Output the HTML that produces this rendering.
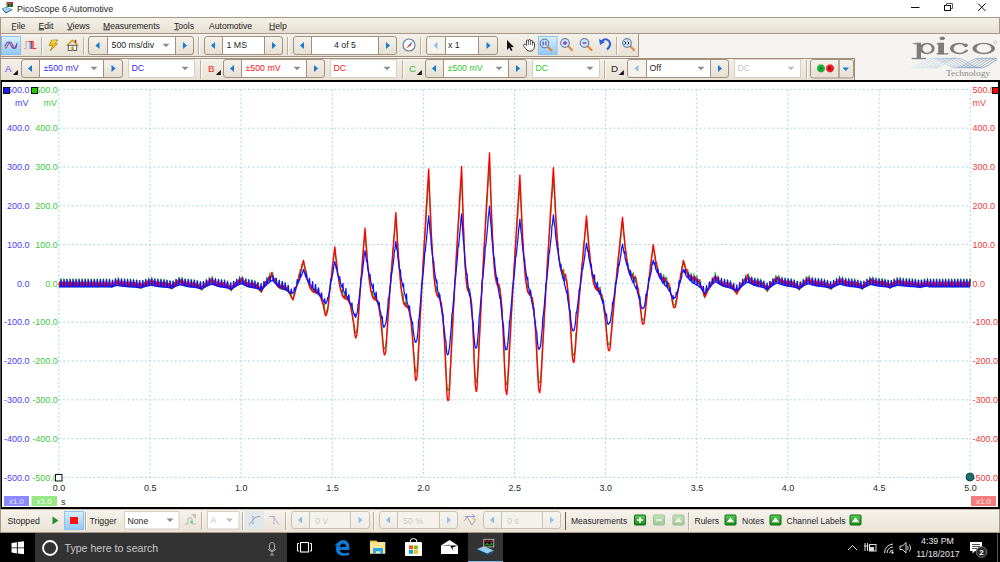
<!DOCTYPE html><html><head><meta charset="utf-8"><style>html,body{margin:0;padding:0;width:1000px;height:562px;overflow:hidden;background:#fff}svg{display:block}</style></head><body>
<svg width="1000" height="562" viewBox="0 0 1000 562" font-family='"Liberation Sans", sans-serif'>
<defs>
<linearGradient id="gmenu" x1="0" y1="0" x2="0" y2="1"><stop offset="0" stop-color="#f6f3ed"/><stop offset="1" stop-color="#e5ddcf"/></linearGradient>
<linearGradient id="gpanel" x1="0" y1="0" x2="0" y2="1"><stop offset="0" stop-color="#f4f1ea"/><stop offset="1" stop-color="#e7e1d5"/></linearGradient>
<linearGradient id="gbtn" x1="0" y1="0" x2="0" y2="1"><stop offset="0" stop-color="#f5f2ec"/><stop offset="1" stop-color="#e6dfd2"/></linearGradient>
<linearGradient id="gbtnd" x1="0" y1="0" x2="0" y2="1"><stop offset="0" stop-color="#f7f5f1"/><stop offset="1" stop-color="#efebe4"/></linearGradient>
<linearGradient id="gsel" x1="0" y1="0" x2="0" y2="1"><stop offset="0" stop-color="#d8f0fd"/><stop offset="1" stop-color="#8fc9f7"/></linearGradient>
<linearGradient id="gstatus" x1="0" y1="0" x2="0" y2="1"><stop offset="0" stop-color="#f6f3ed"/><stop offset="1" stop-color="#e9e3d6"/></linearGradient>
<linearGradient id="ggreen" x1="0" y1="0" x2="0" y2="1"><stop offset="0" stop-color="#5fcf5f"/><stop offset="1" stop-color="#168a16"/></linearGradient>
</defs>
<rect x="0" y="0" width="1000" height="17" fill="#ffffff" />
<polygon points="1.8,8.4 6.5,7 12.8,9.8 5.6,13.6" fill="#24466e"/>
<polygon points="2.6,8.5 6.5,7.3 11.6,9.6 5.6,12.4" fill="#9fd3f3"/>
<rect x="6.6" y="2.2" width="6.4" height="4.6" fill="#1a2a1a" />
<rect x="7" y="2.6" width="5.6" height="1.8" fill="#d83a3a" />
<rect x="7" y="4.4" width="5.6" height="2.2" fill="#20b030" />
<rect x="8.2" y="4.2" width="0.9" height="2.4" fill="#111" />
<rect x="10.8" y="4.2" width="0.9" height="2.4" fill="#111" />
<text x="17" y="12" font-size="8.9" fill="#1a1a1a" text-anchor="start" >PicoScope 6 Automotive</text>
<line x1="911" y1="7.5" x2="919.5" y2="7.5" stroke="#111111" stroke-width="1" />
<rect x="944.5" y="5.5" width="6" height="5" fill="none" stroke="#111" stroke-width="1"/>
<path d="M946.5,5.5 V3.5 H952.5 V8.5 H950.5" fill="none" stroke="#555" stroke-width="1"/>
<line x1="978" y1="3.5" x2="985.5" y2="11" stroke="#111111" stroke-width="1" />
<line x1="985.5" y1="3.5" x2="978" y2="11" stroke="#111111" stroke-width="1" />
<rect x="0" y="17" width="1000" height="17" fill="url(#gmenu)" />
<line x1="0" y1="17.5" x2="1000" y2="17.5" stroke="#a8978a" stroke-width="1" />
<line x1="0" y1="33.5" x2="1000" y2="33.5" stroke="#a8978a" stroke-width="1" />
<line x1="0.5" y1="17" x2="0.5" y2="80" stroke="#a8978a" stroke-width="1" />
<line x1="999.5" y1="17" x2="999.5" y2="34" stroke="#a8978a" stroke-width="1" />
<text x="11.5" y="28.6" font-size="8.6" fill="#1a1a1a" text-anchor="start" >File</text>
<line x1="11.8" y1="29.8" x2="16.0" y2="29.8" stroke="#1a1a1a" stroke-width="0.9" />
<text x="38.5" y="28.6" font-size="8.6" fill="#1a1a1a" text-anchor="start" >Edit</text>
<line x1="38.8" y1="29.8" x2="44.0" y2="29.8" stroke="#1a1a1a" stroke-width="0.9" />
<text x="67" y="28.6" font-size="8.6" fill="#1a1a1a" text-anchor="start" >Views</text>
<line x1="67.3" y1="29.8" x2="72.5" y2="29.8" stroke="#1a1a1a" stroke-width="0.9" />
<text x="103" y="28.6" font-size="8.6" fill="#1a1a1a" text-anchor="start" >Measurements</text>
<line x1="103.3" y1="29.8" x2="110" y2="29.8" stroke="#1a1a1a" stroke-width="0.9" />
<text x="174" y="28.6" font-size="8.6" fill="#1a1a1a" text-anchor="start" >Tools</text>
<line x1="174.3" y1="29.8" x2="179" y2="29.8" stroke="#1a1a1a" stroke-width="0.9" />
<text x="209" y="28.6" font-size="8.6" fill="#1a1a1a" text-anchor="start" >Automotive</text>
<text x="269" y="28.6" font-size="8.6" fill="#1a1a1a" text-anchor="start" >Help</text>
<line x1="269.3" y1="29.8" x2="275" y2="29.8" stroke="#1a1a1a" stroke-width="0.9" />
<rect x="0" y="34" width="1000" height="46" fill="#f4f3ef" />
<rect x="1" y="34" width="638" height="23" fill="url(#gpanel)" />
<line x1="638.5" y1="34" x2="638.5" y2="57" stroke="#a3917f" stroke-width="1" />
<line x1="1" y1="56.5" x2="639" y2="56.5" stroke="#a3917f" stroke-width="1" />
<rect x="1" y="57" width="1000" height="1" fill="#f4f3ef" />
<rect x="1" y="58" width="854" height="22" fill="url(#gpanel)" />
<line x1="1" y1="58.5" x2="855" y2="58.5" stroke="#a3917f" stroke-width="1" />
<line x1="854.5" y1="58" x2="854.5" y2="80" stroke="#a3917f" stroke-width="1" />
<line x1="0.5" y1="17" x2="0.5" y2="80" stroke="#a8978a" stroke-width="1" />
<rect x="1.5" y="36.5" width="19" height="18" fill="url(#gsel)" stroke="#8ec2ee" stroke-width="1"/>
<path d="M5,48.5 C7,48.5 8.5,42 10.5,42 C12.5,42 13,48.5 15,48.5 C16,48.5 16.5,46.5 17,45.5" fill="none" stroke="#e83a3a" stroke-width="1.1"/>
<path d="M5,46.5 C6,44 7,42 8.5,42 C10.5,42 11.5,48.5 13.5,48.5 C15.5,48.5 16.5,44.5 17,43" fill="none" stroke="#3a4ae8" stroke-width="1.1"/>
<path d="M24,48.5 H26 V41.5 H29" fill="none" stroke="#f39a9a" stroke-width="1.2"/>
<path d="M29,41.5 H33 V48.5 H36" fill="none" stroke="#ff1a1a" stroke-width="1.2"/>
<rect x="29.2" y="42" width="1.8" height="7" fill="#55c0ee" />
<rect x="31" y="42" width="1.2" height="7" fill="#c03080" />
<line x1="41.5" y1="37" x2="41.5" y2="55" stroke="#bcae9f" stroke-width="1" />
<line x1="42.5" y1="37" x2="42.5" y2="55" stroke="#ffffff" stroke-width="1" opacity="0.8"/>
<path d="M51.5,40.2 L58,40 L54.8,43.8 L57.6,43.8 L50.2,50.8 L52.6,45.6 L49,45.6 Z" fill="#f2c21a" stroke="#a87c0a" stroke-width="0.7" stroke-linejoin="round"/>
<path d="M52.5,41 L55.5,41 L53.5,43.5" fill="none" stroke="#fff6c0" stroke-width="0.8"/>
<rect x="68.3" y="45.3" width="8.4" height="5.2" fill="#f4fbff" stroke="#3c4a66" stroke-width="0.9"/>
<path d="M66.8,45.8 L72.5,40.2 L78.2,45.8" fill="none" stroke="#c89410" stroke-width="1.4" stroke-linejoin="round"/>
<rect x="71.3" y="46.5" width="2.6" height="4" fill="#d49c12" />
<rect x="75" y="39.8" width="1.2" height="2.8" fill="#a01414" />
<line x1="83.5" y1="37" x2="83.5" y2="55" stroke="#bcae9f" stroke-width="1" />
<line x1="84.5" y1="37" x2="84.5" y2="55" stroke="#ffffff" stroke-width="1" opacity="0.8"/>
<rect x="88.5" y="36.5" width="105" height="18" rx="2.5" fill="url(#gbtn)" stroke="#a3917f" stroke-width="1"/>
<rect x="107" y="37" width="69" height="17" fill="#ffffff" />
<line x1="107.5" y1="37" x2="107.5" y2="54" stroke="#a3917f" stroke-width="1" />
<line x1="175.5" y1="37" x2="175.5" y2="54" stroke="#a3917f" stroke-width="1" />
<path d="M99.5,42.0 L95.5,45.5 L99.5,49.0 Z" fill="#1778d2"/>
<path d="M183.0,42.0 L187.0,45.5 L183.0,49.0 Z" fill="#1778d2"/>
<text x="111.5" y="48.2" font-size="8.8" fill="#1e1e1e" text-anchor="start" >500 ms/div</text>
<path d="M162.5,43.7 L169.5,43.7 L166,47.3 Z" fill="#8c8c8c"/>
<line x1="198.5" y1="37" x2="198.5" y2="55" stroke="#bcae9f" stroke-width="1" />
<line x1="199.5" y1="37" x2="199.5" y2="55" stroke="#ffffff" stroke-width="1" opacity="0.8"/>
<rect x="204.5" y="36.5" width="78" height="18" rx="2.5" fill="url(#gbtn)" stroke="#a3917f" stroke-width="1"/>
<rect x="222" y="37" width="43" height="17" fill="#ffffff" />
<line x1="222.5" y1="37" x2="222.5" y2="54" stroke="#a3917f" stroke-width="1" />
<line x1="264.5" y1="37" x2="264.5" y2="54" stroke="#a3917f" stroke-width="1" />
<path d="M215.0,42.0 L211.0,45.5 L215.0,49.0 Z" fill="#1778d2"/>
<path d="M272.0,42.0 L276.0,45.5 L272.0,49.0 Z" fill="#1778d2"/>
<text x="226.5" y="48.2" font-size="8.8" fill="#1e1e1e" text-anchor="start" >1 MS</text>
<line x1="287.5" y1="37" x2="287.5" y2="55" stroke="#bcae9f" stroke-width="1" />
<line x1="288.5" y1="37" x2="288.5" y2="55" stroke="#ffffff" stroke-width="1" opacity="0.8"/>
<rect x="293.5" y="36.5" width="103" height="18" rx="2.5" fill="url(#gbtn)" stroke="#a3917f" stroke-width="1"/>
<rect x="311" y="37" width="68" height="17" fill="#ffffff" />
<line x1="311.5" y1="37" x2="311.5" y2="54" stroke="#a3917f" stroke-width="1" />
<line x1="378.5" y1="37" x2="378.5" y2="54" stroke="#a3917f" stroke-width="1" />
<path d="M304.0,42.0 L300.0,45.5 L304.0,49.0 Z" fill="#1778d2"/>
<path d="M386.0,42.0 L390.0,45.5 L386.0,49.0 Z" fill="#1778d2"/>
<text x="345" y="48.2" font-size="8.8" fill="#1e1e1e" text-anchor="middle" >4 of 5</text>
<circle cx="409" cy="45" r="6" fill="#ffffff" stroke="#6a7f9a" stroke-width="1.2"/>
<path d="M406,48.5 L409.5,44.2 L410.8,45.5 Z" fill="#e02020"/><path d="M412.5,41.5 L409.5,44.2 L410.8,45.5 Z" fill="#3050d0"/>
<line x1="420.5" y1="37" x2="420.5" y2="55" stroke="#bcae9f" stroke-width="1" />
<line x1="421.5" y1="37" x2="421.5" y2="55" stroke="#ffffff" stroke-width="1" opacity="0.8"/>
<rect x="426.5" y="36.5" width="71" height="18" rx="2.5" fill="url(#gbtn)" stroke="#a3917f" stroke-width="1"/>
<rect x="427.5" y="37.5" width="17" height="16" fill="#f5f3ee" />
<rect x="445" y="37" width="34" height="17" fill="#ffffff" />
<line x1="445.5" y1="37" x2="445.5" y2="54" stroke="#a3917f" stroke-width="1" />
<line x1="478.5" y1="37" x2="478.5" y2="54" stroke="#a3917f" stroke-width="1" />
<path d="M437.5,42.0 L433.5,45.5 L437.5,49.0 Z" fill="#8fc0e8"/>
<path d="M486.5,42.0 L490.5,45.5 L486.5,49.0 Z" fill="#1778d2"/>
<text x="448" y="48.2" font-size="8.8" fill="#1e1e1e" text-anchor="start" >x 1</text>
<path d="M507,40 L507,50 L509.3,47.8 L511,51 L512.5,50.3 L510.8,47.2 L514,47 Z" fill="#111"/>
<path d="M524,46.5 L526,48.8 Q527,51 529,51 L532,51 Q534.5,49 534.5,46 L534.5,43.2 Q534.5,42.2 533.5,42.2 Q532.5,42.2 532.5,43.2 L532.5,41.5 Q532.5,40.5 531.5,40.5 Q530.5,40.5 530.5,41.5 L530.5,40.5 Q530.5,39.5 529.5,39.5 Q528.5,39.5 528.5,40.5 L528.5,41 Q528.5,40 527.5,40 Q526.5,40 526.5,41 L526.5,45.5 L525.5,44.5 Q524.5,43.8 523.8,44.6 Q523.3,45.3 524,46.5 Z" fill="#ffffff" stroke="#151515" stroke-width="0.8"/>
<path d="M528.5,41 V45 M530.5,41.5 V45 M532.5,43 V45.5" fill="none" stroke="#151515" stroke-width="0.6"/>
<rect x="538.5" y="36.5" width="18.5" height="18" fill="url(#gsel)" stroke="#8ec2ee" stroke-width="1"/>
<line x1="547.5" y1="46.5" x2="551.5" y2="50.5" stroke="#e88a3a" stroke-width="2.4" stroke-linecap="round"/>
<circle cx="544.5" cy="43.5" r="4.3" fill="#c9e4f6" stroke="#6d86a8" stroke-width="1.2"/>
<rect x="542.5" y="41.5" width="1.2" height="4" fill="#6040c0"/><rect x="545.3" y="41.5" width="1.2" height="4" fill="#6040c0"/>
<line x1="568" y1="46" x2="572" y2="50" stroke="#e88a3a" stroke-width="2.4" stroke-linecap="round"/>
<circle cx="565" cy="43" r="4.3" fill="#c9e4f6" stroke="#6d86a8" stroke-width="1.2"/>
<path d="M563,43 H567 M565,41 V45" stroke="#8040c0" stroke-width="1.4"/>
<line x1="587.5" y1="46" x2="591.5" y2="50" stroke="#e88a3a" stroke-width="2.4" stroke-linecap="round"/>
<circle cx="584.5" cy="43" r="4.3" fill="#c9e4f6" stroke="#6d86a8" stroke-width="1.2"/>
<path d="M582.5,43 H586.5" stroke="#8040c0" stroke-width="1.4"/>
<path d="M601,42 Q605,37 609,41 Q612,45 607,49.5" fill="none" stroke="#2a5fd8" stroke-width="2"/><path d="M599,39 L600,45 L605,42 Z" fill="#2a5fd8"/>
<line x1="616.5" y1="37" x2="616.5" y2="55" stroke="#bcae9f" stroke-width="1" />
<line x1="617.5" y1="37" x2="617.5" y2="55" stroke="#ffffff" stroke-width="1" opacity="0.8"/>
<line x1="630" y1="46" x2="634" y2="50" stroke="#e88a3a" stroke-width="2.4" stroke-linecap="round"/>
<circle cx="627" cy="43" r="4.3" fill="#c9e4f6" stroke="#6d86a8" stroke-width="1.2"/>
<path d="M624.5,41.5 L626,43 L624.5,44.5 M627.5,41.5 L629,43 L627.5,44.5" stroke="#111" stroke-width="1" fill="none"/>
<text x="5" y="71.9" font-size="9.8" fill="#5a4df5" text-anchor="start" >A</text>
<path d="M17.8,75 L12.8,75 L17.8,70 Z" fill="#111"/>
<rect x="21.5" y="59.5" width="101" height="18" rx="2.5" fill="url(#gbtn)" stroke="#a3917f" stroke-width="1"/>
<rect x="39" y="60" width="65" height="17" fill="#ffffff" />
<line x1="39.5" y1="60" x2="39.5" y2="77" stroke="#a3917f" stroke-width="1" />
<line x1="103.5" y1="60" x2="103.5" y2="77" stroke="#a3917f" stroke-width="1" />
<path d="M32.0,65.0 L28.0,68.5 L32.0,72.0 Z" fill="#1778d2"/>
<path d="M111.5,65.0 L115.5,68.5 L111.5,72.0 Z" fill="#1778d2"/>
<text x="43.5" y="71.2" font-size="8.8" fill="#3a2cf5" text-anchor="start" >±500 mV</text>
<path d="M90.5,66.7 L97.5,66.7 L94,70.3 Z" fill="#8c8c8c"/>
<rect x="128.5" y="59.5" width="66" height="18" fill="#ffffff" stroke="#d8cfc4" stroke-width="1"/>
<text x="131.5" y="71.4" font-size="8.8" fill="#3a2cf5" text-anchor="start" >DC</text>
<path d="M181.5,66.7 L188.5,66.7 L185,70.3 Z" fill="#8c8c8c"/>
<line x1="200.5" y1="60" x2="200.5" y2="79" stroke="#bcae9f" stroke-width="1" />
<line x1="201.5" y1="60" x2="201.5" y2="79" stroke="#ffffff" stroke-width="1" opacity="0.8"/>
<text x="208" y="71.9" font-size="9.8" fill="#f02020" text-anchor="start" >B</text>
<path d="M220.8,75 L215.8,75 L220.8,70 Z" fill="#111"/>
<rect x="223.5" y="59.5" width="101" height="18" rx="2.5" fill="url(#gbtn)" stroke="#a3917f" stroke-width="1"/>
<rect x="241" y="60" width="66" height="17" fill="#ffffff" />
<line x1="241.5" y1="60" x2="241.5" y2="77" stroke="#a3917f" stroke-width="1" />
<line x1="306.5" y1="60" x2="306.5" y2="77" stroke="#a3917f" stroke-width="1" />
<path d="M234.0,65.0 L230.0,68.5 L234.0,72.0 Z" fill="#1778d2"/>
<path d="M314.0,65.0 L318.0,68.5 L314.0,72.0 Z" fill="#1778d2"/>
<text x="245.5" y="71.2" font-size="8.8" fill="#f02020" text-anchor="start" >±500 mV</text>
<path d="M293.5,66.7 L300.5,66.7 L297,70.3 Z" fill="#8c8c8c"/>
<rect x="330.5" y="59.5" width="66" height="18" fill="#ffffff" stroke="#d8cfc4" stroke-width="1"/>
<text x="333.5" y="71.4" font-size="8.8" fill="#f02020" text-anchor="start" >DC</text>
<path d="M383.5,66.7 L390.5,66.7 L387,70.3 Z" fill="#8c8c8c"/>
<line x1="402.5" y1="60" x2="402.5" y2="79" stroke="#bcae9f" stroke-width="1" />
<line x1="403.5" y1="60" x2="403.5" y2="79" stroke="#ffffff" stroke-width="1" opacity="0.8"/>
<text x="409" y="71.9" font-size="9.8" fill="#30c830" text-anchor="start" >C</text>
<path d="M421.8,75 L416.8,75 L421.8,70 Z" fill="#111"/>
<rect x="425.5" y="59.5" width="101" height="18" rx="2.5" fill="url(#gbtn)" stroke="#a3917f" stroke-width="1"/>
<rect x="443" y="60" width="66" height="17" fill="#ffffff" />
<line x1="443.5" y1="60" x2="443.5" y2="77" stroke="#a3917f" stroke-width="1" />
<line x1="508.5" y1="60" x2="508.5" y2="77" stroke="#a3917f" stroke-width="1" />
<path d="M436.0,65.0 L432.0,68.5 L436.0,72.0 Z" fill="#1778d2"/>
<path d="M516.0,65.0 L520.0,68.5 L516.0,72.0 Z" fill="#1778d2"/>
<text x="447.5" y="71.2" font-size="8.8" fill="#30c830" text-anchor="start" >±500 mV</text>
<path d="M495.5,66.7 L502.5,66.7 L499,70.3 Z" fill="#8c8c8c"/>
<rect x="532.5" y="59.5" width="67" height="18" fill="#ffffff" stroke="#d8cfc4" stroke-width="1"/>
<text x="535.5" y="71.4" font-size="8.8" fill="#30c830" text-anchor="start" >DC</text>
<path d="M586.5,66.7 L593.5,66.7 L590,70.3 Z" fill="#8c8c8c"/>
<line x1="604.5" y1="60" x2="604.5" y2="79" stroke="#bcae9f" stroke-width="1" />
<line x1="605.5" y1="60" x2="605.5" y2="79" stroke="#ffffff" stroke-width="1" opacity="0.8"/>
<text x="611" y="71.9" font-size="9.8" fill="#1e1e1e" text-anchor="start" >D</text>
<path d="M623.8,75 L618.8,75 L623.8,70 Z" fill="#111"/>
<rect x="627.5" y="59.5" width="101" height="18" rx="2.5" fill="url(#gbtn)" stroke="#a3917f" stroke-width="1"/>
<rect x="628.5" y="60.5" width="17" height="16" fill="#f5f3ee" />
<rect x="646" y="60" width="65" height="17" fill="#ffffff" />
<line x1="646.5" y1="60" x2="646.5" y2="77" stroke="#a3917f" stroke-width="1" />
<line x1="710.5" y1="60" x2="710.5" y2="77" stroke="#a3917f" stroke-width="1" />
<path d="M638.5,65.0 L634.5,68.5 L638.5,72.0 Z" fill="#8fc0e8"/>
<path d="M718.0,65.0 L722.0,68.5 L718.0,72.0 Z" fill="#1778d2"/>
<text x="649.5" y="71.2" font-size="8.8" fill="#1e1e1e" text-anchor="start" >Off</text>
<path d="M697.5,66.7 L704.5,66.7 L701,70.3 Z" fill="#8c8c8c"/>
<rect x="734.5" y="59.5" width="66" height="18" fill="#ffffff" stroke="#d8cfc4" stroke-width="1"/>
<text x="737.5" y="71.4" font-size="8.8" fill="#c4c4c4" text-anchor="start" >DC</text>
<path d="M787.5,66.7 L794.5,66.7 L791,70.3 Z" fill="#bdbdbd"/>
<line x1="806.5" y1="60" x2="806.5" y2="79" stroke="#bcae9f" stroke-width="1" />
<line x1="807.5" y1="60" x2="807.5" y2="79" stroke="#ffffff" stroke-width="1" opacity="0.8"/>
<rect x="810.5" y="59.5" width="43" height="18.5" rx="2.5" fill="url(#gbtn)" stroke="#a3917f"/>
<line x1="839" y1="60" x2="839" y2="78" stroke="#a3917f" stroke-width="1.4" />
<polygon points="824.88,70.01 822.61,72.28 819.39,72.28 817.12,70.01 817.12,66.79 819.39,64.52 822.61,64.52 824.88,66.79" fill="#1fb33a"/>
<polygon points="833.88,70.01 831.61,72.28 828.39,72.28 826.12,70.01 826.12,66.79 828.39,64.52 831.61,64.52 833.88,66.79" fill="#f01c28"/>
<path d="M819.8,70 L821,67 L822.2,70" fill="none" stroke="#063" stroke-width="0.7"/><path d="M829.3,67 V70 M829.3,68.5 L831,67 M829.3,68.5 L831,70" fill="none" stroke="#300" stroke-width="0.7"/>
<path d="M842.5,67.5 H849 L845.75,71 Z" fill="#1a78d0"/>
<g fill="#7c7c7c">
<path fill-rule="evenodd" d="M919.3,48.45 a7.7,5.75 0 1 0 15.4,0 a7.7,5.75 0 1 0 -15.4,0 Z M922.6,48.45 a4.6,4.3 0 1 0 9.2,0 a4.6,4.3 0 1 0 -9.2,0 Z" />
<rect x="916.7" y="42.7" width="4.3" height="16.2"/><rect x="911.7" y="57.9" width="14.5" height="1.3"/><path d="M911.7,43.8 L916.7,42.7 L916.7,44.6 Z"/>
<rect x="938.2" y="42.7" width="5.8" height="11.6"/><rect x="936.5" y="53.2" width="12" height="1.2"/><path d="M936.3,43.9 L938.2,42.7 L938.2,44.8 Z"/><ellipse cx="942.3" cy="38.3" rx="2.6" ry="1.9"/>
</g>
<defs><clipPath id="cclip"><path d="M940,34 H975 V43.8 L959,48.6 L975,51.2 V62 H940 Z"/></clipPath></defs>
<path fill="#7c7c7c" fill-rule="evenodd" clip-path="url(#cclip)" d="M950,48.45 a9.3,5.75 0 1 0 18.6,0 a9.3,5.75 0 1 0 -18.6,0 Z M953.6,48.45 a6.1,4.3 0 1 0 12.2,0 a6.1,4.3 0 1 0 -12.2,0 Z"/>
<ellipse cx="965.6" cy="45.2" rx="2.2" ry="1.8" fill="#7c7c7c"/>
<path fill="#7c7c7c" fill-rule="evenodd" d="M972.4,48.45 a11.3,5.75 0 1 0 22.6,0 a11.3,5.75 0 1 0 -22.6,0 Z M976.4,48.45 a7.5,4.35 0 1 0 15,0 a7.5,4.35 0 1 0 -15,0 Z"/>
<circle cx="995.3" cy="42.3" r="1.3" fill="none" stroke="#a0a0a0" stroke-width="0.5"/>
<text x="946" y="75.6" font-size="9.2" fill="#8a8a8a" font-family="'Liberation Serif', serif" textLength="44" lengthAdjust="spacingAndGlyphs">Technology</text>
<defs><linearGradient id="gwave" gradientUnits="userSpaceOnUse" x1="908" y1="0" x2="997" y2="0"><stop offset="0" stop-color="#dfe9f3"/><stop offset="0.45" stop-color="#a9c1da"/><stop offset="1" stop-color="#5f7ca4"/></linearGradient><clipPath id="wclip"><rect x="908" y="50" width="90" height="25"/></clipPath></defs>
<g clip-path="url(#wclip)" fill="none" stroke="url(#gwave)" stroke-width="0.65">
<path d="M910.0,67.90 L911.0,67.85 L912.0,67.72 L913.0,67.49 L914.0,67.19 L915.0,66.80 L916.0,66.34 L917.0,65.83 L918.0,65.25 L919.0,64.64 L920.0,64.00 L921.0,63.33 L922.0,62.67 L923.0,62.00 L924.0,61.36 L925.0,60.75 L926.0,60.17 L927.0,59.66 L928.0,59.20 L929.0,58.81 L930.0,58.51 L931.0,58.28 L932.0,58.15 L933.0,58.10 L934.0,58.15 L935.0,58.28 L936.0,58.51 L937.0,58.81 L938.0,59.20 L939.0,59.66 L940.0,60.17 L941.0,60.75 L942.0,61.36 L943.0,62.00 L944.0,62.67 L945.0,63.33 L946.0,64.00 L947.0,64.64 L948.0,65.25 L949.0,65.83 L950.0,66.34 L951.0,66.80 L952.0,67.19 L953.0,67.49 L954.0,67.72 L955.0,67.85 L956.0,67.90 L957.0,67.85 L958.0,67.72 L959.0,67.49 L960.0,67.19 L961.0,66.80 L962.0,66.34 L963.0,65.83 L964.0,65.25 L965.0,64.64 L966.0,64.00 L967.0,63.33 L968.0,62.67 L969.0,62.00 L970.0,61.36 L971.0,60.75 L972.0,60.17 L973.0,59.66 L974.0,59.20 L975.0,58.81 L976.0,58.51 L977.0,58.28 L978.0,58.15 L979.0,58.10"/>
<path d="M914.0,67.90 L915.0,67.85 L916.0,67.72 L917.0,67.49 L918.0,67.19 L919.0,66.80 L920.0,66.34 L921.0,65.83 L922.0,65.25 L923.0,64.64 L924.0,64.00 L925.0,63.33 L926.0,62.67 L927.0,62.00 L928.0,61.36 L929.0,60.75 L930.0,60.17 L931.0,59.66 L932.0,59.20 L933.0,58.81 L934.0,58.51 L935.0,58.28 L936.0,58.15 L937.0,58.10 L938.0,58.15 L939.0,58.28 L940.0,58.51 L941.0,58.81 L942.0,59.20 L943.0,59.66 L944.0,60.17 L945.0,60.75 L946.0,61.36 L947.0,62.00 L948.0,62.67 L949.0,63.33 L950.0,64.00 L951.0,64.64 L952.0,65.25 L953.0,65.83 L954.0,66.34 L955.0,66.80 L956.0,67.19 L957.0,67.49 L958.0,67.72 L959.0,67.85 L960.0,67.90 L961.0,67.85 L962.0,67.72 L963.0,67.49 L964.0,67.19 L965.0,66.80 L966.0,66.34 L967.0,65.83 L968.0,65.25 L969.0,64.64 L970.0,64.00 L971.0,63.33 L972.0,62.67 L973.0,62.00 L974.0,61.36 L975.0,60.75 L976.0,60.17 L977.0,59.66 L978.0,59.20 L979.0,58.81 L980.0,58.51 L981.0,58.28 L982.0,58.15 L983.0,58.10"/>
<path d="M918.0,67.90 L919.0,67.85 L920.0,67.72 L921.0,67.49 L922.0,67.19 L923.0,66.80 L924.0,66.34 L925.0,65.83 L926.0,65.25 L927.0,64.64 L928.0,64.00 L929.0,63.33 L930.0,62.67 L931.0,62.00 L932.0,61.36 L933.0,60.75 L934.0,60.17 L935.0,59.66 L936.0,59.20 L937.0,58.81 L938.0,58.51 L939.0,58.28 L940.0,58.15 L941.0,58.10 L942.0,58.15 L943.0,58.28 L944.0,58.51 L945.0,58.81 L946.0,59.20 L947.0,59.66 L948.0,60.17 L949.0,60.75 L950.0,61.36 L951.0,62.00 L952.0,62.67 L953.0,63.33 L954.0,64.00 L955.0,64.64 L956.0,65.25 L957.0,65.83 L958.0,66.34 L959.0,66.80 L960.0,67.19 L961.0,67.49 L962.0,67.72 L963.0,67.85 L964.0,67.90 L965.0,67.85 L966.0,67.72 L967.0,67.49 L968.0,67.19 L969.0,66.80 L970.0,66.34 L971.0,65.83 L972.0,65.25 L973.0,64.64 L974.0,64.00 L975.0,63.33 L976.0,62.67 L977.0,62.00 L978.0,61.36 L979.0,60.75 L980.0,60.17 L981.0,59.66 L982.0,59.20 L983.0,58.81 L984.0,58.51 L985.0,58.28 L986.0,58.15 L987.0,58.10"/>
<path d="M922.0,67.90 L923.0,67.85 L924.0,67.72 L925.0,67.49 L926.0,67.19 L927.0,66.80 L928.0,66.34 L929.0,65.83 L930.0,65.25 L931.0,64.64 L932.0,64.00 L933.0,63.33 L934.0,62.67 L935.0,62.00 L936.0,61.36 L937.0,60.75 L938.0,60.17 L939.0,59.66 L940.0,59.20 L941.0,58.81 L942.0,58.51 L943.0,58.28 L944.0,58.15 L945.0,58.10 L946.0,58.15 L947.0,58.28 L948.0,58.51 L949.0,58.81 L950.0,59.20 L951.0,59.66 L952.0,60.17 L953.0,60.75 L954.0,61.36 L955.0,62.00 L956.0,62.67 L957.0,63.33 L958.0,64.00 L959.0,64.64 L960.0,65.25 L961.0,65.83 L962.0,66.34 L963.0,66.80 L964.0,67.19 L965.0,67.49 L966.0,67.72 L967.0,67.85 L968.0,67.90 L969.0,67.85 L970.0,67.72 L971.0,67.49 L972.0,67.19 L973.0,66.80 L974.0,66.34 L975.0,65.83 L976.0,65.25 L977.0,64.64 L978.0,64.00 L979.0,63.33 L980.0,62.67 L981.0,62.00 L982.0,61.36 L983.0,60.75 L984.0,60.17 L985.0,59.66 L986.0,59.20 L987.0,58.81 L988.0,58.51 L989.0,58.28 L990.0,58.15 L991.0,58.10"/>
<path d="M926.0,67.90 L927.0,67.85 L928.0,67.72 L929.0,67.49 L930.0,67.19 L931.0,66.80 L932.0,66.34 L933.0,65.83 L934.0,65.25 L935.0,64.64 L936.0,64.00 L937.0,63.33 L938.0,62.67 L939.0,62.00 L940.0,61.36 L941.0,60.75 L942.0,60.17 L943.0,59.66 L944.0,59.20 L945.0,58.81 L946.0,58.51 L947.0,58.28 L948.0,58.15 L949.0,58.10 L950.0,58.15 L951.0,58.28 L952.0,58.51 L953.0,58.81 L954.0,59.20 L955.0,59.66 L956.0,60.17 L957.0,60.75 L958.0,61.36 L959.0,62.00 L960.0,62.67 L961.0,63.33 L962.0,64.00 L963.0,64.64 L964.0,65.25 L965.0,65.83 L966.0,66.34 L967.0,66.80 L968.0,67.19 L969.0,67.49 L970.0,67.72 L971.0,67.85 L972.0,67.90 L973.0,67.85 L974.0,67.72 L975.0,67.49 L976.0,67.19 L977.0,66.80 L978.0,66.34 L979.0,65.83 L980.0,65.25 L981.0,64.64 L982.0,64.00 L983.0,63.33 L984.0,62.67 L985.0,62.00 L986.0,61.36 L987.0,60.75 L988.0,60.17 L989.0,59.66 L990.0,59.20 L991.0,58.81 L992.0,58.51 L993.0,58.28 L994.0,58.15 L995.0,58.10"/>
<path d="M930.0,67.90 L931.0,67.85 L932.0,67.72 L933.0,67.49 L934.0,67.19 L935.0,66.80 L936.0,66.34 L937.0,65.83 L938.0,65.25 L939.0,64.64 L940.0,64.00 L941.0,63.33 L942.0,62.67 L943.0,62.00 L944.0,61.36 L945.0,60.75 L946.0,60.17 L947.0,59.66 L948.0,59.20 L949.0,58.81 L950.0,58.51 L951.0,58.28 L952.0,58.15 L953.0,58.10 L954.0,58.15 L955.0,58.28 L956.0,58.51 L957.0,58.81 L958.0,59.20 L959.0,59.66 L960.0,60.17 L961.0,60.75 L962.0,61.36 L963.0,62.00 L964.0,62.67 L965.0,63.33 L966.0,64.00 L967.0,64.64 L968.0,65.25 L969.0,65.83 L970.0,66.34 L971.0,66.80 L972.0,67.19 L973.0,67.49 L974.0,67.72 L975.0,67.85 L976.0,67.90 L977.0,67.85 L978.0,67.72 L979.0,67.49 L980.0,67.19 L981.0,66.80 L982.0,66.34 L983.0,65.83 L984.0,65.25 L985.0,64.64 L986.0,64.00 L987.0,63.33 L988.0,62.67 L989.0,62.00 L990.0,61.36 L991.0,60.75 L992.0,60.17 L993.0,59.66 L994.0,59.20 L995.0,58.81 L996.0,58.51 L997.0,58.28"/>
<path d="M934.0,67.90 L935.0,67.85 L936.0,67.72 L937.0,67.49 L938.0,67.19 L939.0,66.80 L940.0,66.34 L941.0,65.83 L942.0,65.25 L943.0,64.64 L944.0,64.00 L945.0,63.33 L946.0,62.67 L947.0,62.00 L948.0,61.36 L949.0,60.75 L950.0,60.17 L951.0,59.66 L952.0,59.20 L953.0,58.81 L954.0,58.51 L955.0,58.28 L956.0,58.15 L957.0,58.10 L958.0,58.15 L959.0,58.28 L960.0,58.51 L961.0,58.81 L962.0,59.20 L963.0,59.66 L964.0,60.17 L965.0,60.75 L966.0,61.36 L967.0,62.00 L968.0,62.67 L969.0,63.33 L970.0,64.00 L971.0,64.64 L972.0,65.25 L973.0,65.83 L974.0,66.34 L975.0,66.80 L976.0,67.19 L977.0,67.49 L978.0,67.72 L979.0,67.85 L980.0,67.90 L981.0,67.85 L982.0,67.72 L983.0,67.49 L984.0,67.19 L985.0,66.80 L986.0,66.34 L987.0,65.83 L988.0,65.25 L989.0,64.64 L990.0,64.00 L991.0,63.33 L992.0,62.67 L993.0,62.00 L994.0,61.36 L995.0,60.75 L996.0,60.17 L997.0,59.66"/>
</g>
<rect x="0" y="80" width="1000" height="429" fill="#000000" />
<rect x="2" y="82" width="996" height="425" fill="#ffffff" />
<line x1="0.5" y1="80" x2="0.5" y2="509" stroke="#555" stroke-width="1" />
<g stroke="#a9d6e6" stroke-width="1" stroke-dasharray="2 2.3">
<line x1="58.80" y1="89.4" x2="58.80" y2="477.4"/>
<line x1="149.94" y1="89.4" x2="149.94" y2="477.4"/>
<line x1="241.08" y1="89.4" x2="241.08" y2="477.4"/>
<line x1="332.22" y1="89.4" x2="332.22" y2="477.4"/>
<line x1="423.36" y1="89.4" x2="423.36" y2="477.4"/>
<line x1="514.50" y1="89.4" x2="514.50" y2="477.4"/>
<line x1="605.64" y1="89.4" x2="605.64" y2="477.4"/>
<line x1="696.78" y1="89.4" x2="696.78" y2="477.4"/>
<line x1="787.92" y1="89.4" x2="787.92" y2="477.4"/>
<line x1="879.06" y1="89.4" x2="879.06" y2="477.4"/>
<line x1="970.20" y1="89.4" x2="970.20" y2="477.4"/>
<line x1="58.8" y1="89.40" x2="970.2" y2="89.40"/>
<line x1="58.8" y1="128.20" x2="970.2" y2="128.20"/>
<line x1="58.8" y1="167.00" x2="970.2" y2="167.00"/>
<line x1="58.8" y1="205.80" x2="970.2" y2="205.80"/>
<line x1="58.8" y1="244.60" x2="970.2" y2="244.60"/>
<line x1="58.8" y1="283.40" x2="970.2" y2="283.40"/>
<line x1="58.8" y1="322.20" x2="970.2" y2="322.20"/>
<line x1="58.8" y1="361.00" x2="970.2" y2="361.00"/>
<line x1="58.8" y1="399.80" x2="970.2" y2="399.80"/>
<line x1="58.8" y1="438.60" x2="970.2" y2="438.60"/>
<line x1="58.8" y1="477.40" x2="970.2" y2="477.40"/>
</g>
<text x="29.5" y="92.5" font-size="9" fill="#4a3cf8" text-anchor="end" >500.0</text>
<text x="57.7" y="92.5" font-size="9" fill="#3ccc3c" text-anchor="end" >500.0</text>
<text x="972.5" y="92.5" font-size="9" fill="#f23a3a" text-anchor="start" >500.0</text>
<text x="29.5" y="131.29999999999998" font-size="9" fill="#4a3cf8" text-anchor="end" >400.0</text>
<text x="57.7" y="131.29999999999998" font-size="9" fill="#3ccc3c" text-anchor="end" >400.0</text>
<text x="972.5" y="131.29999999999998" font-size="9" fill="#f23a3a" text-anchor="start" >400.0</text>
<text x="29.5" y="170.1" font-size="9" fill="#4a3cf8" text-anchor="end" >300.0</text>
<text x="57.7" y="170.1" font-size="9" fill="#3ccc3c" text-anchor="end" >300.0</text>
<text x="972.5" y="170.1" font-size="9" fill="#f23a3a" text-anchor="start" >300.0</text>
<text x="29.5" y="208.9" font-size="9" fill="#4a3cf8" text-anchor="end" >200.0</text>
<text x="57.7" y="208.9" font-size="9" fill="#3ccc3c" text-anchor="end" >200.0</text>
<text x="972.5" y="208.9" font-size="9" fill="#f23a3a" text-anchor="start" >200.0</text>
<text x="29.5" y="247.7" font-size="9" fill="#4a3cf8" text-anchor="end" >100.0</text>
<text x="57.7" y="247.7" font-size="9" fill="#3ccc3c" text-anchor="end" >100.0</text>
<text x="972.5" y="247.7" font-size="9" fill="#f23a3a" text-anchor="start" >100.0</text>
<text x="29.5" y="286.5" font-size="9" fill="#4a3cf8" text-anchor="end" >0.0</text>
<text x="57.7" y="286.5" font-size="9" fill="#3ccc3c" text-anchor="end" >0.0</text>
<text x="972.5" y="286.5" font-size="9" fill="#f23a3a" text-anchor="start" >0.0</text>
<text x="29.5" y="325.30000000000007" font-size="9" fill="#4a3cf8" text-anchor="end" >-100.0</text>
<text x="57.7" y="325.30000000000007" font-size="9" fill="#3ccc3c" text-anchor="end" >-100.0</text>
<text x="972.5" y="325.30000000000007" font-size="9" fill="#f23a3a" text-anchor="start" >-100.0</text>
<text x="29.5" y="364.1" font-size="9" fill="#4a3cf8" text-anchor="end" >-200.0</text>
<text x="57.7" y="364.1" font-size="9" fill="#3ccc3c" text-anchor="end" >-200.0</text>
<text x="972.5" y="364.1" font-size="9" fill="#f23a3a" text-anchor="start" >-200.0</text>
<text x="29.5" y="402.9" font-size="9" fill="#4a3cf8" text-anchor="end" >-300.0</text>
<text x="57.7" y="402.9" font-size="9" fill="#3ccc3c" text-anchor="end" >-300.0</text>
<text x="972.5" y="402.9" font-size="9" fill="#f23a3a" text-anchor="start" >-300.0</text>
<text x="29.5" y="441.70000000000005" font-size="9" fill="#4a3cf8" text-anchor="end" >-400.0</text>
<text x="57.7" y="441.70000000000005" font-size="9" fill="#3ccc3c" text-anchor="end" >-400.0</text>
<text x="972.5" y="441.70000000000005" font-size="9" fill="#f23a3a" text-anchor="start" >-400.0</text>
<text x="29.5" y="480.5" font-size="9" fill="#4a3cf8" text-anchor="end" >-500.0</text>
<text x="57.7" y="480.5" font-size="9" fill="#3ccc3c" text-anchor="end" >-500.0</text>
<text x="972.5" y="480.5" font-size="9" fill="#f23a3a" text-anchor="start" >-500.0</text>
<text x="28.5" y="106" font-size="9" fill="#4a3cf8" text-anchor="end" >mV</text>
<text x="57" y="106" font-size="9" fill="#3ccc3c" text-anchor="end" >mV</text>
<text x="972.5" y="106" font-size="9" fill="#f23a3a" text-anchor="start" >mV</text>
<rect x="3.5" y="87.5" width="6" height="6" fill="#1a1aff" stroke="#111" stroke-width="1"/>
<rect x="31.5" y="87.5" width="6" height="6" fill="#22cc00" stroke="#111" stroke-width="1"/>
<rect x="992.5" y="87.5" width="6" height="6" fill="#ff0000" stroke="#111" stroke-width="1"/>
<text x="59.0" y="490.8" font-size="9" fill="#2a2a2a" text-anchor="middle" >0.0</text>
<text x="150.14" y="490.8" font-size="9" fill="#2a2a2a" text-anchor="middle" >0.5</text>
<text x="241.28000000000003" y="490.8" font-size="9" fill="#2a2a2a" text-anchor="middle" >1.0</text>
<text x="332.42" y="490.8" font-size="9" fill="#2a2a2a" text-anchor="middle" >1.5</text>
<text x="423.56000000000006" y="490.8" font-size="9" fill="#2a2a2a" text-anchor="middle" >2.0</text>
<text x="514.7" y="490.8" font-size="9" fill="#2a2a2a" text-anchor="middle" >2.5</text>
<text x="605.84" y="490.8" font-size="9" fill="#2a2a2a" text-anchor="middle" >3.0</text>
<text x="696.9800000000001" y="490.8" font-size="9" fill="#2a2a2a" text-anchor="middle" >3.5</text>
<text x="788.1200000000001" y="490.8" font-size="9" fill="#2a2a2a" text-anchor="middle" >4.0</text>
<text x="879.26" y="490.8" font-size="9" fill="#2a2a2a" text-anchor="middle" >4.5</text>
<text x="970.4" y="490.8" font-size="9" fill="#2a2a2a" text-anchor="middle" >5.0</text>
<text x="61" y="504.5" font-size="9" fill="#2a2a2a" text-anchor="start" >s</text>
<rect x="4" y="496" width="25" height="10" fill="#8c88ff" />
<text x="16.5" y="504" font-size="8" fill="#e6e6ff" text-anchor="middle" >x1.0</text>
<rect x="31.5" y="496" width="25.5" height="10" fill="#98e888" />
<text x="44.2" y="504" font-size="8" fill="#effff0" text-anchor="middle" >x1.0</text>
<rect x="971" y="496" width="25" height="10" fill="#f47c7c" />
<text x="983.5" y="504" font-size="8" fill="#ffe8e8" text-anchor="middle" >x1.0</text>
<g fill="none" stroke-linejoin="round"><path d="M58.8,285.4L59.1,285.4L59.6,282.0L59.8,283.5L60.1,285.4L60.8,285.4L61.1,285.4L61.8,285.4L62.1,285.4L62.6,282.0L62.8,283.3L63.1,285.4L63.8,285.4L64.1,285.4L64.8,285.4L65.2,285.4L65.6,282.0L65.8,283.1L66.1,285.4L66.8,285.4L67.2,285.4L67.8,285.4L68.2,285.4L68.7,282.0L68.8,282.9L69.2,285.4L69.8,285.4L70.2,285.4L70.8,285.4L71.2,285.4L71.7,282.0L71.8,282.7L72.2,285.4L72.8,285.4L73.2,285.4L73.8,285.4L74.2,285.4L74.7,282.0L74.8,282.5L75.2,285.4L75.8,285.4L76.2,285.4L76.8,285.4L77.3,285.4L77.8,282.0L77.8,282.2L78.2,285.4L78.8,285.4L79.3,285.4L79.8,285.4L80.3,285.4L80.8,282.0L80.8,282.0L81.3,285.4L81.8,285.4L82.3,285.4L82.8,285.4L83.3,285.4L83.8,282.2L83.8,282.0L84.3,285.4L84.8,285.4L85.3,285.4L85.8,285.4L86.4,285.4L86.8,282.4L86.8,282.0L87.3,285.4L87.8,285.4L88.4,285.4L88.8,285.4L89.4,285.4L89.8,282.6L89.9,282.0L90.4,285.4L90.8,285.4L91.4,285.4L91.8,285.4L92.4,285.4L92.8,282.8L92.9,282.0L93.4,285.4L93.8,285.4L94.4,285.4L94.8,285.4L95.5,285.4L95.8,283.0L95.9,282.0L96.4,285.4L96.8,285.4L97.5,285.4L97.8,285.4L98.5,285.4L98.8,283.2L99.0,282.0L99.5,285.4L99.8,285.4L100.5,285.4L100.8,285.4L101.5,285.4L101.8,283.4L102.0,282.0L102.5,285.4L102.8,285.4L103.5,285.4L103.8,285.4L104.5,285.4L104.8,283.6L105.0,282.0L105.5,285.4L105.8,285.4L106.5,285.4L106.8,285.4L107.6,285.4L107.8,283.9L108.1,282.0L108.5,285.4L108.8,285.4L109.6,285.4L109.8,285.4L110.6,285.1L110.8,284.0L111.0,282.8L111.1,283.8L111.6,286.4L111.8,286.3L112.6,285.8L112.8,285.6L113.6,285.1L113.8,284.0L114.1,281.8L114.6,284.6L114.8,284.5L115.6,284.0L115.8,283.9L116.7,283.5L116.8,282.6L117.0,281.2L117.2,280.1L117.6,283.6L117.8,283.6L118.7,283.9L118.8,283.9L119.7,284.2L119.8,283.6L120.2,281.1L120.7,284.5L120.8,284.5L121.7,284.7L121.8,284.7L122.7,284.9L122.8,284.5L123.2,281.7L123.7,285.1L123.8,285.1L124.7,285.2L124.8,285.2L125.8,285.3L125.8,285.0L126.2,282.0L126.7,285.3L126.8,285.4L127.8,285.4L127.8,285.4L128.8,285.4L128.8,285.3L129.3,282.0L129.8,285.4L129.8,285.4L130.8,285.4L130.8,285.4L131.8,285.5L131.8,285.5L132.3,282.1L132.8,285.5L132.8,285.5L133.8,285.6L133.8,285.6L134.8,285.7L134.8,285.7L135.3,282.5L135.8,285.7L135.8,285.9L136.8,286.1L136.8,286.1L137.8,286.3L137.9,286.3L138.4,283.2L138.8,286.3L138.8,286.6L139.8,286.9L139.9,286.9L140.8,287.3L140.9,287.3L141.0,286.7L141.4,283.9L141.8,286.3L141.9,286.8L142.8,286.4L142.9,286.3L143.8,285.9L143.9,285.8L144.4,282.5L144.8,284.7L144.9,285.4L145.8,285.0L145.9,285.0L146.8,284.6L147.0,284.5L147.4,281.2L147.8,283.3L147.9,284.1L148.8,283.8L149.0,283.7L149.8,283.4L150.0,283.4L150.5,280.0L150.8,281.9L151.0,283.1L151.0,283.1L151.8,283.3L152.0,283.4L152.8,283.8L153.0,283.9L153.5,280.9L153.8,282.9L154.0,284.3L154.8,284.6L155.0,284.7L155.8,284.9L156.1,285.0L156.5,281.8L156.8,283.6L157.0,285.2L157.8,285.3L158.1,285.4L158.8,285.5L159.1,285.5L159.6,282.2L159.8,283.7L160.1,285.6L160.8,285.6L161.1,285.6L161.8,285.6L162.1,285.6L162.6,282.3L162.8,283.6L163.1,285.6L163.8,285.6L164.1,285.7L164.8,285.7L165.2,285.8L165.6,282.5L165.8,283.7L166.1,285.9L166.8,286.0L167.2,286.1L167.8,286.3L168.2,286.4L168.7,283.4L168.8,284.3L169.2,286.8L169.8,287.0L170.2,287.2L170.8,287.4L171.2,287.6L171.7,284.7L171.8,285.4L172.0,286.8L172.2,287.9L172.8,287.3L173.2,286.9L173.8,286.5L174.2,286.1L174.7,282.7L174.8,283.1L175.2,285.4L175.8,284.9L176.2,284.6L176.8,284.2L177.3,283.9L177.8,280.5L177.8,280.8L178.2,283.3L178.8,282.9L179.3,282.6L179.8,282.4L180.0,282.3L180.3,282.4L180.8,279.6L180.8,279.6L181.3,282.9L181.8,283.3L182.3,283.5L182.8,283.8L183.3,284.1L183.8,281.3L183.8,281.2L184.3,284.6L184.8,284.8L185.3,285.0L185.8,285.1L186.4,285.3L186.8,282.4L186.8,282.1L187.3,285.5L187.8,285.6L188.4,285.6L188.8,285.7L189.4,285.7L189.8,282.9L189.9,282.4L190.4,285.8L190.8,285.8L191.4,285.8L191.8,285.8L192.4,285.8L192.8,283.2L192.9,282.5L193.4,285.9L193.8,285.9L194.4,286.0L194.8,286.0L195.4,286.2L195.8,283.9L195.9,283.1L196.4,286.4L196.8,286.5L197.4,286.8L197.8,286.9L198.5,287.2L198.8,285.3L199.0,284.4L199.4,287.7L199.8,287.9L200.5,288.3L200.8,288.5L201.5,289.0L201.8,287.3L202.0,285.8L202.5,288.5L202.8,288.2L203.5,287.6L203.8,287.3L204.5,286.7L204.8,284.8L205.0,283.3L205.5,285.9L205.8,285.6L206.5,285.0L206.8,284.8L207.6,284.2L207.8,282.6L208.1,280.9L208.5,283.5L208.8,283.3L209.6,282.8L209.8,282.6L210.6,282.0L210.8,280.6L211.1,278.7L211.6,281.5L211.6,281.5L211.8,281.6L212.6,282.2L212.8,282.3L213.6,283.0L213.8,282.1L214.1,280.3L214.6,283.7L214.8,283.9L215.6,284.4L215.8,284.5L216.7,284.9L216.8,284.0L217.1,281.9L217.6,285.3L217.8,285.3L218.7,285.5L218.8,285.6L219.7,285.7L219.8,284.9L220.2,282.4L220.7,285.8L220.8,285.8L221.7,285.8L221.8,285.8L222.7,285.8L222.8,285.3L223.2,282.5L223.7,285.9L223.8,285.9L224.7,286.1L224.8,286.1L225.8,286.3L225.8,286.0L226.2,283.3L226.7,286.7L226.8,286.8L227.8,287.3L227.8,287.3L228.8,287.9L228.8,287.8L229.3,285.3L229.8,288.7L229.8,288.7L230.8,289.5L230.8,289.6L231.2,290.0L231.8,289.2L231.8,289.2L232.3,285.8L232.8,288.1L232.8,288.1L233.8,287.1L233.8,287.1L234.8,286.1L234.8,286.0L235.3,282.6L235.8,285.0L235.8,285.1L236.8,284.2L236.8,284.1L237.8,283.3L237.9,283.2L238.3,279.8L238.8,282.1L238.8,282.4L239.8,281.6L239.9,281.5L240.8,280.8L240.9,280.8L241.0,280.0L241.4,278.0L241.8,280.9L241.9,281.4L242.8,282.4L242.9,282.5L243.8,283.4L243.9,283.5L244.4,280.9L244.8,283.6L244.9,284.3L245.8,284.9L245.9,285.0L246.8,285.5L247.0,285.6L247.4,282.6L247.8,285.0L247.9,285.9L248.8,286.1L249.0,286.2L249.8,286.3L250.0,286.3L250.5,283.0L250.8,285.2L251.0,286.4L251.8,286.4L252.0,286.4L252.8,286.4L253.0,286.5L253.5,283.2L253.8,285.3L254.0,286.6L254.8,286.8L255.0,286.9L255.8,287.2L256.1,287.3L256.5,284.4L256.8,286.3L257.0,287.8L257.8,288.4L258.1,288.6L258.8,289.2L259.1,289.5L259.6,287.0L259.8,288.7L260.1,290.4L260.8,291.2L261.1,291.7L261.3,291.9L261.8,290.8L262.1,290.2L262.6,286.7L262.8,287.5L263.1,288.5L263.8,287.3L264.1,286.8L264.8,285.6L265.1,285.1L265.6,281.6L265.8,282.3L266.1,283.5L266.8,282.4L267.1,281.9L267.8,280.9L268.2,280.4L268.6,276.9L268.8,277.5L269.1,279.0L269.8,278.0L270.2,277.5L270.8,276.7L271.2,276.1L271.7,272.5L271.8,273.0L272.0,274.1L272.2,275.5L272.8,276.8L273.2,277.8L273.8,279.2L274.2,280.2L274.7,278.6L274.8,279.2L275.2,282.2L275.8,283.3L276.2,284.1L276.8,285.0L277.3,285.6L277.7,283.3L277.8,283.7L278.2,286.7L278.8,287.2L279.3,287.6L279.8,287.9L280.3,288.1L280.8,285.0L280.8,285.1L281.3,288.3L281.8,288.4L282.3,288.5L282.8,288.5L283.3,288.5L283.8,285.3L284.3,288.7L284.8,288.8L285.3,289.0L285.8,289.2L286.4,289.5L286.8,287.1L286.8,287.0L287.3,290.4L287.8,290.9L288.4,291.7L288.8,292.3L289.4,293.3L289.8,291.8L289.9,291.6L290.4,295.2L290.8,296.1L291.4,297.2L291.8,297.9L292.4,298.9L292.8,299.4L292.9,299.6L293.0,300.0L293.4,298.6L293.8,297.1L294.4,294.8L294.8,293.4L295.4,290.9L295.8,287.7L295.9,286.6L296.4,287.0L296.8,285.4L297.4,282.9L297.8,281.5L298.5,279.0L298.8,276.1L298.9,274.9L299.4,275.4L299.8,274.1L300.5,271.8L300.8,270.6L301.5,268.3L301.8,265.8L302.0,264.6L302.5,264.4L302.8,263.1L303.5,260.4L303.8,262.1L304.5,266.2L304.8,266.9L305.0,267.2L305.5,271.5L305.8,272.9L306.5,276.1L306.8,277.3L307.6,280.3L307.8,280.0L308.0,279.7L308.5,283.7L308.8,284.5L309.6,286.6L309.8,287.2L310.6,288.9L310.8,288.1L311.1,286.9L311.6,290.4L311.8,290.7L312.6,291.4L312.8,291.6L313.6,292.0L313.8,290.9L314.1,289.0L314.6,292.3L314.8,292.4L315.6,292.5L315.8,292.5L316.6,292.7L316.8,291.8L317.1,289.8L317.6,293.1L317.8,293.3L318.6,294.0L318.8,294.2L319.7,295.5L319.8,295.0L320.2,293.8L320.6,297.5L320.8,297.8L321.7,300.3L321.8,300.7L322.7,303.8L322.8,303.7L323.2,303.4L323.7,307.8L323.8,308.3L324.7,312.4L324.8,312.8L325.7,315.7L325.8,315.6L326.2,314.9L326.7,314.0L326.7,313.9L326.8,313.8L327.7,310.0L327.8,309.6L328.8,301.1L328.8,300.7L329.2,294.3L329.7,291.6L329.8,291.0L330.8,281.9L330.8,281.6L331.8,272.7L332.3,266.5L332.8,264.4L332.8,264.1L333.8,255.4L334.8,246.8L334.8,247.1L335.3,251.2L335.8,256.4L336.8,265.5L336.8,265.8L337.8,273.4L337.9,273.9L338.3,275.2L338.8,280.3L338.8,280.6L339.8,286.2L339.9,286.6L340.8,290.8L340.9,291.2L341.4,290.5L341.8,293.9L341.9,294.4L342.8,296.5L342.9,296.6L343.8,297.8L343.9,297.9L344.4,295.2L344.8,297.9L344.9,298.6L345.8,298.8L345.9,298.9L346.8,299.2L346.9,299.2L347.4,296.6L347.8,299.1L347.9,300.0L348.8,301.3L348.9,301.6L349.8,303.8L350.0,304.3L350.5,303.8L350.8,306.8L350.9,308.1L351.8,312.5L352.0,313.5L352.8,318.8L353.0,320.2L353.5,321.7L353.8,325.4L354.0,327.6L354.8,334.1L355.0,335.6L355.8,338.0L356.0,337.7L356.4,336.1L356.5,335.7L356.8,334.9L357.0,334.0L357.8,326.2L358.0,322.9L358.8,311.7L359.1,307.6L359.6,298.5L359.8,295.9L360.0,293.4L360.8,282.7L361.1,279.0L361.8,269.2L362.1,265.3L362.6,257.1L362.8,255.2L363.1,252.9L363.8,243.4L364.1,239.6L364.8,230.8L365.0,228.2L365.1,230.1L365.6,236.2L365.8,239.0L366.1,243.7L366.8,253.2L367.1,257.4L367.8,265.3L368.2,269.2L368.6,272.1L368.8,274.2L369.1,278.7L369.8,284.1L370.2,286.6L370.8,290.4L371.2,292.4L371.7,292.0L371.8,293.1L372.2,296.0L372.8,297.6L373.2,298.2L373.8,299.0L374.2,299.3L374.7,296.4L374.8,297.1L375.2,299.8L375.8,300.1L376.2,300.3L376.8,301.0L377.2,301.7L377.7,300.4L377.8,301.0L378.2,304.5L378.8,306.9L379.2,309.3L379.8,312.8L380.3,316.3L380.8,318.3L380.8,318.8L381.2,325.1L381.8,330.9L382.3,336.4L382.8,342.7L383.3,348.6L383.8,352.0L383.8,352.1L384.3,355.0L384.8,354.3L385.3,353.8L385.8,350.7L386.3,344.4L386.8,335.8L386.8,335.4L387.3,329.9L387.8,322.4L388.3,314.2L388.8,307.4L389.4,299.1L389.8,291.1L389.9,290.2L390.3,285.3L390.8,278.9L391.4,271.1L391.8,265.4L392.4,257.5L392.8,250.6L392.9,249.2L393.4,245.0L393.8,239.6L394.4,231.9L394.8,226.7L395.4,218.7L395.8,213.9L395.9,212.7L395.9,212.9L396.4,221.7L396.8,228.9L397.4,239.9L397.8,246.1L398.5,256.5L398.8,260.1L398.9,261.5L399.4,270.2L399.8,274.8L400.5,282.3L400.8,285.7L401.5,291.7L401.8,292.6L402.0,293.0L402.5,298.1L402.8,299.8L403.5,302.5L403.8,303.4L404.5,305.0L404.8,303.8L405.0,302.8L405.5,306.2L405.8,306.4L406.5,306.8L406.8,306.9L407.6,307.5L407.8,306.5L408.0,305.6L408.5,309.3L408.8,310.1L409.6,313.1L409.8,314.4L410.6,319.4L410.8,320.1L411.1,321.2L411.6,327.8L411.8,330.4L412.6,339.5L412.8,342.4L413.6,353.8L413.8,355.9L414.1,359.2L414.6,368.9L414.8,372.1L415.6,380.1L415.8,380.5L416.3,379.5L416.6,379.4L416.8,378.6L417.1,375.6L417.6,370.0L417.8,366.7L418.6,350.2L418.8,347.0L419.7,329.5L419.8,326.3L420.1,317.9L420.6,310.3L420.8,307.2L421.7,290.6L421.8,288.2L422.7,271.5L422.8,269.2L423.2,260.8L423.7,254.0L423.8,251.7L424.7,236.1L424.8,234.4L425.7,218.6L425.8,217.2L426.2,208.6L426.7,202.6L426.8,200.9L427.7,185.4L427.8,184.2L428.7,169.2L428.8,170.8L428.8,171.8L429.2,182.7L429.7,195.7L429.8,197.5L430.8,220.8L430.8,221.7L431.8,242.8L431.8,242.9L432.3,249.8L432.8,260.2L432.8,260.8L433.8,274.7L433.8,274.8L434.8,284.9L434.8,285.0L435.3,286.4L435.8,291.3L435.8,291.3L436.8,294.9L436.8,295.0L437.8,296.6L437.9,296.7L438.3,294.1L438.8,297.3L438.8,297.5L439.8,298.7L439.9,298.8L440.8,301.7L440.9,302.1L441.4,302.5L441.8,307.5L441.9,308.1L442.8,317.3L442.9,318.2L443.8,330.9L443.9,332.6L444.4,338.9L444.8,348.4L444.9,350.3L445.8,369.9L445.9,372.4L446.8,391.4L446.9,393.6L447.4,398.5L447.8,400.4L447.9,400.5L448.0,400.5L448.8,400.0L448.9,398.9L449.8,385.0L450.0,381.6L450.4,369.5L450.8,363.7L450.9,361.4L451.8,343.8L452.0,340.3L452.8,323.7L453.0,319.7L453.5,308.3L453.8,303.4L454.0,300.8L454.8,285.1L455.0,281.3L455.8,266.5L456.0,262.4L456.5,251.7L456.8,247.7L457.0,245.0L457.8,231.1L458.0,227.1L458.8,214.0L459.1,209.6L459.5,199.5L459.8,196.3L460.0,193.2L460.8,180.1L461.1,175.7L461.6,166.5L461.8,173.4L462.1,183.2L462.6,198.2L462.8,206.0L463.1,214.8L463.8,236.3L464.1,243.8L464.8,259.7L465.1,265.8L465.6,271.4L465.8,274.9L466.1,279.6L466.8,285.9L467.1,287.8L467.8,290.4L468.1,291.1L468.6,289.0L468.8,290.1L469.1,292.3L469.8,293.4L470.1,294.5L470.8,297.9L471.2,301.1L471.7,304.3L471.8,306.7L472.1,313.7L472.8,326.1L473.2,334.7L473.8,350.7L474.2,362.1L474.7,373.5L474.8,376.2L475.2,384.2L475.8,388.9L475.9,389.2L476.2,391.4L476.8,390.4L477.2,385.0L477.7,374.3L477.8,372.9L478.2,365.8L478.8,353.3L479.2,344.0L479.8,332.3L480.3,322.6L480.8,310.8L480.8,309.9L481.2,302.9L481.8,291.8L482.3,282.6L482.8,272.3L483.3,262.8L483.8,251.8L483.8,251.5L484.3,244.8L484.8,235.1L485.3,226.1L485.8,217.2L486.3,207.9L486.8,197.8L486.8,197.6L487.3,191.2L487.8,182.5L488.3,173.2L488.8,165.1L489.4,155.4L489.5,152.9L489.8,162.0L489.8,163.1L490.3,178.5L490.8,192.5L491.4,208.4L491.8,220.0L492.4,234.1L492.8,241.2L492.9,242.3L493.4,253.6L493.8,260.7L494.4,268.6L494.8,273.0L495.4,278.0L495.8,278.6L495.9,278.6L496.4,282.8L496.8,283.9L497.4,285.0L497.8,285.4L498.4,286.0L498.8,284.5L498.9,284.1L499.4,287.9L499.8,289.4L500.4,293.2L500.8,296.1L501.5,303.5L501.8,306.5L502.0,308.2L502.4,318.6L502.8,325.4L503.5,340.5L503.8,348.3L504.5,366.8L504.8,373.3L505.0,377.3L505.5,387.3L505.8,390.5L506.2,392.0L506.5,394.0L506.8,394.4L507.5,388.3L507.8,383.2L508.0,378.3L508.5,370.8L508.8,365.1L509.5,350.9L509.8,345.9L510.6,331.4L510.8,326.1L511.1,320.4L511.5,313.5L511.8,308.7L512.6,294.9L512.8,290.8L513.6,276.9L513.8,272.6L514.1,266.7L514.6,260.4L514.8,256.6L515.6,243.4L515.8,240.1L516.6,226.8L516.8,223.4L517.1,217.2L517.6,211.5L517.8,208.4L518.6,195.2L518.8,192.5L519.7,178.9L519.8,176.6L519.9,175.1L520.1,180.6L520.6,192.5L520.8,196.6L521.7,216.3L521.8,219.4L522.7,237.7L522.8,239.3L523.2,244.5L523.7,254.9L523.8,257.1L524.7,269.6L524.8,271.0L525.7,280.5L525.8,280.8L526.2,282.2L526.7,287.4L526.8,288.0L527.7,291.8L527.8,292.0L528.8,293.9L528.8,293.7L529.2,291.5L529.7,294.8L529.8,294.9L530.8,295.7L530.8,295.8L531.8,297.8L531.8,297.8L532.3,297.4L532.8,302.1L532.8,302.4L533.8,309.9L533.8,310.1L534.8,321.4L534.8,321.5L535.3,326.3L535.8,336.2L535.8,336.5L536.8,355.1L536.8,355.3L537.8,375.8L537.8,376.5L538.3,383.9L538.8,390.2L538.8,390.3L539.4,391.6L539.8,392.7L539.8,392.6L540.8,384.2L540.9,383.0L541.4,372.5L541.8,365.6L541.8,365.0L542.8,346.6L542.9,345.3L543.8,327.7L543.9,325.9L544.4,315.0L544.8,309.1L544.9,308.1L545.8,291.4L545.9,289.6L546.8,273.9L546.9,271.7L547.4,261.5L547.8,256.5L547.9,255.3L548.8,240.4L548.9,238.3L549.8,224.4L550.0,221.8L550.4,212.2L550.8,208.1L550.9,206.6L551.8,192.9L552.0,190.4L552.8,177.1L553.0,174.1L553.4,167.7L553.5,169.1L553.8,175.9L554.0,179.4L554.8,196.6L555.0,200.4L555.8,215.7L556.0,219.5L556.5,225.5L556.8,231.4L557.0,235.1L557.8,246.0L558.0,248.6L558.8,256.7L559.0,258.9L559.5,260.5L559.8,263.4L560.0,265.7L560.8,269.3L561.0,270.2L561.8,272.1L562.1,272.5L562.6,270.2L562.8,271.8L563.0,273.6L563.8,274.0L564.1,274.2L564.8,275.0L565.1,275.5L565.6,274.3L565.8,276.0L566.1,278.5L566.8,282.1L567.1,284.1L567.8,289.7L568.1,293.0L568.6,296.2L568.8,299.1L569.1,304.3L569.8,314.4L570.1,319.8L570.8,331.1L571.2,337.9L571.6,344.9L571.8,348.0L572.1,354.1L572.8,360.1L573.2,360.9L573.2,360.9L573.8,362.6L574.2,361.2L574.7,355.5L574.8,354.3L575.2,351.0L575.8,342.6L576.2,337.2L576.8,329.3L577.2,323.7L577.7,315.5L577.8,314.7L578.2,311.3L578.8,303.7L579.2,298.4L579.8,291.4L580.3,285.9L580.7,278.2L580.8,277.7L581.2,274.5L581.8,267.9L582.3,262.7L582.8,256.6L583.3,251.2L583.8,243.9L583.8,243.7L584.3,240.7L584.8,234.7L585.3,229.2L585.8,223.6L586.3,217.8L586.5,215.8L586.8,219.4L587.3,226.1L587.8,232.7L588.3,239.2L588.8,244.9L589.4,251.0L589.8,253.8L589.8,254.0L590.3,260.8L590.8,265.2L591.4,269.7L591.8,273.1L592.4,276.9L592.8,277.4L592.9,277.5L593.4,282.0L593.8,283.9L594.4,285.9L594.8,287.0L595.4,288.3L595.8,286.7L595.9,286.2L596.4,289.6L596.8,290.0L597.4,290.3L597.8,290.5L598.4,290.7L598.8,288.6L598.9,287.9L599.4,291.3L599.8,291.7L600.4,292.7L600.8,293.4L601.5,295.3L601.8,294.9L602.0,294.8L602.4,299.2L602.8,301.1L603.5,305.1L603.8,307.4L604.5,312.9L604.8,314.2L605.0,315.0L605.5,321.8L605.8,325.2L606.5,332.8L606.8,336.2L607.5,344.3L607.8,346.1L608.0,347.4L608.5,350.5L608.8,350.6L609.0,350.4L609.5,350.6L609.8,349.7L610.6,343.8L610.8,340.3L611.0,336.4L611.5,332.6L611.8,329.4L612.6,320.5L612.8,317.8L613.6,308.7L613.8,305.4L614.1,301.2L614.6,297.8L614.8,295.2L615.6,286.6L615.8,284.3L616.6,275.7L616.8,273.0L617.1,268.6L617.6,265.7L617.8,263.6L618.6,255.4L618.8,253.6L619.6,245.3L619.8,243.3L620.1,238.7L620.6,236.0L620.8,234.2L621.6,225.8L621.8,224.3L622.5,217.4L622.7,219.4L622.8,220.7L623.2,224.3L623.6,230.5L623.8,232.2L624.7,241.6L624.8,242.7L625.7,251.1L625.8,251.5L626.2,253.1L626.7,258.9L626.8,259.7L627.7,265.5L627.8,266.0L628.7,270.4L628.8,270.3L629.2,269.7L629.7,273.5L629.8,273.8L630.7,275.6L630.8,275.7L631.8,276.7L631.8,276.5L632.2,273.8L632.7,277.1L632.8,277.1L633.8,277.5L633.8,277.5L634.8,278.3L635.3,276.3L635.8,280.0L635.8,280.1L636.8,283.2L637.8,287.8L637.8,288.0L638.3,288.7L638.8,294.2L639.8,302.2L639.8,302.5L640.8,311.6L640.9,312.2L641.3,315.1L641.8,320.6L641.8,320.9L642.8,324.2L642.9,324.1L643.0,324.1L643.8,323.8L643.9,323.5L644.4,319.2L644.8,316.8L644.9,316.5L645.8,307.6L645.9,306.7L646.8,298.2L646.9,297.1L647.4,290.7L647.8,288.8L647.9,288.4L648.8,280.5L648.9,279.5L649.8,272.2L650.0,271.0L650.4,265.0L650.8,263.6L650.9,263.2L651.8,256.0L652.0,254.8L652.8,247.8L653.0,246.3L653.2,244.5L653.5,246.0L653.8,248.4L654.0,249.6L654.8,255.2L655.0,256.4L655.8,261.2L656.0,262.3L656.5,262.6L656.8,265.5L657.0,267.1L657.8,270.6L658.0,271.4L658.8,274.1L659.0,274.8L659.5,273.6L659.8,275.6L660.0,277.2L660.8,278.6L661.0,278.9L661.8,279.7L662.1,279.9L662.5,277.0L662.8,278.7L663.0,280.4L663.8,280.6L664.1,280.6L664.8,280.8L665.1,280.9L665.6,278.0L665.8,279.5L666.1,281.3L666.8,282.0L667.1,282.4L667.8,283.5L668.1,284.2L668.6,282.9L668.8,284.4L669.1,286.8L669.8,289.2L670.1,290.5L670.8,293.4L671.2,295.1L671.6,295.4L671.8,297.0L672.1,300.3L672.8,303.9L673.2,305.6L673.8,307.6L674.2,307.7L674.5,307.4L674.7,307.3L674.8,307.3L675.2,307.3L675.8,305.1L676.2,303.0L676.8,299.3L677.2,296.6L677.7,291.4L677.8,291.2L678.2,290.5L678.8,286.8L679.2,284.3L679.8,280.9L680.2,278.4L680.7,273.5L680.8,273.4L681.2,273.0L681.8,269.7L682.2,267.1L682.8,263.9L683.3,261.1L683.4,260.4L683.8,261.4L683.8,261.5L684.2,263.7L684.8,265.8L685.3,267.5L685.8,269.2L686.3,270.6L686.8,269.4L686.8,269.4L687.3,273.1L687.8,274.3L688.3,275.3L688.8,276.2L689.3,277.1L689.8,274.9L689.8,274.8L690.3,278.3L690.8,278.7L691.3,279.1L691.8,279.4L692.4,279.6L692.8,276.8L692.9,276.5L693.3,279.9L693.8,279.9L694.4,280.0L694.8,280.0L695.4,280.1L695.8,277.5L695.9,277.0L696.4,280.4L696.8,280.6L697.4,280.9L697.8,281.2L698.4,281.9L698.8,280.2L698.9,279.7L699.4,283.2L699.8,283.9L700.4,285.2L700.8,286.0L701.5,287.6L701.8,286.7L701.9,286.4L702.4,290.2L702.8,291.3L703.5,293.3L703.8,294.4L704.5,296.8L704.7,296.3L704.8,295.4L705.0,294.1L705.5,295.8L705.8,295.1L706.5,293.7L706.8,293.0L707.5,291.5L707.8,289.4L708.0,287.9L708.5,289.6L708.8,289.0L709.5,287.6L709.8,287.0L710.5,285.6L710.8,283.8L711.0,282.1L711.5,283.9L711.8,283.4L712.5,282.1L712.8,281.6L713.6,280.3L713.8,278.7L714.1,276.8L714.5,278.7L714.8,278.3L715.4,277.6L715.6,277.8L715.8,278.0L716.6,279.1L716.8,278.3L717.1,277.0L717.6,280.5L717.8,280.8L718.6,281.8L718.8,282.1L719.6,283.0L719.8,282.2L720.1,280.5L720.6,283.9L720.8,284.0L721.6,284.6L721.8,284.7L722.7,285.2L722.8,284.3L723.1,282.1L723.6,285.5L723.8,285.5L724.7,285.7L724.8,285.7L725.7,285.8L725.8,285.1L726.2,282.4L726.7,285.8L726.8,285.8L727.7,285.9L727.8,285.9L728.7,286.0L728.8,285.6L729.2,283.0L729.7,286.3L729.8,286.4L730.7,286.8L730.8,286.9L731.8,287.5L731.8,287.3L732.2,285.0L732.7,288.4L732.8,288.5L733.8,289.6L733.8,289.6L734.8,290.9L734.8,290.8L735.3,288.8L735.8,292.2L735.8,292.3L736.7,293.9L736.8,293.7L736.8,293.7L737.8,291.8L737.8,291.7L738.3,288.2L738.8,290.1L738.8,290.1L739.8,288.5L739.8,288.5L740.8,286.9L740.9,286.9L741.3,283.4L741.8,285.3L741.8,285.4L742.8,283.9L742.9,283.9L743.8,282.5L743.9,282.4L744.4,279.0L744.8,280.9L744.9,281.1L745.8,279.8L745.9,279.7L746.8,278.5L746.9,278.4L747.4,274.7L747.4,274.7L747.8,277.8L747.9,278.4L748.8,279.5L748.9,279.6L749.8,280.7L749.9,280.8L750.4,278.4L750.8,281.0L750.9,281.8L751.8,282.6L751.9,282.7L752.8,283.3L753.0,283.4L753.5,280.5L753.8,282.9L753.9,283.8L754.8,284.1L755.0,284.2L755.8,284.3L756.0,284.3L756.5,281.0L756.8,283.2L757.0,284.4L757.8,284.4L758.0,284.4L758.8,284.5L759.0,284.5L759.5,281.3L759.8,283.3L760.0,284.6L760.8,284.9L761.0,284.9L761.8,285.3L762.1,285.4L762.5,282.6L762.8,284.4L763.0,286.0L763.8,286.7L764.1,286.9L764.8,287.6L765.1,287.9L765.6,285.6L765.8,287.2L766.1,289.0L766.8,289.9L767.1,290.4L767.3,290.8L767.8,289.9L768.1,289.5L768.6,286.0L768.8,286.9L769.1,288.2L769.8,287.3L770.1,286.9L770.8,286.1L771.1,285.7L771.6,282.3L771.8,283.0L772.1,284.5L772.8,283.8L773.1,283.4L773.8,282.7L774.2,282.3L774.7,278.8L774.8,279.5L775.1,281.2L775.8,280.6L776.2,280.2L776.8,279.7L777.0,279.6L777.2,279.7L777.7,277.0L777.8,277.7L778.2,280.4L778.8,280.9L779.2,281.2L779.8,281.7L780.2,282.0L780.7,279.2L780.8,279.7L781.2,282.6L781.8,282.9L782.2,283.2L782.8,283.4L783.3,283.6L783.8,280.6L783.8,280.9L784.2,284.0L784.8,284.1L785.3,284.2L785.8,284.3L786.3,284.3L786.8,281.0L786.8,281.1L787.3,284.4L787.8,284.4L788.3,284.4L788.8,284.4L789.3,284.5L789.8,281.2L789.8,281.1L790.3,284.5L790.8,284.6L791.3,284.6L791.8,284.7L792.4,284.8L792.8,282.0L792.8,281.8L793.3,285.1L793.8,285.3L794.4,285.5L794.8,285.8L795.4,286.1L795.8,283.7L795.9,283.3L796.4,286.7L796.8,287.0L797.4,287.5L797.8,287.8L798.4,288.3L798.8,286.2L798.9,285.7L799.4,289.2L799.4,289.2L799.8,288.6L800.4,287.9L800.8,287.5L801.5,286.8L801.8,284.3L801.9,283.4L802.4,285.7L802.8,285.4L803.5,284.7L803.8,284.3L804.5,283.7L804.8,281.4L805.0,280.3L805.5,282.8L805.8,282.5L806.5,281.9L806.8,281.6L807.5,281.0L807.8,278.9L808.0,277.4L808.0,277.4L808.5,280.9L808.8,281.1L809.5,281.6L809.8,281.8L810.5,282.2L810.8,280.7L811.0,279.4L811.5,282.8L811.8,282.9L812.5,283.3L812.8,283.4L813.6,283.7L813.8,282.2L814.0,280.7L814.5,284.0L814.8,284.1L815.6,284.3L815.8,284.3L816.6,284.4L816.8,283.1L817.1,281.2L817.6,284.5L817.8,284.6L818.6,284.6L818.8,284.6L819.6,284.6L819.8,283.4L820.1,281.3L820.6,284.6L820.8,284.6L821.6,284.7L821.8,284.7L822.7,284.8L822.8,283.8L823.1,281.6L823.6,284.9L823.8,284.9L824.7,285.1L824.8,285.2L825.7,285.5L825.8,284.8L826.2,282.5L826.7,285.8L826.8,285.9L827.7,286.3L827.8,286.4L828.7,286.9L828.8,286.4L829.2,284.1L829.7,287.5L829.8,287.6L830.7,288.2L830.8,288.3L831.0,288.5L831.8,287.6L831.8,287.3L832.2,284.3L832.7,286.8L832.8,286.7L833.8,285.9L833.8,285.9L834.8,285.1L834.8,285.0L835.3,281.7L835.8,284.4L835.8,284.3L836.8,283.6L836.8,283.6L837.8,282.9L837.8,282.9L838.3,279.5L838.8,282.2L838.8,282.2L839.8,281.6L839.8,281.6L840.0,281.5L840.8,281.9L840.8,281.9L841.3,279.1L841.8,282.4L841.8,282.5L842.8,283.0L842.8,283.0L843.8,283.5L843.9,283.5L844.4,280.6L844.8,283.7L844.8,284.0L845.8,284.3L845.9,284.3L846.8,284.6L846.9,284.6L847.4,281.4L847.8,284.3L847.9,284.8L848.8,284.9L848.9,284.9L849.8,285.0L849.9,285.0L850.4,281.6L850.8,284.3L850.9,285.0L851.8,285.0L851.9,285.0L852.8,285.0L853.0,285.0L853.4,281.7L853.8,284.2L853.9,285.1L854.8,285.2L855.0,285.2L855.8,285.4L856.0,285.4L856.5,282.3L856.8,284.6L857.0,285.7L857.8,286.0L858.0,286.0L858.8,286.4L859.0,286.5L859.5,283.6L859.8,285.6L860.0,287.0L860.8,287.4L861.0,287.5L861.8,288.0L862.0,288.2L862.4,286.1L862.5,285.1L862.8,286.6L863.0,287.8L863.8,287.1L864.0,286.9L864.8,286.3L865.1,286.0L865.6,282.7L865.8,283.9L866.0,285.3L866.8,284.7L867.1,284.5L867.8,283.9L868.1,283.7L868.6,280.4L868.8,281.5L869.1,283.0L869.8,282.6L870.1,282.3L870.8,282.0L871.0,281.9L871.1,282.0L871.6,279.0L871.8,280.2L872.1,282.4L872.8,282.8L873.1,282.9L873.8,283.2L874.2,283.4L874.6,280.4L874.8,281.4L875.1,283.8L875.8,284.0L876.2,284.1L876.8,284.3L877.2,284.4L877.7,281.1L877.8,281.9L878.2,284.5L878.8,284.6L879.2,284.6L879.8,284.6L880.2,284.6L880.7,281.3L880.8,281.8L881.2,284.6L881.8,284.6L882.2,284.7L882.8,284.7L883.3,284.7L883.7,281.5L883.8,281.9L884.2,284.9L884.8,285.0L885.3,285.1L885.8,285.3L886.3,285.4L886.8,282.4L886.8,282.6L887.3,285.8L887.8,286.0L888.3,286.3L888.8,286.6L889.3,286.8L889.8,283.9L890.0,285.3L890.3,287.1L890.8,286.7L891.3,286.4L891.8,286.1L892.4,285.8L892.8,282.7L892.8,282.4L893.3,285.3L893.8,285.0L894.4,284.7L894.8,284.5L895.4,284.2L895.8,281.3L895.9,280.8L896.4,283.7L896.8,283.5L897.4,283.2L897.8,283.1L898.0,283.1L898.4,283.1L898.8,280.6L898.9,280.1L899.4,283.4L899.8,283.5L900.4,283.7L900.8,283.8L901.4,284.0L901.8,281.6L901.9,280.9L902.4,284.2L902.8,284.3L903.4,284.4L903.8,284.5L904.5,284.6L904.8,282.3L905.0,281.3L905.4,284.7L905.8,284.7L906.5,284.8L906.8,284.8L907.5,284.8L907.8,282.7L908.0,281.4L908.5,284.8L908.8,284.8L909.5,284.8L909.8,284.8L910.5,284.8L910.8,283.0L911.0,281.5L911.5,284.9L911.8,284.9L912.5,284.9L912.8,284.9L913.6,285.0L913.8,283.4L914.0,281.8L914.5,285.1L914.8,285.2L915.6,285.3L915.8,285.4L916.6,285.5L916.8,284.2L917.1,282.4L917.6,285.8L917.8,285.8L918.6,286.1L918.8,286.1L919.6,286.4L919.8,285.2L920.0,283.9L920.1,283.2L920.6,286.3L920.8,286.2L921.6,286.0L921.8,285.9L922.6,285.6L922.8,284.6L923.1,282.3L923.6,285.3L923.8,285.3L924.6,285.0L924.8,285.0L925.7,284.8L925.8,283.9L926.2,281.4L926.6,284.5L926.8,284.5L927.7,284.1L927.8,284.1L928.0,285.2L928.7,285.4L928.8,284.8L929.2,282.0L929.7,285.4L929.8,285.4L930.7,285.4L930.8,285.4L931.7,285.4L931.8,285.0L932.2,282.0L932.7,285.4L932.8,285.4L933.7,285.4L933.8,285.4L934.8,285.4L934.8,285.2L935.2,282.0L935.7,285.4L935.8,285.4L936.8,285.4L936.8,285.4L937.8,285.4L938.3,282.0L938.8,285.4L938.8,285.4L939.8,285.4L940.8,285.4L940.8,285.4L941.3,282.0L941.8,285.4L942.8,285.4L942.8,285.4L943.8,285.4L943.9,285.4L944.3,282.0L944.8,285.2L944.8,285.4L945.8,285.4L945.9,285.4L946.8,285.4L946.9,285.4L947.4,282.0L947.8,285.0L947.9,285.4L948.8,285.4L948.9,285.4L949.8,285.4L949.9,285.4L950.4,282.0L950.8,284.8L950.9,285.4L951.8,285.4L951.9,285.4L952.8,285.4L953.0,285.4L953.4,282.0L953.8,284.6L953.9,285.4L954.8,285.4L955.0,285.4L955.8,285.4L956.0,285.4L956.5,282.0L956.8,284.4L957.0,285.4L957.8,285.4L958.0,285.4L958.8,285.4L959.0,285.4L959.5,282.0L959.8,284.1L960.0,285.4L960.8,285.4L961.0,285.4L961.8,285.4L962.0,285.4L962.5,282.0L962.8,283.9L963.0,285.4L963.8,285.4L964.0,285.4L964.8,285.4L965.1,285.4L965.5,282.0L965.8,283.7L966.0,285.4L966.8,285.4L967.1,285.4L967.8,285.4L968.1,285.4L968.6,282.0L968.8,283.5L969.1,285.4L969.8,285.4L970.1,285.4L970.2,285.4" stroke="#ff9a9a" stroke-width="2.2" opacity="0.35"/><path d="M58.8,286.6L59.2,286.6L59.8,286.6L60.2,286.6L60.7,278.9L60.8,279.8L61.2,286.6L61.8,286.6L62.2,286.6L62.8,286.6L63.3,286.6L63.8,278.9L63.8,279.4L64.2,286.6L64.8,286.6L65.3,286.6L65.8,286.6L66.3,286.6L66.8,278.9L66.8,278.9L67.3,286.6L67.8,286.6L68.3,286.6L68.8,286.6L69.3,286.6L69.8,279.2L69.8,278.9L70.3,286.6L70.8,286.6L71.3,286.6L71.8,286.6L72.4,286.6L72.8,279.7L72.8,278.9L73.3,286.6L73.8,286.6L74.4,286.6L74.8,286.6L75.4,286.6L75.8,280.2L75.9,278.9L76.4,286.6L76.8,286.6L77.4,286.6L77.8,286.6L78.4,286.6L78.8,280.6L78.9,278.9L79.4,286.6L79.8,286.6L80.4,286.6L80.8,286.6L81.5,286.6L81.8,281.1L81.9,278.9L82.4,286.6L82.8,286.6L83.5,286.6L83.8,286.6L84.5,286.6L84.8,281.6L85.0,278.9L85.5,286.6L85.8,286.6L86.5,286.6L86.8,286.6L87.5,286.6L87.8,282.1L88.0,278.9L88.5,286.6L88.8,286.6L89.5,286.6L89.8,286.6L90.5,286.6L90.8,282.6L91.0,278.9L91.5,286.6L91.8,286.6L92.5,286.6L92.8,286.6L93.6,286.6L93.8,283.1L94.1,278.9L94.5,286.6L94.8,286.6L95.6,286.6L95.8,286.6L96.6,286.6L96.8,283.5L97.1,278.9L97.6,286.6L97.8,286.6L98.6,286.6L98.8,286.6L99.6,286.6L99.8,284.0L100.1,278.9L100.6,286.6L100.8,286.6L101.6,286.6L101.8,286.6L102.7,286.6L102.8,284.5L103.2,278.9L103.6,286.6L103.8,286.6L104.7,286.6L104.8,286.6L105.7,286.6L105.8,285.0L106.2,278.9L106.7,286.6L106.8,286.6L107.7,286.6L107.8,286.6L108.7,286.6L108.8,285.5L109.2,278.9L109.7,286.6L109.8,286.6L110.7,285.9L110.8,285.9L111.0,286.0L111.8,287.2L111.8,286.6L112.2,279.9L112.7,286.7L112.8,286.6L113.8,286.1L113.8,286.1L114.8,285.6L114.8,285.4L115.3,278.2L115.8,285.1L115.8,285.1L116.8,284.8L116.8,284.8L117.0,284.8L117.8,284.9L117.8,284.9L118.3,277.6L118.8,285.1L118.8,285.1L119.8,285.4L119.8,285.4L120.8,285.7L120.8,285.7L121.3,278.3L121.8,285.6L121.8,285.9L122.8,286.1L122.8,286.1L123.8,286.2L123.9,286.2L124.4,278.7L124.8,285.6L124.8,286.4L125.8,286.5L125.9,286.5L126.8,286.5L126.9,286.5L127.4,278.9L127.8,285.3L127.9,286.6L128.8,286.6L128.9,286.6L129.8,286.6L129.9,286.6L130.4,278.9L130.8,284.9L130.9,286.6L131.8,286.7L131.9,286.7L132.8,286.7L133.0,286.7L133.4,279.1L133.8,284.6L133.9,286.8L134.8,286.9L135.0,286.9L135.8,287.0L136.0,287.0L136.5,279.7L136.8,284.5L137.0,287.2L137.8,287.4L138.0,287.4L138.8,287.6L139.0,287.7L139.5,280.4L139.8,284.8L140.0,287.9L140.8,288.3L141.0,288.3L141.0,288.3L141.8,287.8L142.1,287.6L142.5,280.2L142.8,283.9L143.0,287.2L143.8,286.9L144.1,286.8L144.8,286.5L145.1,286.4L145.6,279.0L145.8,282.2L146.1,286.0L146.8,285.7L147.1,285.6L147.8,285.4L148.1,285.2L148.6,277.8L148.8,280.6L149.1,284.9L149.8,284.7L150.1,284.5L150.8,284.5L151.0,284.4L151.2,284.4L151.6,277.3L151.8,279.7L152.1,284.7L152.8,284.9L153.2,285.1L153.8,285.3L154.2,285.5L154.7,278.3L154.8,280.3L155.2,285.8L155.8,286.0L156.2,286.1L156.8,286.3L157.2,286.3L157.7,278.9L157.8,280.5L158.2,286.5L158.8,286.6L159.2,286.6L159.8,286.7L160.2,286.7L160.7,279.0L160.8,280.2L161.2,286.8L161.8,286.8L162.2,286.8L162.8,286.8L163.3,286.8L163.8,279.2L163.8,279.8L164.2,286.9L164.8,286.9L165.3,286.9L165.8,287.0L166.3,287.1L166.8,279.7L166.8,279.9L167.3,287.2L167.8,287.4L168.3,287.5L168.8,287.6L169.3,287.8L169.8,280.9L169.8,280.7L170.3,288.2L170.8,288.3L171.3,288.6L171.8,289.0L172.0,289.0L172.4,288.5L172.8,281.8L172.8,281.2L173.3,287.7L173.8,287.3L174.4,286.9L174.8,286.6L175.4,286.2L175.8,280.0L175.9,279.0L176.4,285.6L176.8,285.3L177.4,284.9L177.8,284.7L178.4,284.3L178.8,278.5L178.9,277.0L179.4,283.7L179.8,283.7L180.0,283.7L180.4,283.7L180.8,283.8L181.4,284.2L181.8,279.2L181.9,277.4L182.4,284.7L182.8,284.9L183.4,285.2L183.8,285.4L184.5,285.7L184.8,281.0L185.0,278.6L185.4,286.1L185.8,286.2L186.5,286.4L186.8,286.5L187.5,286.6L187.8,282.1L188.0,279.1L188.5,286.8L188.8,286.8L189.5,286.9L189.8,286.9L190.5,286.9L190.8,282.8L191.0,279.3L191.5,287.0L191.8,287.0L192.5,287.0L192.8,287.0L193.6,287.1L193.8,283.4L194.1,279.5L194.5,287.1L194.8,287.2L195.6,287.3L195.8,287.4L196.6,287.5L196.8,284.5L197.1,280.4L197.6,287.8L197.8,287.9L198.6,288.2L198.8,288.3L199.6,288.7L199.8,286.3L200.1,281.8L200.6,289.2L200.8,289.3L201.6,290.0L201.8,290.1L202.7,289.0L202.8,286.9L203.1,281.8L203.6,288.2L203.8,288.1L204.7,287.4L204.8,287.3L205.7,286.6L205.8,285.0L206.2,279.4L206.7,285.9L206.8,285.8L207.7,285.2L207.8,285.1L208.7,284.5L208.8,283.3L209.2,277.2L209.7,283.9L209.8,283.8L210.7,283.2L210.8,283.2L211.6,283.0L211.8,283.0L211.8,282.2L212.2,276.2L212.7,283.4L212.8,283.5L213.8,284.2L213.8,284.2L214.8,284.9L214.8,284.6L215.3,278.1L215.8,285.5L215.8,285.5L216.8,286.0L216.8,286.0L217.8,286.4L217.8,286.4L218.3,279.0L218.8,286.6L218.8,286.6L219.8,286.8L219.8,286.8L220.8,286.9L220.8,286.9L221.3,279.2L221.8,286.8L221.8,287.0L222.8,287.0L222.8,287.0L223.8,287.1L223.9,287.1L224.3,279.6L224.8,286.6L224.8,287.2L225.8,287.4L225.9,287.4L226.8,287.8L226.9,287.8L227.4,280.9L227.8,287.2L227.9,288.2L228.8,288.8L228.9,288.8L229.8,289.4L229.9,289.5L230.4,283.0L230.8,288.8L230.9,290.4L231.2,290.8L231.8,289.8L231.9,289.6L232.8,288.8L233.0,288.6L233.4,281.5L233.8,286.0L233.9,287.7L234.8,286.9L235.0,286.8L235.8,286.0L236.0,285.9L236.5,278.7L236.8,282.9L237.0,285.0L237.8,284.4L238.0,284.2L238.8,283.6L239.0,283.4L239.5,276.2L239.8,280.1L240.0,282.6L240.8,282.3L241.0,282.2L241.0,282.2L241.8,282.5L242.1,282.8L242.5,276.5L242.8,280.4L243.0,283.7L243.8,284.4L244.1,284.6L244.8,285.2L245.1,285.4L245.6,278.7L245.8,282.2L246.1,286.0L246.8,286.4L247.1,286.6L247.8,286.9L248.1,287.0L248.6,279.6L248.8,282.8L249.1,287.2L249.8,287.3L250.1,287.4L250.8,287.4L251.1,287.5L251.6,279.8L251.8,282.6L252.1,287.5L252.8,287.6L253.1,287.6L253.8,287.7L254.2,287.7L254.7,280.5L254.8,282.7L255.1,287.9L255.8,288.2L256.2,288.3L256.8,288.6L257.2,288.8L257.7,282.2L257.8,283.9L258.2,289.4L258.8,289.9L259.2,290.2L259.8,290.7L260.2,291.1L260.7,284.9L260.8,286.1L261.2,292.5L261.3,292.5L261.8,291.1L262.2,290.4L262.8,289.5L263.3,288.7L263.7,281.8L263.8,282.4L264.2,287.2L264.8,286.4L265.3,285.7L265.8,284.9L266.3,284.2L266.8,277.2L266.8,277.4L267.3,282.8L267.8,282.1L268.3,281.4L268.8,280.7L269.3,280.1L269.8,273.0L270.3,278.8L270.8,278.2L271.3,277.5L271.8,277.4L272.0,277.0L272.4,277.3L272.8,272.6L272.8,272.3L273.3,279.2L273.8,280.2L274.4,281.3L274.8,282.2L275.4,283.3L275.8,278.6L275.9,277.9L276.4,284.9L276.8,285.6L277.4,286.3L277.8,286.8L278.4,287.5L278.8,282.2L278.9,280.9L279.4,288.3L279.8,288.5L280.4,288.9L280.8,289.0L281.4,289.2L281.8,283.6L281.9,281.7L282.4,289.4L282.8,289.4L283.4,289.5L283.8,289.6L284.5,289.7L284.8,284.7L284.9,282.5L285.4,290.0L285.8,290.1L286.5,290.5L286.8,290.7L287.5,291.3L287.8,287.5L288.0,285.3L288.5,292.3L288.8,292.8L289.5,293.8L289.8,294.3L290.5,295.6L290.8,292.7L291.0,290.6L291.5,296.7L291.8,296.9L292.5,297.4L292.8,297.6L293.0,297.7L293.6,296.2L293.8,294.6L294.0,292.3L294.5,293.8L294.8,293.1L295.6,290.4L295.8,289.5L296.6,286.6L296.8,283.5L297.1,279.6L297.6,283.1L297.8,282.3L298.6,279.6L298.8,278.8L299.6,276.1L299.8,273.5L300.1,269.2L300.6,273.0L300.8,272.3L301.6,269.6L301.8,268.8L302.6,265.0L302.8,263.8L303.1,261.9L303.5,261.3L303.6,262.0L303.8,263.0L304.6,267.9L304.8,268.8L305.7,273.5L305.8,272.7L306.2,270.3L306.6,277.4L306.8,278.0L307.7,281.1L307.8,281.5L308.7,284.3L308.8,283.6L309.2,280.0L309.7,286.9L309.8,287.2L310.7,289.0L310.8,289.2L311.7,290.6L311.8,289.9L312.2,284.4L312.7,291.7L312.8,291.8L313.7,292.4L313.8,292.5L314.8,292.9L314.8,292.4L315.2,285.5L315.7,293.2L315.8,293.2L316.8,293.5L316.8,293.5L317.8,294.0L318.3,287.6L318.8,294.8L318.8,294.8L319.8,296.1L320.8,298.0L320.8,298.1L321.3,293.6L321.8,300.5L322.8,303.6L322.8,303.7L323.8,307.3L323.9,307.5L324.3,304.3L324.8,310.9L324.8,311.3L325.8,313.0L325.9,312.9L326.7,310.6L326.8,310.5L326.9,310.4L327.4,307.8L327.8,307.0L327.9,307.0L328.8,299.8L328.9,299.0L329.8,290.8L329.9,289.8L330.4,280.9L330.8,281.3L330.9,281.4L331.8,274.0L331.9,273.0L332.8,266.1L332.9,264.8L333.4,257.3L333.8,256.8L333.9,256.4L334.8,248.8L334.9,250.2L335.8,258.0L336.0,259.6L336.5,260.0L336.8,265.4L336.9,268.0L337.8,274.0L338.0,275.2L338.8,280.3L339.0,281.5L339.5,279.1L339.8,283.8L340.0,286.5L340.8,289.9L341.0,290.7L341.8,293.3L342.0,293.9L342.5,289.0L342.8,292.9L343.0,296.1L343.8,297.3L344.0,297.6L344.8,298.3L345.1,298.5L345.6,291.4L345.8,295.2L346.0,299.0L346.8,299.4L347.1,299.5L347.8,300.1L348.1,300.4L348.6,295.0L348.8,298.1L349.1,301.9L349.8,303.7L350.1,304.6L350.8,307.1L351.1,308.4L351.6,305.6L351.8,308.5L352.1,313.1L352.8,317.2L353.1,319.3L353.8,323.9L354.2,326.5L354.6,325.5L354.8,328.1L355.1,332.3L355.8,333.3L356.2,332.3L356.4,331.0L356.8,330.3L357.2,328.3L357.7,321.2L357.8,320.3L358.2,318.4L358.8,309.8L359.2,304.5L359.8,296.2L360.2,290.7L360.7,279.8L360.8,279.4L361.2,278.3L361.8,270.8L362.2,265.7L362.8,258.9L363.2,253.4L363.7,244.4L363.8,244.1L364.2,241.3L364.8,234.1L365.0,231.7L365.2,235.0L365.8,242.3L366.3,248.6L366.8,250.6L366.8,251.3L367.2,260.4L367.8,266.2L368.3,270.8L368.8,275.5L369.3,279.7L369.8,278.3L369.8,278.4L370.3,286.3L370.8,289.2L371.3,291.6L371.8,293.5L372.3,295.3L372.8,290.6L372.8,290.4L373.3,297.6L373.8,298.4L374.3,299.1L374.8,299.5L375.4,299.9L375.8,294.0L375.9,293.3L376.3,300.7L376.8,301.2L377.4,302.2L377.8,303.2L378.4,305.2L378.8,302.6L378.9,302.1L379.4,309.6L379.8,312.2L380.4,316.3L380.8,319.4L381.4,325.0L381.8,325.0L381.9,325.0L382.4,334.8L382.8,339.2L383.4,345.1L383.8,347.7L384.5,348.9L384.8,347.8L384.9,347.6L385.4,347.3L385.8,345.1L386.5,338.2L386.8,333.8L387.5,324.0L387.8,316.7L388.0,312.7L388.5,310.6L388.8,305.9L389.5,296.6L389.8,292.6L390.5,283.2L390.8,277.0L391.0,272.5L391.5,271.0L391.8,267.2L392.5,258.5L392.8,255.2L393.6,246.4L393.8,241.1L394.0,236.4L394.5,234.6L394.8,231.1L395.6,221.7L395.8,218.7L395.9,217.4L396.6,228.8L396.8,231.5L397.1,234.0L397.6,244.6L397.8,248.5L398.6,259.5L398.8,262.4L399.6,272.2L399.8,272.5L400.1,272.8L400.6,282.3L400.8,284.3L401.6,290.7L401.8,292.0L402.6,296.8L402.8,295.9L403.1,293.7L403.6,300.9L403.8,301.5L404.6,303.7L404.8,304.0L405.7,305.4L405.8,303.6L406.1,298.8L406.6,306.4L406.8,306.5L407.7,307.5L407.8,307.7L408.7,309.6L408.8,308.8L409.2,306.0L409.7,313.3L409.8,314.0L410.7,319.5L410.8,320.2L411.7,328.0L411.8,328.0L412.2,328.2L412.7,338.4L412.8,339.6L413.7,351.5L413.8,352.4L414.8,365.3L414.8,365.5L415.2,367.8L415.7,372.4L415.8,372.5L416.3,371.1L416.8,370.8L416.8,370.6L417.8,360.3L417.8,360.1L418.3,347.6L418.8,343.0L418.8,342.3L419.8,324.0L419.8,323.8L420.8,305.8L420.8,305.4L421.3,292.3L421.8,288.4L421.8,288.2L422.8,271.2L422.8,270.8L423.8,254.7L423.9,253.9L424.3,241.5L424.8,238.5L424.8,238.4L425.8,223.2L425.9,222.4L426.8,207.9L426.9,206.6L427.4,195.7L427.8,191.6L427.9,191.0L428.7,177.4L428.8,179.8L428.9,181.7L429.8,203.3L429.9,205.9L430.4,212.8L430.8,224.8L430.9,227.2L431.8,244.6L431.9,246.6L432.8,260.8L432.9,262.8L433.4,264.5L433.8,272.6L433.9,274.8L434.8,283.1L434.9,284.2L435.8,289.5L436.0,290.4L436.4,286.9L436.8,292.0L436.9,294.1L437.8,296.2L438.0,296.5L438.8,297.7L439.0,298.0L439.5,292.5L439.8,297.2L440.0,299.7L440.8,302.5L441.0,303.4L441.8,308.3L442.0,310.1L442.5,309.7L442.8,315.4L443.0,319.5L443.8,329.8L444.0,333.1L444.8,345.9L445.1,350.6L445.5,355.1L445.8,362.7L446.0,369.5L446.8,383.5L447.1,386.9L447.8,390.7L448.0,390.5L448.1,390.8L448.6,390.1L448.8,389.4L449.1,388.1L449.8,377.1L450.1,371.8L450.8,358.3L451.1,352.2L451.6,338.5L451.8,336.6L452.1,334.0L452.8,320.9L453.1,315.1L453.8,302.9L454.1,296.7L454.6,283.7L454.8,282.3L455.1,279.8L455.8,268.3L456.1,262.5L456.8,251.8L457.2,245.6L457.7,233.3L457.8,232.3L458.1,230.1L458.8,220.0L459.2,214.1L459.8,204.3L460.2,197.6L460.7,187.6L460.8,186.5L461.2,181.7L461.6,174.9L461.8,181.1L462.2,193.8L462.8,211.5L463.2,224.0L463.7,232.0L463.8,234.7L464.2,248.0L464.8,259.8L465.2,267.2L465.8,275.0L466.3,280.1L466.8,279.2L466.8,280.0L467.2,287.1L467.8,289.7L468.3,291.2L468.8,292.4L469.3,293.2L469.8,288.6L469.8,288.8L470.3,296.0L470.8,299.0L471.3,303.2L471.8,308.9L472.3,316.8L472.8,320.7L472.8,320.8L473.3,335.7L473.8,347.5L474.3,360.4L474.8,370.5L475.4,378.1L475.8,379.8L475.8,380.0L475.9,380.2L476.3,382.7L476.8,381.6L477.4,375.1L477.8,367.6L478.4,356.1L478.8,344.1L478.9,342.1L479.4,337.3L479.8,328.8L480.4,317.6L480.8,309.9L481.4,298.5L481.8,287.9L481.9,285.1L482.4,280.9L482.8,273.7L483.4,262.8L483.8,256.3L484.4,245.2L484.8,236.0L484.9,232.6L485.4,229.1L485.8,222.9L486.4,212.5L486.8,206.9L487.5,196.2L487.8,188.2L488.0,184.5L488.4,179.9L488.8,174.1L489.5,162.7L489.5,162.4L489.8,170.9L490.5,190.7L490.8,196.7L491.0,200.2L491.5,216.2L491.8,223.6L492.5,238.8L492.8,244.3L493.5,256.8L493.8,258.0L494.0,258.8L494.5,269.2L494.8,272.1L495.5,277.8L495.8,279.4L496.6,283.0L496.8,280.9L497.1,278.3L497.5,285.7L497.8,286.2L498.6,287.5L498.8,287.9L499.6,290.2L499.8,288.9L500.1,287.6L500.6,295.8L500.8,297.7L501.6,306.1L501.8,308.7L502.6,321.7L502.8,323.1L503.1,326.1L503.6,340.9L503.8,345.4L504.6,364.4L504.8,368.0L505.7,380.7L505.8,381.6L506.1,382.4L506.2,382.7L506.6,385.0L506.8,385.1L507.7,378.3L507.8,376.2L508.7,361.0L508.8,358.0L509.2,347.8L509.7,343.8L509.8,341.4L510.7,325.9L510.8,324.0L511.7,308.5L511.8,306.4L512.2,295.9L512.7,292.5L512.8,290.7L513.7,275.9L513.8,274.7L514.8,259.9L514.8,258.7L515.2,248.0L515.7,245.2L515.8,244.0L516.8,230.0L516.8,229.3L517.8,215.1L517.8,214.6L518.3,204.0L518.8,200.3L518.8,199.6L519.8,184.7L519.8,184.3L519.9,182.8L520.8,202.6L520.8,202.8L521.3,209.8L521.8,223.3L521.8,223.7L522.8,241.9L522.8,242.1L523.8,257.6L523.8,258.1L524.3,259.9L524.8,270.1L524.8,270.3L525.8,279.8L525.8,280.1L526.8,286.4L526.9,286.8L527.4,283.8L527.8,290.4L527.8,291.0L528.8,293.6L528.9,293.7L529.8,295.2L529.9,295.3L530.4,289.3L530.8,295.6L530.9,296.6L531.8,298.8L531.9,299.1L532.8,303.3L532.9,304.0L533.4,302.6L533.8,309.6L533.9,311.5L534.8,321.0L534.9,322.6L535.8,334.7L536.0,337.2L536.4,340.4L536.8,350.1L536.9,353.7L537.8,369.6L538.0,372.2L538.8,381.6L539.0,382.4L539.4,382.2L539.5,382.3L539.8,383.1L540.0,383.1L540.8,376.1L541.0,373.3L541.8,359.6L542.0,355.7L542.5,342.6L542.8,340.1L543.0,338.6L543.8,324.6L544.0,320.9L544.8,307.7L545.0,303.5L545.5,291.0L545.8,289.1L546.0,287.6L546.8,275.1L547.0,271.2L547.8,259.5L548.1,255.2L548.6,243.3L548.8,241.9L549.0,240.6L549.8,229.5L550.1,225.4L550.8,215.0L551.1,210.6L551.6,199.3L551.8,198.2L552.1,196.0L552.8,185.1L553.1,180.4L553.4,176.0L553.8,183.7L554.1,190.3L554.6,196.6L554.8,200.7L555.1,208.5L555.8,220.2L556.1,225.5L556.8,235.0L557.2,240.0L557.6,241.2L557.8,244.3L558.1,251.2L558.8,257.4L559.2,260.4L559.8,264.7L560.2,266.9L560.7,263.9L560.8,265.6L561.2,271.1L561.8,273.0L562.2,273.9L562.8,275.0L563.2,275.6L563.7,269.1L563.8,270.4L564.2,276.6L564.8,277.4L565.2,278.3L565.8,279.9L566.3,281.7L566.7,279.2L566.8,280.1L567.2,287.2L567.8,291.5L568.3,295.7L568.8,301.3L569.3,307.2L569.8,308.9L569.8,309.6L570.3,320.7L570.8,329.0L571.3,337.0L571.8,344.6L572.3,350.6L572.8,352.7L573.2,354.0L573.3,354.5L573.8,355.8L574.3,354.0L574.8,350.0L575.4,343.8L575.8,333.9L575.8,333.2L576.3,331.9L576.8,326.1L577.4,319.5L577.8,314.1L578.4,307.4L578.8,298.4L578.9,297.2L579.4,296.3L579.8,291.2L580.4,284.8L580.8,280.2L581.4,273.7L581.8,265.8L581.9,264.0L582.4,263.5L582.8,259.2L583.4,253.0L583.8,249.1L584.4,242.7L584.8,235.9L584.9,233.8L585.4,232.1L585.8,227.9L586.4,220.9L586.5,220.2L586.8,224.0L587.5,232.2L587.8,234.1L588.0,234.6L588.4,243.8L588.8,247.6L589.5,254.2L589.8,257.3L590.5,263.4L590.8,262.9L591.0,262.5L591.5,270.8L591.8,273.1L592.5,277.3L592.8,278.9L593.5,282.2L593.8,280.3L594.0,278.7L594.5,285.7L594.8,286.6L595.5,288.3L595.8,288.8L596.6,290.0L596.8,286.7L597.0,283.3L597.5,290.9L597.8,291.1L598.6,291.6L598.8,291.8L599.6,292.5L599.8,289.9L600.1,286.8L600.6,293.9L600.8,294.4L601.6,296.5L601.8,297.3L602.6,300.6L602.8,299.7L603.1,298.2L603.6,306.0L603.8,307.3L604.6,313.2L604.8,314.6L605.6,321.9L605.8,321.8L606.1,321.8L606.6,331.3L606.8,333.2L607.6,340.9L607.8,342.1L608.7,344.8L608.8,344.5L609.0,344.3L609.2,344.1L609.6,344.5L609.8,344.1L610.7,338.0L610.8,336.8L611.7,327.2L611.8,325.3L612.2,317.3L612.7,316.7L612.8,315.4L613.7,305.9L613.8,304.9L614.7,295.3L614.8,294.1L615.2,285.8L615.7,285.6L615.8,284.7L616.7,275.6L616.8,275.0L617.8,265.9L617.8,265.3L618.2,256.7L618.7,257.0L618.8,256.4L619.8,247.8L619.8,247.5L620.8,238.4L621.3,230.8L621.8,228.8L621.8,228.5L622.5,221.7L622.8,225.0L623.8,235.8L623.8,236.1L624.3,236.9L624.8,245.7L625.8,254.0L625.8,254.2L626.8,261.1L626.9,261.4L627.3,259.4L627.8,266.5L627.8,267.0L628.8,271.3L628.9,271.5L629.8,274.5L629.9,274.7L630.4,269.7L630.8,275.9L630.9,276.8L631.8,278.1L631.9,278.2L632.8,278.9L632.9,279.0L633.4,272.0L633.8,278.2L633.9,279.5L634.8,280.3L634.9,280.5L635.8,282.0L636.0,282.3L636.4,278.2L636.8,283.5L636.9,285.2L637.8,289.1L638.0,289.8L638.8,294.8L639.0,296.0L639.5,294.7L639.8,300.6L640.0,303.2L640.8,310.4L641.0,312.0L641.8,318.0L642.0,319.1L642.5,319.1L642.8,320.1L643.0,320.0L643.0,320.0L643.8,320.2L644.0,319.5L644.8,314.6L645.0,312.8L645.5,303.8L645.8,304.0L646.0,304.3L646.8,297.5L647.0,295.5L647.8,289.2L648.1,287.0L648.5,278.5L648.8,278.9L649.0,279.4L649.8,273.6L650.1,271.5L650.8,266.1L651.1,264.0L651.6,256.2L651.8,256.3L652.1,256.0L652.8,250.0L653.1,247.5L653.2,246.6L653.8,250.7L654.1,253.0L654.6,252.7L654.8,255.0L655.1,259.4L655.8,263.1L656.1,264.6L656.8,267.7L657.2,269.2L657.6,265.8L657.8,268.0L658.1,272.8L658.8,275.0L659.2,276.0L659.8,277.5L660.2,278.4L660.7,272.9L660.8,274.6L661.2,280.0L661.8,280.8L662.2,281.1L662.8,281.6L663.2,281.8L663.7,274.6L663.8,276.0L664.2,282.2L664.8,282.4L665.2,282.6L665.8,282.8L666.2,283.1L666.7,277.0L666.8,277.9L667.2,284.1L667.8,284.9L668.2,285.8L668.8,287.1L669.3,288.4L669.8,284.5L669.8,285.0L670.2,291.6L670.8,293.7L671.3,295.8L671.8,298.2L672.3,300.7L672.8,298.6L672.8,298.7L673.3,304.5L673.8,305.3L674.3,305.0L674.5,304.6L674.8,304.9L675.3,304.6L675.8,300.3L675.8,300.1L676.3,301.2L676.8,298.5L677.3,295.3L677.8,292.6L678.4,289.4L678.8,282.6L678.9,281.8L679.3,284.1L679.8,281.6L680.4,278.7L680.8,276.5L681.4,273.5L681.8,267.7L681.9,266.7L682.4,267.5L682.8,264.9L683.4,261.3L683.8,263.0L684.4,265.7L684.8,264.3L684.9,263.5L685.4,269.7L685.8,270.8L686.4,272.4L686.8,273.3L687.5,274.8L687.8,271.3L687.9,269.8L688.4,276.7L688.8,277.4L689.5,278.4L689.8,278.8L690.5,279.6L690.8,275.5L691.0,273.1L691.5,280.5L691.8,280.7L692.5,281.1L692.8,281.2L693.5,281.4L693.8,277.1L694.0,273.9L694.5,281.6L694.8,281.7L695.5,281.8L695.8,281.9L696.5,282.1L696.8,278.5L697.0,275.3L697.5,282.6L697.8,282.8L698.5,283.4L698.8,283.7L699.6,284.7L699.8,282.3L700.1,279.5L700.5,286.4L700.8,286.9L701.6,288.5L701.8,289.0L702.6,291.1L702.8,289.4L703.1,286.8L703.6,293.7L703.8,294.3L704.6,297.2L704.7,297.7L704.8,297.8L705.6,295.3L705.8,293.0L706.1,288.4L706.6,293.4L706.8,293.1L707.6,291.5L707.8,291.2L708.7,289.6L708.8,287.7L709.1,282.7L709.6,287.9L709.8,287.6L710.7,286.1L710.8,285.9L711.7,284.4L711.8,283.0L712.2,277.5L712.7,282.9L712.8,282.7L713.7,281.3L713.8,281.1L714.7,279.7L714.8,278.7L715.2,272.4L715.4,274.7L715.7,279.4L715.8,279.4L716.7,280.5L716.8,280.6L717.8,281.8L717.8,281.3L718.2,275.9L718.7,283.0L718.8,283.0L719.8,284.0L719.8,284.1L720.8,284.9L720.8,284.8L721.3,278.3L721.8,285.6L721.8,285.7L722.8,286.2L722.8,286.2L723.8,286.5L723.8,286.6L724.3,279.1L724.8,286.8L724.8,286.8L725.8,286.9L725.8,286.9L726.8,287.0L726.9,287.0L727.3,279.4L727.8,286.8L727.8,287.1L728.8,287.2L728.9,287.2L729.8,287.5L729.9,287.5L730.4,280.6L730.8,287.2L730.9,287.9L731.8,288.5L731.9,288.5L732.8,289.3L732.9,289.4L733.4,283.2L733.8,289.1L733.9,290.3L734.8,291.3L734.9,291.5L735.8,292.6L735.9,292.8L736.4,286.8L736.7,291.1L736.8,292.4L736.9,293.7L737.8,292.0L737.9,291.8L738.8,290.5L739.0,290.2L739.5,283.3L739.8,287.2L739.9,288.8L740.8,287.6L741.0,287.3L741.8,286.2L742.0,285.9L742.5,278.9L742.8,282.6L743.0,284.6L743.8,283.6L744.0,283.3L744.8,282.3L745.0,282.0L745.5,275.0L745.8,278.4L746.0,280.9L746.8,279.9L747.0,279.8L747.4,279.8L747.8,279.8L748.1,279.9L748.5,273.9L748.8,277.6L749.0,281.0L749.8,281.8L750.1,282.1L750.8,282.8L751.1,283.1L751.6,276.6L751.8,279.9L752.1,283.8L752.8,284.3L753.1,284.5L753.8,284.9L754.1,285.0L754.6,277.8L754.8,280.8L755.1,285.3L755.8,285.5L756.1,285.6L756.8,285.6L757.1,285.7L757.6,278.0L757.8,280.6L758.1,285.7L758.8,285.8L759.1,285.8L759.8,285.9L760.2,285.9L760.7,278.7L760.8,280.8L761.1,286.2L761.8,286.4L762.2,286.6L762.8,286.9L763.2,287.2L763.7,280.7L763.8,282.2L764.2,287.9L764.8,288.4L765.2,288.8L765.8,289.4L766.2,289.8L766.7,283.8L766.8,284.9L767.2,291.4L767.3,291.6L767.8,290.4L768.2,289.8L768.8,289.2L769.3,288.6L769.8,281.6L769.8,282.1L770.2,287.5L770.8,286.9L771.3,286.4L771.8,285.8L772.3,285.3L772.8,278.2L772.8,278.3L773.3,284.3L773.8,283.8L774.3,283.3L774.8,282.8L775.3,282.3L775.8,275.3L775.8,275.2L776.3,281.4L776.8,281.2L777.0,281.2L777.3,281.2L777.8,281.4L778.4,281.8L778.8,275.8L778.8,275.3L779.3,282.5L779.8,282.9L780.4,283.2L780.8,283.5L781.4,283.9L781.8,278.0L781.9,277.0L782.4,284.4L782.8,284.6L783.4,284.8L783.8,285.0L784.4,285.2L784.8,279.3L784.9,277.8L785.4,285.4L785.8,285.5L786.4,285.6L786.8,285.6L787.5,285.6L787.8,280.1L787.9,278.0L788.4,285.7L788.8,285.7L789.5,285.7L789.8,285.8L790.5,285.8L790.8,280.8L791.0,278.3L791.5,285.9L791.8,286.0L792.5,286.1L792.8,286.2L793.5,286.3L793.8,282.1L794.0,279.3L794.5,286.7L794.8,286.8L795.5,287.2L795.8,287.3L796.5,287.7L796.8,284.1L797.0,281.1L797.5,288.4L797.8,288.6L798.5,289.1L798.8,289.3L799.4,290.1L799.6,289.7L799.8,286.0L800.0,282.3L800.5,288.4L800.8,288.2L801.6,287.4L801.8,287.2L802.6,286.4L802.8,283.5L803.1,279.3L803.6,285.5L803.8,285.3L804.6,284.6L804.8,284.5L805.6,283.8L805.8,281.2L806.1,276.6L806.6,283.0L806.8,282.8L807.6,282.2L807.8,282.2L808.0,282.3L808.7,282.3L808.8,280.4L809.1,275.6L809.6,282.9L809.8,283.0L810.7,283.5L810.8,283.6L811.7,284.0L811.8,282.4L812.2,277.1L812.7,284.5L812.8,284.5L813.7,284.9L813.8,284.9L814.7,285.2L814.8,284.0L815.2,277.9L815.7,285.5L815.8,285.5L816.7,285.6L816.8,285.7L817.8,285.8L817.8,285.0L818.2,278.1L818.7,285.8L818.8,285.8L819.8,285.9L819.8,285.9L820.8,285.9L820.8,285.6L821.3,278.3L821.8,286.0L821.8,286.0L822.8,286.0L822.8,286.0L823.8,286.2L823.8,286.2L824.3,278.8L824.8,286.4L824.8,286.4L825.8,286.6L825.8,286.6L826.8,287.0L826.8,287.0L827.3,280.0L827.8,287.2L827.8,287.4L828.8,287.9L828.8,287.9L829.8,288.4L829.9,288.4L830.4,281.7L830.8,288.6L830.8,289.3L831.0,289.4L831.8,288.4L831.9,288.3L832.8,287.6L832.9,287.5L833.4,280.3L833.8,285.8L833.9,286.8L834.8,286.1L834.9,286.0L835.8,285.4L835.9,285.3L836.4,278.0L836.8,283.2L836.9,284.6L837.8,284.0L837.9,284.0L838.8,283.4L839.0,283.3L839.4,276.0L839.8,281.0L839.9,283.0L840.0,283.0L840.8,283.1L841.0,283.2L841.8,283.7L842.0,283.8L842.5,276.9L842.8,281.8L843.0,284.3L843.8,284.6L844.0,284.7L844.8,285.1L845.0,285.1L845.5,278.0L845.8,282.5L846.0,285.5L846.8,285.7L847.0,285.8L847.8,285.9L848.0,286.0L848.5,278.4L848.8,282.6L849.0,286.1L849.8,286.2L850.0,286.2L850.8,286.2L851.1,286.2L851.6,278.5L851.8,282.2L852.0,286.3L852.8,286.3L853.1,286.3L853.8,286.3L854.1,286.4L854.6,278.8L854.8,282.0L855.1,286.5L855.8,286.6L856.1,286.6L856.8,286.8L857.1,286.9L857.6,279.7L857.8,282.4L858.1,287.1L858.8,287.4L859.1,287.5L859.8,287.8L860.2,288.0L860.6,281.1L860.8,283.3L861.1,288.5L861.8,288.8L862.2,289.2L862.4,289.4L862.8,288.8L863.2,288.4L863.7,281.2L863.8,282.6L864.2,287.6L864.8,287.1L865.2,286.8L865.8,286.4L866.2,286.1L866.7,278.9L866.8,279.9L867.2,285.4L867.8,285.0L868.2,284.7L868.8,284.4L869.3,284.1L869.7,276.8L869.8,277.5L870.2,283.5L870.8,283.3L871.0,283.4L871.3,283.4L871.8,283.5L872.3,283.7L872.8,276.8L872.8,277.1L873.3,284.2L873.8,284.4L874.3,284.6L874.8,284.8L875.3,285.0L875.8,277.8L876.3,285.3L876.8,285.5L877.3,285.6L877.8,285.6L878.4,285.7L878.8,278.6L878.8,278.1L879.3,285.8L879.8,285.8L880.4,285.9L880.8,285.9L881.4,285.9L881.8,279.2L881.9,278.2L882.4,285.9L882.8,286.0L883.4,286.0L883.8,286.0L884.4,286.1L884.8,280.1L884.9,278.8L885.4,286.3L885.8,286.4L886.4,286.6L886.8,286.7L887.4,286.9L887.8,281.7L887.9,279.9L888.4,287.3L888.8,287.5L889.4,287.8L889.8,288.2L890.0,288.4L890.5,287.8L890.8,282.8L891.0,280.5L891.4,287.3L891.8,287.1L892.5,286.7L892.8,286.6L893.5,286.2L893.8,281.6L894.0,278.8L894.5,285.7L894.8,285.6L895.5,285.3L895.8,285.1L896.5,284.8L896.8,280.7L897.0,277.4L897.5,284.4L897.8,284.4L898.0,284.4L898.5,284.4L898.8,284.5L899.6,284.7L899.8,281.1L900.0,277.4L900.5,285.0L900.8,285.0L901.6,285.2L901.8,285.3L902.6,285.4L902.8,282.2L903.1,278.0L903.6,285.6L903.8,285.7L904.6,285.8L904.8,285.8L905.6,285.9L905.8,283.0L906.1,278.3L906.6,286.0L906.8,286.0L907.6,286.0L907.8,286.0L908.6,286.1L908.8,283.6L909.1,278.4L909.6,286.1L909.8,286.1L910.6,286.1L910.8,286.1L911.7,286.1L911.8,284.2L912.2,278.5L912.6,286.2L912.8,286.2L913.7,286.2L913.8,286.2L914.7,286.3L914.8,285.0L915.2,278.9L915.7,286.5L915.8,286.5L916.7,286.7L916.8,286.7L917.7,286.9L917.8,286.0L918.2,279.6L918.7,287.1L918.8,287.2L919.7,287.5L919.8,287.5L920.0,287.7L920.8,287.2L920.8,286.8L921.2,279.8L921.7,287.0L921.8,286.9L922.8,286.7L922.8,286.7L923.8,286.4L924.3,278.9L924.8,286.1L924.8,286.1L925.8,285.9L926.8,285.7L926.8,285.7L927.3,278.1L927.8,285.1L928.0,286.1L928.8,286.6L928.8,286.6L929.8,286.6L929.9,286.6L930.3,278.9L930.8,286.1L930.8,286.6L931.8,286.6L931.9,286.6L932.8,286.6L932.9,286.6L933.4,278.9L933.8,285.6L933.9,286.6L934.8,286.6L934.9,286.6L935.8,286.6L935.9,286.6L936.4,278.9L936.8,285.2L936.9,286.6L937.8,286.6L937.9,286.6L938.8,286.6L939.0,286.6L939.4,278.9L939.8,284.7L939.9,286.6L940.8,286.6L941.0,286.6L941.8,286.6L942.0,286.6L942.5,278.9L942.8,284.2L943.0,286.6L943.8,286.6L944.0,286.6L944.8,286.6L945.0,286.6L945.5,278.9L945.8,283.7L946.0,286.6L946.8,286.6L947.0,286.6L947.8,286.6L948.0,286.6L948.5,278.9L948.8,283.2L949.0,286.6L949.8,286.6L950.0,286.6L950.8,286.6L951.1,286.6L951.5,278.9L951.8,282.7L952.0,286.6L952.8,286.6L953.1,286.6L953.8,286.6L954.1,286.6L954.6,278.9L954.8,282.3L955.1,286.6L955.8,286.6L956.1,286.6L956.8,286.6L957.1,286.6L957.6,278.9L957.8,281.8L958.1,286.6L958.8,286.6L959.1,286.6L959.8,286.6L960.2,286.6L960.6,278.9L960.8,281.3L961.1,286.6L961.8,286.6L962.2,286.6L962.8,286.6L963.2,286.6L963.7,278.9L963.8,280.8L964.2,286.6L964.8,286.6L965.2,286.6L965.8,286.6L966.2,286.6L966.7,278.9L966.8,280.3L967.2,286.6L967.8,286.6L968.2,286.6L968.8,286.6L969.2,286.6L969.7,278.9L969.8,279.8L970.2,286.3" stroke="#2aa82a" stroke-width="1.1"/><path d="M58.8,285.4L59.1,285.4L59.6,282.0L59.8,283.5L60.1,285.4L60.8,285.4L61.1,285.4L61.8,285.4L62.1,285.4L62.6,282.0L62.8,283.3L63.1,285.4L63.8,285.4L64.1,285.4L64.8,285.4L65.2,285.4L65.6,282.0L65.8,283.1L66.1,285.4L66.8,285.4L67.2,285.4L67.8,285.4L68.2,285.4L68.7,282.0L68.8,282.9L69.2,285.4L69.8,285.4L70.2,285.4L70.8,285.4L71.2,285.4L71.7,282.0L71.8,282.7L72.2,285.4L72.8,285.4L73.2,285.4L73.8,285.4L74.2,285.4L74.7,282.0L74.8,282.5L75.2,285.4L75.8,285.4L76.2,285.4L76.8,285.4L77.3,285.4L77.8,282.0L77.8,282.2L78.2,285.4L78.8,285.4L79.3,285.4L79.8,285.4L80.3,285.4L80.8,282.0L80.8,282.0L81.3,285.4L81.8,285.4L82.3,285.4L82.8,285.4L83.3,285.4L83.8,282.2L83.8,282.0L84.3,285.4L84.8,285.4L85.3,285.4L85.8,285.4L86.4,285.4L86.8,282.4L86.8,282.0L87.3,285.4L87.8,285.4L88.4,285.4L88.8,285.4L89.4,285.4L89.8,282.6L89.9,282.0L90.4,285.4L90.8,285.4L91.4,285.4L91.8,285.4L92.4,285.4L92.8,282.8L92.9,282.0L93.4,285.4L93.8,285.4L94.4,285.4L94.8,285.4L95.5,285.4L95.8,283.0L95.9,282.0L96.4,285.4L96.8,285.4L97.5,285.4L97.8,285.4L98.5,285.4L98.8,283.2L99.0,282.0L99.5,285.4L99.8,285.4L100.5,285.4L100.8,285.4L101.5,285.4L101.8,283.4L102.0,282.0L102.5,285.4L102.8,285.4L103.5,285.4L103.8,285.4L104.5,285.4L104.8,283.6L105.0,282.0L105.5,285.4L105.8,285.4L106.5,285.4L106.8,285.4L107.6,285.4L107.8,283.9L108.1,282.0L108.5,285.4L108.8,285.4L109.6,285.4L109.8,285.4L110.6,285.1L110.8,284.0L111.0,282.8L111.1,283.8L111.6,286.4L111.8,286.3L112.6,285.8L112.8,285.6L113.6,285.1L113.8,284.0L114.1,281.8L114.6,284.6L114.8,284.5L115.6,284.0L115.8,283.9L116.7,283.5L116.8,282.6L117.0,281.2L117.2,280.1L117.6,283.6L117.8,283.6L118.7,283.9L118.8,283.9L119.7,284.2L119.8,283.6L120.2,281.1L120.7,284.5L120.8,284.5L121.7,284.7L121.8,284.7L122.7,284.9L122.8,284.5L123.2,281.7L123.7,285.1L123.8,285.1L124.7,285.2L124.8,285.2L125.8,285.3L125.8,285.0L126.2,282.0L126.7,285.3L126.8,285.4L127.8,285.4L127.8,285.4L128.8,285.4L128.8,285.3L129.3,282.0L129.8,285.4L129.8,285.4L130.8,285.4L130.8,285.4L131.8,285.5L131.8,285.5L132.3,282.1L132.8,285.5L132.8,285.5L133.8,285.6L133.8,285.6L134.8,285.7L134.8,285.7L135.3,282.5L135.8,285.7L135.8,285.9L136.8,286.1L136.8,286.1L137.8,286.3L137.9,286.3L138.4,283.2L138.8,286.3L138.8,286.6L139.8,286.9L139.9,286.9L140.8,287.3L140.9,287.3L141.0,286.7L141.4,283.9L141.8,286.3L141.9,286.8L142.8,286.4L142.9,286.3L143.8,285.9L143.9,285.8L144.4,282.5L144.8,284.7L144.9,285.4L145.8,285.0L145.9,285.0L146.8,284.6L147.0,284.5L147.4,281.2L147.8,283.3L147.9,284.1L148.8,283.8L149.0,283.7L149.8,283.4L150.0,283.4L150.5,280.0L150.8,281.9L151.0,283.1L151.0,283.1L151.8,283.3L152.0,283.4L152.8,283.8L153.0,283.9L153.5,280.9L153.8,282.9L154.0,284.3L154.8,284.6L155.0,284.7L155.8,284.9L156.1,285.0L156.5,281.8L156.8,283.6L157.0,285.2L157.8,285.3L158.1,285.4L158.8,285.5L159.1,285.5L159.6,282.2L159.8,283.7L160.1,285.6L160.8,285.6L161.1,285.6L161.8,285.6L162.1,285.6L162.6,282.3L162.8,283.6L163.1,285.6L163.8,285.6L164.1,285.7L164.8,285.7L165.2,285.8L165.6,282.5L165.8,283.7L166.1,285.9L166.8,286.0L167.2,286.1L167.8,286.3L168.2,286.4L168.7,283.4L168.8,284.3L169.2,286.8L169.8,287.0L170.2,287.2L170.8,287.4L171.2,287.6L171.7,284.7L171.8,285.4L172.0,286.8L172.2,287.9L172.8,287.3L173.2,286.9L173.8,286.5L174.2,286.1L174.7,282.7L174.8,283.1L175.2,285.4L175.8,284.9L176.2,284.6L176.8,284.2L177.3,283.9L177.8,280.5L177.8,280.8L178.2,283.3L178.8,282.9L179.3,282.6L179.8,282.4L180.0,282.3L180.3,282.4L180.8,279.6L180.8,279.6L181.3,282.9L181.8,283.3L182.3,283.5L182.8,283.8L183.3,284.1L183.8,281.3L183.8,281.2L184.3,284.6L184.8,284.8L185.3,285.0L185.8,285.1L186.4,285.3L186.8,282.4L186.8,282.1L187.3,285.5L187.8,285.6L188.4,285.6L188.8,285.7L189.4,285.7L189.8,282.9L189.9,282.4L190.4,285.8L190.8,285.8L191.4,285.8L191.8,285.8L192.4,285.8L192.8,283.2L192.9,282.5L193.4,285.9L193.8,285.9L194.4,286.0L194.8,286.0L195.4,286.2L195.8,283.9L195.9,283.1L196.4,286.4L196.8,286.5L197.4,286.8L197.8,286.9L198.5,287.2L198.8,285.3L199.0,284.4L199.4,287.7L199.8,287.9L200.5,288.3L200.8,288.5L201.5,289.0L201.8,287.3L202.0,285.8L202.5,288.5L202.8,288.2L203.5,287.6L203.8,287.3L204.5,286.7L204.8,284.8L205.0,283.3L205.5,285.9L205.8,285.6L206.5,285.0L206.8,284.8L207.6,284.2L207.8,282.6L208.1,280.9L208.5,283.5L208.8,283.3L209.6,282.8L209.8,282.6L210.6,282.0L210.8,280.6L211.1,278.7L211.6,281.5L211.6,281.5L211.8,281.6L212.6,282.2L212.8,282.3L213.6,283.0L213.8,282.1L214.1,280.3L214.6,283.7L214.8,283.9L215.6,284.4L215.8,284.5L216.7,284.9L216.8,284.0L217.1,281.9L217.6,285.3L217.8,285.3L218.7,285.5L218.8,285.6L219.7,285.7L219.8,284.9L220.2,282.4L220.7,285.8L220.8,285.8L221.7,285.8L221.8,285.8L222.7,285.8L222.8,285.3L223.2,282.5L223.7,285.9L223.8,285.9L224.7,286.1L224.8,286.1L225.8,286.3L225.8,286.0L226.2,283.3L226.7,286.7L226.8,286.8L227.8,287.3L227.8,287.3L228.8,287.9L228.8,287.8L229.3,285.3L229.8,288.7L229.8,288.7L230.8,289.5L230.8,289.6L231.2,290.0L231.8,289.2L231.8,289.2L232.3,285.8L232.8,288.1L232.8,288.1L233.8,287.1L233.8,287.1L234.8,286.1L234.8,286.0L235.3,282.6L235.8,285.0L235.8,285.1L236.8,284.2L236.8,284.1L237.8,283.3L237.9,283.2L238.3,279.8L238.8,282.1L238.8,282.4L239.8,281.6L239.9,281.5L240.8,280.8L240.9,280.8L241.0,280.0L241.4,278.0L241.8,280.9L241.9,281.4L242.8,282.4L242.9,282.5L243.8,283.4L243.9,283.5L244.4,280.9L244.8,283.6L244.9,284.3L245.8,284.9L245.9,285.0L246.8,285.5L247.0,285.6L247.4,282.6L247.8,285.0L247.9,285.9L248.8,286.1L249.0,286.2L249.8,286.3L250.0,286.3L250.5,283.0L250.8,285.2L251.0,286.4L251.8,286.4L252.0,286.4L252.8,286.4L253.0,286.5L253.5,283.2L253.8,285.3L254.0,286.6L254.8,286.8L255.0,286.9L255.8,287.2L256.1,287.3L256.5,284.4L256.8,286.3L257.0,287.8L257.8,288.4L258.1,288.6L258.8,289.2L259.1,289.5L259.6,287.0L259.8,288.7L260.1,290.4L260.8,291.2L261.1,291.7L261.3,291.9L261.8,290.8L262.1,290.2L262.6,286.7L262.8,287.5L263.1,288.5L263.8,287.3L264.1,286.8L264.8,285.6L265.1,285.1L265.6,281.6L265.8,282.3L266.1,283.5L266.8,282.4L267.1,281.9L267.8,280.9L268.2,280.4L268.6,276.9L268.8,277.5L269.1,279.0L269.8,278.0L270.2,277.5L270.8,276.7L271.2,276.1L271.7,272.5L271.8,273.0L272.0,274.1L272.2,275.5L272.8,276.8L273.2,277.8L273.8,279.2L274.2,280.2L274.7,278.6L274.8,279.2L275.2,282.2L275.8,283.3L276.2,284.1L276.8,285.0L277.3,285.6L277.7,283.3L277.8,283.7L278.2,286.7L278.8,287.2L279.3,287.6L279.8,287.9L280.3,288.1L280.8,285.0L280.8,285.1L281.3,288.3L281.8,288.4L282.3,288.5L282.8,288.5L283.3,288.5L283.8,285.3L284.3,288.7L284.8,288.8L285.3,289.0L285.8,289.2L286.4,289.5L286.8,287.1L286.8,287.0L287.3,290.4L287.8,290.9L288.4,291.7L288.8,292.3L289.4,293.3L289.8,291.8L289.9,291.6L290.4,295.2L290.8,296.1L291.4,297.2L291.8,297.9L292.4,298.9L292.8,299.4L292.9,299.6L293.0,300.0L293.4,298.6L293.8,297.1L294.4,294.8L294.8,293.4L295.4,290.9L295.8,287.7L295.9,286.6L296.4,287.0L296.8,285.4L297.4,282.9L297.8,281.5L298.5,279.0L298.8,276.1L298.9,274.9L299.4,275.4L299.8,274.1L300.5,271.8L300.8,270.6L301.5,268.3L301.8,265.8L302.0,264.6L302.5,264.4L302.8,263.1L303.5,260.4L303.8,262.1L304.5,266.2L304.8,266.9L305.0,267.2L305.5,271.5L305.8,272.9L306.5,276.1L306.8,277.3L307.6,280.3L307.8,280.0L308.0,279.7L308.5,283.7L308.8,284.5L309.6,286.6L309.8,287.2L310.6,288.9L310.8,288.1L311.1,286.9L311.6,290.4L311.8,290.7L312.6,291.4L312.8,291.6L313.6,292.0L313.8,290.9L314.1,289.0L314.6,292.3L314.8,292.4L315.6,292.5L315.8,292.5L316.6,292.7L316.8,291.8L317.1,289.8L317.6,293.1L317.8,293.3L318.6,294.0L318.8,294.2L319.7,295.5L319.8,295.0L320.2,293.8L320.6,297.5L320.8,297.8L321.7,300.3L321.8,300.7L322.7,303.8L322.8,303.7L323.2,303.4L323.7,307.8L323.8,308.3L324.7,312.4L324.8,312.8L325.7,315.7L325.8,315.6L326.2,314.9L326.7,314.0L326.7,313.9L326.8,313.8L327.7,310.0L327.8,309.6L328.8,301.1L328.8,300.7L329.2,294.3L329.7,291.6L329.8,291.0L330.8,281.9L330.8,281.6L331.8,272.7L332.3,266.5L332.8,264.4L332.8,264.1L333.8,255.4L334.8,246.8L334.8,247.1L335.3,251.2L335.8,256.4L336.8,265.5L336.8,265.8L337.8,273.4L337.9,273.9L338.3,275.2L338.8,280.3L338.8,280.6L339.8,286.2L339.9,286.6L340.8,290.8L340.9,291.2L341.4,290.5L341.8,293.9L341.9,294.4L342.8,296.5L342.9,296.6L343.8,297.8L343.9,297.9L344.4,295.2L344.8,297.9L344.9,298.6L345.8,298.8L345.9,298.9L346.8,299.2L346.9,299.2L347.4,296.6L347.8,299.1L347.9,300.0L348.8,301.3L348.9,301.6L349.8,303.8L350.0,304.3L350.5,303.8L350.8,306.8L350.9,308.1L351.8,312.5L352.0,313.5L352.8,318.8L353.0,320.2L353.5,321.7L353.8,325.4L354.0,327.6L354.8,334.1L355.0,335.6L355.8,338.0L356.0,337.7L356.4,336.1L356.5,335.7L356.8,334.9L357.0,334.0L357.8,326.2L358.0,322.9L358.8,311.7L359.1,307.6L359.6,298.5L359.8,295.9L360.0,293.4L360.8,282.7L361.1,279.0L361.8,269.2L362.1,265.3L362.6,257.1L362.8,255.2L363.1,252.9L363.8,243.4L364.1,239.6L364.8,230.8L365.0,228.2L365.1,230.1L365.6,236.2L365.8,239.0L366.1,243.7L366.8,253.2L367.1,257.4L367.8,265.3L368.2,269.2L368.6,272.1L368.8,274.2L369.1,278.7L369.8,284.1L370.2,286.6L370.8,290.4L371.2,292.4L371.7,292.0L371.8,293.1L372.2,296.0L372.8,297.6L373.2,298.2L373.8,299.0L374.2,299.3L374.7,296.4L374.8,297.1L375.2,299.8L375.8,300.1L376.2,300.3L376.8,301.0L377.2,301.7L377.7,300.4L377.8,301.0L378.2,304.5L378.8,306.9L379.2,309.3L379.8,312.8L380.3,316.3L380.8,318.3L380.8,318.8L381.2,325.1L381.8,330.9L382.3,336.4L382.8,342.7L383.3,348.6L383.8,352.0L383.8,352.1L384.3,355.0L384.8,354.3L385.3,353.8L385.8,350.7L386.3,344.4L386.8,335.8L386.8,335.4L387.3,329.9L387.8,322.4L388.3,314.2L388.8,307.4L389.4,299.1L389.8,291.1L389.9,290.2L390.3,285.3L390.8,278.9L391.4,271.1L391.8,265.4L392.4,257.5L392.8,250.6L392.9,249.2L393.4,245.0L393.8,239.6L394.4,231.9L394.8,226.7L395.4,218.7L395.8,213.9L395.9,212.7L395.9,212.9L396.4,221.7L396.8,228.9L397.4,239.9L397.8,246.1L398.5,256.5L398.8,260.1L398.9,261.5L399.4,270.2L399.8,274.8L400.5,282.3L400.8,285.7L401.5,291.7L401.8,292.6L402.0,293.0L402.5,298.1L402.8,299.8L403.5,302.5L403.8,303.4L404.5,305.0L404.8,303.8L405.0,302.8L405.5,306.2L405.8,306.4L406.5,306.8L406.8,306.9L407.6,307.5L407.8,306.5L408.0,305.6L408.5,309.3L408.8,310.1L409.6,313.1L409.8,314.4L410.6,319.4L410.8,320.1L411.1,321.2L411.6,327.8L411.8,330.4L412.6,339.5L412.8,342.4L413.6,353.8L413.8,355.9L414.1,359.2L414.6,368.9L414.8,372.1L415.6,380.1L415.8,380.5L416.3,379.5L416.6,379.4L416.8,378.6L417.1,375.6L417.6,370.0L417.8,366.7L418.6,350.2L418.8,347.0L419.7,329.5L419.8,326.3L420.1,317.9L420.6,310.3L420.8,307.2L421.7,290.6L421.8,288.2L422.7,271.5L422.8,269.2L423.2,260.8L423.7,254.0L423.8,251.7L424.7,236.1L424.8,234.4L425.7,218.6L425.8,217.2L426.2,208.6L426.7,202.6L426.8,200.9L427.7,185.4L427.8,184.2L428.7,169.2L428.8,170.8L428.8,171.8L429.2,182.7L429.7,195.7L429.8,197.5L430.8,220.8L430.8,221.7L431.8,242.8L431.8,242.9L432.3,249.8L432.8,260.2L432.8,260.8L433.8,274.7L433.8,274.8L434.8,284.9L434.8,285.0L435.3,286.4L435.8,291.3L435.8,291.3L436.8,294.9L436.8,295.0L437.8,296.6L437.9,296.7L438.3,294.1L438.8,297.3L438.8,297.5L439.8,298.7L439.9,298.8L440.8,301.7L440.9,302.1L441.4,302.5L441.8,307.5L441.9,308.1L442.8,317.3L442.9,318.2L443.8,330.9L443.9,332.6L444.4,338.9L444.8,348.4L444.9,350.3L445.8,369.9L445.9,372.4L446.8,391.4L446.9,393.6L447.4,398.5L447.8,400.4L447.9,400.5L448.0,400.5L448.8,400.0L448.9,398.9L449.8,385.0L450.0,381.6L450.4,369.5L450.8,363.7L450.9,361.4L451.8,343.8L452.0,340.3L452.8,323.7L453.0,319.7L453.5,308.3L453.8,303.4L454.0,300.8L454.8,285.1L455.0,281.3L455.8,266.5L456.0,262.4L456.5,251.7L456.8,247.7L457.0,245.0L457.8,231.1L458.0,227.1L458.8,214.0L459.1,209.6L459.5,199.5L459.8,196.3L460.0,193.2L460.8,180.1L461.1,175.7L461.6,166.5L461.8,173.4L462.1,183.2L462.6,198.2L462.8,206.0L463.1,214.8L463.8,236.3L464.1,243.8L464.8,259.7L465.1,265.8L465.6,271.4L465.8,274.9L466.1,279.6L466.8,285.9L467.1,287.8L467.8,290.4L468.1,291.1L468.6,289.0L468.8,290.1L469.1,292.3L469.8,293.4L470.1,294.5L470.8,297.9L471.2,301.1L471.7,304.3L471.8,306.7L472.1,313.7L472.8,326.1L473.2,334.7L473.8,350.7L474.2,362.1L474.7,373.5L474.8,376.2L475.2,384.2L475.8,388.9L475.9,389.2L476.2,391.4L476.8,390.4L477.2,385.0L477.7,374.3L477.8,372.9L478.2,365.8L478.8,353.3L479.2,344.0L479.8,332.3L480.3,322.6L480.8,310.8L480.8,309.9L481.2,302.9L481.8,291.8L482.3,282.6L482.8,272.3L483.3,262.8L483.8,251.8L483.8,251.5L484.3,244.8L484.8,235.1L485.3,226.1L485.8,217.2L486.3,207.9L486.8,197.8L486.8,197.6L487.3,191.2L487.8,182.5L488.3,173.2L488.8,165.1L489.4,155.4L489.5,152.9L489.8,162.0L489.8,163.1L490.3,178.5L490.8,192.5L491.4,208.4L491.8,220.0L492.4,234.1L492.8,241.2L492.9,242.3L493.4,253.6L493.8,260.7L494.4,268.6L494.8,273.0L495.4,278.0L495.8,278.6L495.9,278.6L496.4,282.8L496.8,283.9L497.4,285.0L497.8,285.4L498.4,286.0L498.8,284.5L498.9,284.1L499.4,287.9L499.8,289.4L500.4,293.2L500.8,296.1L501.5,303.5L501.8,306.5L502.0,308.2L502.4,318.6L502.8,325.4L503.5,340.5L503.8,348.3L504.5,366.8L504.8,373.3L505.0,377.3L505.5,387.3L505.8,390.5L506.2,392.0L506.5,394.0L506.8,394.4L507.5,388.3L507.8,383.2L508.0,378.3L508.5,370.8L508.8,365.1L509.5,350.9L509.8,345.9L510.6,331.4L510.8,326.1L511.1,320.4L511.5,313.5L511.8,308.7L512.6,294.9L512.8,290.8L513.6,276.9L513.8,272.6L514.1,266.7L514.6,260.4L514.8,256.6L515.6,243.4L515.8,240.1L516.6,226.8L516.8,223.4L517.1,217.2L517.6,211.5L517.8,208.4L518.6,195.2L518.8,192.5L519.7,178.9L519.8,176.6L519.9,175.1L520.1,180.6L520.6,192.5L520.8,196.6L521.7,216.3L521.8,219.4L522.7,237.7L522.8,239.3L523.2,244.5L523.7,254.9L523.8,257.1L524.7,269.6L524.8,271.0L525.7,280.5L525.8,280.8L526.2,282.2L526.7,287.4L526.8,288.0L527.7,291.8L527.8,292.0L528.8,293.9L528.8,293.7L529.2,291.5L529.7,294.8L529.8,294.9L530.8,295.7L530.8,295.8L531.8,297.8L531.8,297.8L532.3,297.4L532.8,302.1L532.8,302.4L533.8,309.9L533.8,310.1L534.8,321.4L534.8,321.5L535.3,326.3L535.8,336.2L535.8,336.5L536.8,355.1L536.8,355.3L537.8,375.8L537.8,376.5L538.3,383.9L538.8,390.2L538.8,390.3L539.4,391.6L539.8,392.7L539.8,392.6L540.8,384.2L540.9,383.0L541.4,372.5L541.8,365.6L541.8,365.0L542.8,346.6L542.9,345.3L543.8,327.7L543.9,325.9L544.4,315.0L544.8,309.1L544.9,308.1L545.8,291.4L545.9,289.6L546.8,273.9L546.9,271.7L547.4,261.5L547.8,256.5L547.9,255.3L548.8,240.4L548.9,238.3L549.8,224.4L550.0,221.8L550.4,212.2L550.8,208.1L550.9,206.6L551.8,192.9L552.0,190.4L552.8,177.1L553.0,174.1L553.4,167.7L553.5,169.1L553.8,175.9L554.0,179.4L554.8,196.6L555.0,200.4L555.8,215.7L556.0,219.5L556.5,225.5L556.8,231.4L557.0,235.1L557.8,246.0L558.0,248.6L558.8,256.7L559.0,258.9L559.5,260.5L559.8,263.4L560.0,265.7L560.8,269.3L561.0,270.2L561.8,272.1L562.1,272.5L562.6,270.2L562.8,271.8L563.0,273.6L563.8,274.0L564.1,274.2L564.8,275.0L565.1,275.5L565.6,274.3L565.8,276.0L566.1,278.5L566.8,282.1L567.1,284.1L567.8,289.7L568.1,293.0L568.6,296.2L568.8,299.1L569.1,304.3L569.8,314.4L570.1,319.8L570.8,331.1L571.2,337.9L571.6,344.9L571.8,348.0L572.1,354.1L572.8,360.1L573.2,360.9L573.2,360.9L573.8,362.6L574.2,361.2L574.7,355.5L574.8,354.3L575.2,351.0L575.8,342.6L576.2,337.2L576.8,329.3L577.2,323.7L577.7,315.5L577.8,314.7L578.2,311.3L578.8,303.7L579.2,298.4L579.8,291.4L580.3,285.9L580.7,278.2L580.8,277.7L581.2,274.5L581.8,267.9L582.3,262.7L582.8,256.6L583.3,251.2L583.8,243.9L583.8,243.7L584.3,240.7L584.8,234.7L585.3,229.2L585.8,223.6L586.3,217.8L586.5,215.8L586.8,219.4L587.3,226.1L587.8,232.7L588.3,239.2L588.8,244.9L589.4,251.0L589.8,253.8L589.8,254.0L590.3,260.8L590.8,265.2L591.4,269.7L591.8,273.1L592.4,276.9L592.8,277.4L592.9,277.5L593.4,282.0L593.8,283.9L594.4,285.9L594.8,287.0L595.4,288.3L595.8,286.7L595.9,286.2L596.4,289.6L596.8,290.0L597.4,290.3L597.8,290.5L598.4,290.7L598.8,288.6L598.9,287.9L599.4,291.3L599.8,291.7L600.4,292.7L600.8,293.4L601.5,295.3L601.8,294.9L602.0,294.8L602.4,299.2L602.8,301.1L603.5,305.1L603.8,307.4L604.5,312.9L604.8,314.2L605.0,315.0L605.5,321.8L605.8,325.2L606.5,332.8L606.8,336.2L607.5,344.3L607.8,346.1L608.0,347.4L608.5,350.5L608.8,350.6L609.0,350.4L609.5,350.6L609.8,349.7L610.6,343.8L610.8,340.3L611.0,336.4L611.5,332.6L611.8,329.4L612.6,320.5L612.8,317.8L613.6,308.7L613.8,305.4L614.1,301.2L614.6,297.8L614.8,295.2L615.6,286.6L615.8,284.3L616.6,275.7L616.8,273.0L617.1,268.6L617.6,265.7L617.8,263.6L618.6,255.4L618.8,253.6L619.6,245.3L619.8,243.3L620.1,238.7L620.6,236.0L620.8,234.2L621.6,225.8L621.8,224.3L622.5,217.4L622.7,219.4L622.8,220.7L623.2,224.3L623.6,230.5L623.8,232.2L624.7,241.6L624.8,242.7L625.7,251.1L625.8,251.5L626.2,253.1L626.7,258.9L626.8,259.7L627.7,265.5L627.8,266.0L628.7,270.4L628.8,270.3L629.2,269.7L629.7,273.5L629.8,273.8L630.7,275.6L630.8,275.7L631.8,276.7L631.8,276.5L632.2,273.8L632.7,277.1L632.8,277.1L633.8,277.5L633.8,277.5L634.8,278.3L635.3,276.3L635.8,280.0L635.8,280.1L636.8,283.2L637.8,287.8L637.8,288.0L638.3,288.7L638.8,294.2L639.8,302.2L639.8,302.5L640.8,311.6L640.9,312.2L641.3,315.1L641.8,320.6L641.8,320.9L642.8,324.2L642.9,324.1L643.0,324.1L643.8,323.8L643.9,323.5L644.4,319.2L644.8,316.8L644.9,316.5L645.8,307.6L645.9,306.7L646.8,298.2L646.9,297.1L647.4,290.7L647.8,288.8L647.9,288.4L648.8,280.5L648.9,279.5L649.8,272.2L650.0,271.0L650.4,265.0L650.8,263.6L650.9,263.2L651.8,256.0L652.0,254.8L652.8,247.8L653.0,246.3L653.2,244.5L653.5,246.0L653.8,248.4L654.0,249.6L654.8,255.2L655.0,256.4L655.8,261.2L656.0,262.3L656.5,262.6L656.8,265.5L657.0,267.1L657.8,270.6L658.0,271.4L658.8,274.1L659.0,274.8L659.5,273.6L659.8,275.6L660.0,277.2L660.8,278.6L661.0,278.9L661.8,279.7L662.1,279.9L662.5,277.0L662.8,278.7L663.0,280.4L663.8,280.6L664.1,280.6L664.8,280.8L665.1,280.9L665.6,278.0L665.8,279.5L666.1,281.3L666.8,282.0L667.1,282.4L667.8,283.5L668.1,284.2L668.6,282.9L668.8,284.4L669.1,286.8L669.8,289.2L670.1,290.5L670.8,293.4L671.2,295.1L671.6,295.4L671.8,297.0L672.1,300.3L672.8,303.9L673.2,305.6L673.8,307.6L674.2,307.7L674.5,307.4L674.7,307.3L674.8,307.3L675.2,307.3L675.8,305.1L676.2,303.0L676.8,299.3L677.2,296.6L677.7,291.4L677.8,291.2L678.2,290.5L678.8,286.8L679.2,284.3L679.8,280.9L680.2,278.4L680.7,273.5L680.8,273.4L681.2,273.0L681.8,269.7L682.2,267.1L682.8,263.9L683.3,261.1L683.4,260.4L683.8,261.4L683.8,261.5L684.2,263.7L684.8,265.8L685.3,267.5L685.8,269.2L686.3,270.6L686.8,269.4L686.8,269.4L687.3,273.1L687.8,274.3L688.3,275.3L688.8,276.2L689.3,277.1L689.8,274.9L689.8,274.8L690.3,278.3L690.8,278.7L691.3,279.1L691.8,279.4L692.4,279.6L692.8,276.8L692.9,276.5L693.3,279.9L693.8,279.9L694.4,280.0L694.8,280.0L695.4,280.1L695.8,277.5L695.9,277.0L696.4,280.4L696.8,280.6L697.4,280.9L697.8,281.2L698.4,281.9L698.8,280.2L698.9,279.7L699.4,283.2L699.8,283.9L700.4,285.2L700.8,286.0L701.5,287.6L701.8,286.7L701.9,286.4L702.4,290.2L702.8,291.3L703.5,293.3L703.8,294.4L704.5,296.8L704.7,296.3L704.8,295.4L705.0,294.1L705.5,295.8L705.8,295.1L706.5,293.7L706.8,293.0L707.5,291.5L707.8,289.4L708.0,287.9L708.5,289.6L708.8,289.0L709.5,287.6L709.8,287.0L710.5,285.6L710.8,283.8L711.0,282.1L711.5,283.9L711.8,283.4L712.5,282.1L712.8,281.6L713.6,280.3L713.8,278.7L714.1,276.8L714.5,278.7L714.8,278.3L715.4,277.6L715.6,277.8L715.8,278.0L716.6,279.1L716.8,278.3L717.1,277.0L717.6,280.5L717.8,280.8L718.6,281.8L718.8,282.1L719.6,283.0L719.8,282.2L720.1,280.5L720.6,283.9L720.8,284.0L721.6,284.6L721.8,284.7L722.7,285.2L722.8,284.3L723.1,282.1L723.6,285.5L723.8,285.5L724.7,285.7L724.8,285.7L725.7,285.8L725.8,285.1L726.2,282.4L726.7,285.8L726.8,285.8L727.7,285.9L727.8,285.9L728.7,286.0L728.8,285.6L729.2,283.0L729.7,286.3L729.8,286.4L730.7,286.8L730.8,286.9L731.8,287.5L731.8,287.3L732.2,285.0L732.7,288.4L732.8,288.5L733.8,289.6L733.8,289.6L734.8,290.9L734.8,290.8L735.3,288.8L735.8,292.2L735.8,292.3L736.7,293.9L736.8,293.7L736.8,293.7L737.8,291.8L737.8,291.7L738.3,288.2L738.8,290.1L738.8,290.1L739.8,288.5L739.8,288.5L740.8,286.9L740.9,286.9L741.3,283.4L741.8,285.3L741.8,285.4L742.8,283.9L742.9,283.9L743.8,282.5L743.9,282.4L744.4,279.0L744.8,280.9L744.9,281.1L745.8,279.8L745.9,279.7L746.8,278.5L746.9,278.4L747.4,274.7L747.4,274.7L747.8,277.8L747.9,278.4L748.8,279.5L748.9,279.6L749.8,280.7L749.9,280.8L750.4,278.4L750.8,281.0L750.9,281.8L751.8,282.6L751.9,282.7L752.8,283.3L753.0,283.4L753.5,280.5L753.8,282.9L753.9,283.8L754.8,284.1L755.0,284.2L755.8,284.3L756.0,284.3L756.5,281.0L756.8,283.2L757.0,284.4L757.8,284.4L758.0,284.4L758.8,284.5L759.0,284.5L759.5,281.3L759.8,283.3L760.0,284.6L760.8,284.9L761.0,284.9L761.8,285.3L762.1,285.4L762.5,282.6L762.8,284.4L763.0,286.0L763.8,286.7L764.1,286.9L764.8,287.6L765.1,287.9L765.6,285.6L765.8,287.2L766.1,289.0L766.8,289.9L767.1,290.4L767.3,290.8L767.8,289.9L768.1,289.5L768.6,286.0L768.8,286.9L769.1,288.2L769.8,287.3L770.1,286.9L770.8,286.1L771.1,285.7L771.6,282.3L771.8,283.0L772.1,284.5L772.8,283.8L773.1,283.4L773.8,282.7L774.2,282.3L774.7,278.8L774.8,279.5L775.1,281.2L775.8,280.6L776.2,280.2L776.8,279.7L777.0,279.6L777.2,279.7L777.7,277.0L777.8,277.7L778.2,280.4L778.8,280.9L779.2,281.2L779.8,281.7L780.2,282.0L780.7,279.2L780.8,279.7L781.2,282.6L781.8,282.9L782.2,283.2L782.8,283.4L783.3,283.6L783.8,280.6L783.8,280.9L784.2,284.0L784.8,284.1L785.3,284.2L785.8,284.3L786.3,284.3L786.8,281.0L786.8,281.1L787.3,284.4L787.8,284.4L788.3,284.4L788.8,284.4L789.3,284.5L789.8,281.2L789.8,281.1L790.3,284.5L790.8,284.6L791.3,284.6L791.8,284.7L792.4,284.8L792.8,282.0L792.8,281.8L793.3,285.1L793.8,285.3L794.4,285.5L794.8,285.8L795.4,286.1L795.8,283.7L795.9,283.3L796.4,286.7L796.8,287.0L797.4,287.5L797.8,287.8L798.4,288.3L798.8,286.2L798.9,285.7L799.4,289.2L799.4,289.2L799.8,288.6L800.4,287.9L800.8,287.5L801.5,286.8L801.8,284.3L801.9,283.4L802.4,285.7L802.8,285.4L803.5,284.7L803.8,284.3L804.5,283.7L804.8,281.4L805.0,280.3L805.5,282.8L805.8,282.5L806.5,281.9L806.8,281.6L807.5,281.0L807.8,278.9L808.0,277.4L808.0,277.4L808.5,280.9L808.8,281.1L809.5,281.6L809.8,281.8L810.5,282.2L810.8,280.7L811.0,279.4L811.5,282.8L811.8,282.9L812.5,283.3L812.8,283.4L813.6,283.7L813.8,282.2L814.0,280.7L814.5,284.0L814.8,284.1L815.6,284.3L815.8,284.3L816.6,284.4L816.8,283.1L817.1,281.2L817.6,284.5L817.8,284.6L818.6,284.6L818.8,284.6L819.6,284.6L819.8,283.4L820.1,281.3L820.6,284.6L820.8,284.6L821.6,284.7L821.8,284.7L822.7,284.8L822.8,283.8L823.1,281.6L823.6,284.9L823.8,284.9L824.7,285.1L824.8,285.2L825.7,285.5L825.8,284.8L826.2,282.5L826.7,285.8L826.8,285.9L827.7,286.3L827.8,286.4L828.7,286.9L828.8,286.4L829.2,284.1L829.7,287.5L829.8,287.6L830.7,288.2L830.8,288.3L831.0,288.5L831.8,287.6L831.8,287.3L832.2,284.3L832.7,286.8L832.8,286.7L833.8,285.9L833.8,285.9L834.8,285.1L834.8,285.0L835.3,281.7L835.8,284.4L835.8,284.3L836.8,283.6L836.8,283.6L837.8,282.9L837.8,282.9L838.3,279.5L838.8,282.2L838.8,282.2L839.8,281.6L839.8,281.6L840.0,281.5L840.8,281.9L840.8,281.9L841.3,279.1L841.8,282.4L841.8,282.5L842.8,283.0L842.8,283.0L843.8,283.5L843.9,283.5L844.4,280.6L844.8,283.7L844.8,284.0L845.8,284.3L845.9,284.3L846.8,284.6L846.9,284.6L847.4,281.4L847.8,284.3L847.9,284.8L848.8,284.9L848.9,284.9L849.8,285.0L849.9,285.0L850.4,281.6L850.8,284.3L850.9,285.0L851.8,285.0L851.9,285.0L852.8,285.0L853.0,285.0L853.4,281.7L853.8,284.2L853.9,285.1L854.8,285.2L855.0,285.2L855.8,285.4L856.0,285.4L856.5,282.3L856.8,284.6L857.0,285.7L857.8,286.0L858.0,286.0L858.8,286.4L859.0,286.5L859.5,283.6L859.8,285.6L860.0,287.0L860.8,287.4L861.0,287.5L861.8,288.0L862.0,288.2L862.4,286.1L862.5,285.1L862.8,286.6L863.0,287.8L863.8,287.1L864.0,286.9L864.8,286.3L865.1,286.0L865.6,282.7L865.8,283.9L866.0,285.3L866.8,284.7L867.1,284.5L867.8,283.9L868.1,283.7L868.6,280.4L868.8,281.5L869.1,283.0L869.8,282.6L870.1,282.3L870.8,282.0L871.0,281.9L871.1,282.0L871.6,279.0L871.8,280.2L872.1,282.4L872.8,282.8L873.1,282.9L873.8,283.2L874.2,283.4L874.6,280.4L874.8,281.4L875.1,283.8L875.8,284.0L876.2,284.1L876.8,284.3L877.2,284.4L877.7,281.1L877.8,281.9L878.2,284.5L878.8,284.6L879.2,284.6L879.8,284.6L880.2,284.6L880.7,281.3L880.8,281.8L881.2,284.6L881.8,284.6L882.2,284.7L882.8,284.7L883.3,284.7L883.7,281.5L883.8,281.9L884.2,284.9L884.8,285.0L885.3,285.1L885.8,285.3L886.3,285.4L886.8,282.4L886.8,282.6L887.3,285.8L887.8,286.0L888.3,286.3L888.8,286.6L889.3,286.8L889.8,283.9L890.0,285.3L890.3,287.1L890.8,286.7L891.3,286.4L891.8,286.1L892.4,285.8L892.8,282.7L892.8,282.4L893.3,285.3L893.8,285.0L894.4,284.7L894.8,284.5L895.4,284.2L895.8,281.3L895.9,280.8L896.4,283.7L896.8,283.5L897.4,283.2L897.8,283.1L898.0,283.1L898.4,283.1L898.8,280.6L898.9,280.1L899.4,283.4L899.8,283.5L900.4,283.7L900.8,283.8L901.4,284.0L901.8,281.6L901.9,280.9L902.4,284.2L902.8,284.3L903.4,284.4L903.8,284.5L904.5,284.6L904.8,282.3L905.0,281.3L905.4,284.7L905.8,284.7L906.5,284.8L906.8,284.8L907.5,284.8L907.8,282.7L908.0,281.4L908.5,284.8L908.8,284.8L909.5,284.8L909.8,284.8L910.5,284.8L910.8,283.0L911.0,281.5L911.5,284.9L911.8,284.9L912.5,284.9L912.8,284.9L913.6,285.0L913.8,283.4L914.0,281.8L914.5,285.1L914.8,285.2L915.6,285.3L915.8,285.4L916.6,285.5L916.8,284.2L917.1,282.4L917.6,285.8L917.8,285.8L918.6,286.1L918.8,286.1L919.6,286.4L919.8,285.2L920.0,283.9L920.1,283.2L920.6,286.3L920.8,286.2L921.6,286.0L921.8,285.9L922.6,285.6L922.8,284.6L923.1,282.3L923.6,285.3L923.8,285.3L924.6,285.0L924.8,285.0L925.7,284.8L925.8,283.9L926.2,281.4L926.6,284.5L926.8,284.5L927.7,284.1L927.8,284.1L928.0,285.2L928.7,285.4L928.8,284.8L929.2,282.0L929.7,285.4L929.8,285.4L930.7,285.4L930.8,285.4L931.7,285.4L931.8,285.0L932.2,282.0L932.7,285.4L932.8,285.4L933.7,285.4L933.8,285.4L934.8,285.4L934.8,285.2L935.2,282.0L935.7,285.4L935.8,285.4L936.8,285.4L936.8,285.4L937.8,285.4L938.3,282.0L938.8,285.4L938.8,285.4L939.8,285.4L940.8,285.4L940.8,285.4L941.3,282.0L941.8,285.4L942.8,285.4L942.8,285.4L943.8,285.4L943.9,285.4L944.3,282.0L944.8,285.2L944.8,285.4L945.8,285.4L945.9,285.4L946.8,285.4L946.9,285.4L947.4,282.0L947.8,285.0L947.9,285.4L948.8,285.4L948.9,285.4L949.8,285.4L949.9,285.4L950.4,282.0L950.8,284.8L950.9,285.4L951.8,285.4L951.9,285.4L952.8,285.4L953.0,285.4L953.4,282.0L953.8,284.6L953.9,285.4L954.8,285.4L955.0,285.4L955.8,285.4L956.0,285.4L956.5,282.0L956.8,284.4L957.0,285.4L957.8,285.4L958.0,285.4L958.8,285.4L959.0,285.4L959.5,282.0L959.8,284.1L960.0,285.4L960.8,285.4L961.0,285.4L961.8,285.4L962.0,285.4L962.5,282.0L962.8,283.9L963.0,285.4L963.8,285.4L964.0,285.4L964.8,285.4L965.1,285.4L965.5,282.0L965.8,283.7L966.0,285.4L966.8,285.4L967.1,285.4L967.8,285.4L968.1,285.4L968.6,282.0L968.8,283.5L969.1,285.4L969.8,285.4L970.1,285.4L970.2,285.4" stroke="#ff0000" stroke-width="1.25"/><path d="M58.8,286.8L59.6,286.8L59.8,286.8L60.6,286.8L60.8,283.8L61.1,279.7L61.6,286.8L61.8,286.8L62.6,286.8L62.8,286.8L63.6,286.8L63.8,284.3L64.1,279.7L64.6,286.8L64.8,286.8L65.6,286.8L65.8,286.8L66.7,286.8L66.8,284.7L67.1,279.7L67.6,286.8L67.8,286.8L68.7,286.8L68.8,286.8L69.7,286.8L69.8,285.2L70.2,279.7L70.7,286.8L70.8,286.8L71.7,286.8L71.8,286.8L72.7,286.8L72.8,285.6L73.2,279.7L73.7,286.8L73.8,286.8L74.7,286.8L74.8,286.8L75.8,286.8L75.8,286.1L76.2,279.7L76.7,286.8L76.8,286.8L77.8,286.8L77.8,286.8L78.8,286.8L78.8,286.5L79.3,279.7L79.8,286.8L79.8,286.8L80.8,286.8L80.8,286.8L81.8,286.8L81.8,286.8L82.3,279.7L82.8,286.8L82.8,286.8L83.8,286.8L83.8,286.8L84.8,286.8L84.8,286.8L85.3,279.7L85.8,286.7L85.8,286.8L86.8,286.8L86.8,286.8L87.8,286.8L87.9,286.8L88.3,279.7L88.8,286.2L88.8,286.8L89.8,286.8L89.9,286.8L90.8,286.8L90.9,286.8L91.4,279.7L91.8,285.8L91.9,286.8L92.8,286.8L92.9,286.8L93.8,286.8L93.9,286.8L94.4,279.7L94.8,285.3L94.9,286.8L95.8,286.8L95.9,286.8L96.8,286.8L97.0,286.8L97.4,279.7L97.8,284.9L97.9,286.8L98.8,286.8L99.0,286.8L99.8,286.8L100.0,286.8L100.5,279.7L100.8,284.4L101.0,286.8L101.8,286.8L102.0,286.8L102.8,286.8L103.0,286.8L103.5,279.7L103.8,284.0L104.0,286.8L104.8,286.8L105.0,286.8L105.8,286.8L106.0,286.8L106.5,279.7L106.8,283.5L107.0,286.8L107.8,286.8L108.0,286.8L108.8,286.8L109.1,286.8L109.6,279.7L109.8,283.1L110.0,286.8L110.8,286.2L111.0,286.2L111.1,287.1L111.8,287.1L112.1,287.0L112.6,280.3L112.8,282.9L113.1,286.6L113.8,286.4L114.1,286.3L114.8,286.0L115.1,285.9L115.6,279.2L115.8,281.5L116.1,285.7L116.8,285.6L117.0,285.6L117.1,285.7L117.8,285.6L118.2,285.6L118.7,278.9L118.8,280.9L119.1,285.8L119.8,285.9L120.2,285.9L120.8,286.0L121.2,286.1L121.7,279.2L121.8,280.8L122.2,286.2L122.8,286.3L123.2,286.3L123.8,286.4L124.2,286.4L124.7,279.4L124.8,280.6L125.2,286.5L125.8,286.6L126.2,286.6L126.8,286.6L127.3,286.7L127.7,279.6L127.8,280.4L128.2,286.7L128.8,286.8L129.3,286.8L129.8,286.8L130.3,286.9L130.8,279.8L130.8,280.1L131.3,286.9L131.8,286.9L132.3,287.0L132.8,287.0L133.3,287.0L133.8,280.1L134.3,287.1L134.8,287.1L135.3,287.2L135.8,287.2L136.3,287.3L136.8,280.8L136.8,280.4L137.3,287.3L137.8,287.4L138.3,287.5L138.8,287.5L139.4,287.6L139.8,281.7L139.9,280.8L140.3,287.7L140.8,287.9L141.0,287.9L141.4,287.6L141.8,287.5L142.4,287.3L142.8,281.8L142.9,280.5L143.4,287.0L143.8,286.9L144.4,286.8L144.8,286.7L145.4,286.5L145.8,281.4L145.9,279.7L146.4,286.3L146.8,286.2L147.4,286.0L147.8,285.9L148.5,285.8L148.8,281.1L148.9,279.0L149.4,285.6L149.8,285.5L150.5,285.3L150.8,285.4L151.0,285.4L151.5,285.3L151.8,281.2L152.0,278.7L152.5,285.5L152.8,285.5L153.5,285.7L153.8,285.7L154.5,285.9L154.8,282.1L155.0,279.2L155.5,286.1L155.8,286.1L156.5,286.3L156.8,286.3L157.6,286.4L157.8,283.0L158.0,279.5L158.5,286.6L158.8,286.6L159.6,286.7L159.8,286.7L160.6,286.8L160.8,283.7L161.1,279.8L161.6,286.9L161.8,286.9L162.6,287.0L162.8,287.0L163.6,287.1L163.8,284.4L164.1,280.1L164.6,287.2L164.8,287.2L165.6,287.2L165.8,287.3L166.7,287.3L166.8,285.2L167.1,280.5L167.6,287.4L167.8,287.5L168.7,287.6L168.8,287.6L169.7,287.7L169.8,286.1L170.2,281.1L170.7,287.9L170.8,287.9L171.7,288.2L171.8,288.3L172.0,288.3L172.7,287.7L172.8,286.4L173.2,281.1L173.7,287.2L173.8,287.1L174.7,286.7L174.8,286.7L175.7,286.3L175.8,285.5L176.2,279.7L176.7,285.9L176.8,285.9L177.7,285.5L177.8,285.5L178.8,285.1L178.8,284.7L179.2,278.4L179.7,284.9L179.8,284.9L180.0,285.0L180.8,284.9L180.8,284.9L181.8,285.1L182.3,278.7L182.8,285.4L182.8,285.4L183.8,285.7L184.8,285.9L184.8,285.9L185.3,279.3L185.8,286.2L186.8,286.4L186.8,286.4L187.8,286.6L187.9,286.6L188.3,279.6L188.8,286.3L188.8,286.7L189.8,286.9L189.9,286.9L190.8,287.0L190.9,287.0L191.4,280.0L191.8,286.2L191.9,287.1L192.8,287.2L192.9,287.2L193.8,287.3L193.9,287.3L194.4,280.4L194.8,286.1L194.9,287.4L195.8,287.6L195.9,287.6L196.8,287.7L196.9,287.7L197.4,281.1L197.8,286.2L197.9,287.9L198.8,288.1L198.9,288.1L199.8,288.3L200.0,288.3L200.5,281.9L200.8,286.5L200.9,288.6L201.8,289.0L202.0,288.8L202.8,288.1L203.0,288.0L203.5,281.5L203.8,285.3L204.0,287.5L204.8,287.1L205.0,287.0L205.8,286.6L206.0,286.5L206.5,280.0L206.8,283.4L207.0,286.1L207.8,285.7L208.0,285.6L208.8,285.3L209.1,285.2L209.6,278.6L209.8,281.7L210.0,284.8L210.8,284.5L211.1,284.4L211.6,284.5L211.8,284.4L212.1,284.3L212.6,278.1L212.8,281.0L213.1,284.6L213.8,284.9L214.1,285.0L214.8,285.3L215.1,285.4L215.6,279.0L215.8,281.5L216.1,285.7L216.8,285.9L217.1,286.0L217.8,286.2L218.2,286.3L218.6,279.5L218.8,281.7L219.1,286.6L219.8,286.7L220.2,286.8L220.8,286.9L221.2,287.0L221.7,280.0L221.8,281.8L222.2,287.1L222.8,287.2L223.2,287.3L223.8,287.4L224.2,287.4L224.7,280.6L224.8,281.9L225.2,287.6L225.8,287.7L226.2,287.7L226.8,287.9L227.2,288.0L227.7,281.6L227.8,282.4L228.2,288.2L228.8,288.4L229.2,288.5L229.8,288.7L230.3,288.8L230.8,282.6L230.8,283.0L231.2,288.8L231.2,289.4L231.8,288.7L232.3,288.4L232.8,288.0L233.3,287.7L233.8,281.3L233.8,281.3L234.3,287.2L234.8,286.9L235.3,286.6L235.8,286.3L236.3,286.0L236.8,279.8L236.8,279.5L237.3,285.5L237.8,285.2L238.3,285.0L238.8,284.7L239.4,284.4L239.8,278.6L239.8,277.9L240.3,284.0L240.8,284.0L241.0,284.0L241.4,283.8L241.8,283.9L242.4,284.2L242.8,279.2L242.9,278.2L243.4,284.6L243.8,284.8L244.4,285.1L244.8,285.3L245.4,285.6L245.8,280.7L245.9,279.2L246.4,286.0L246.8,286.1L247.4,286.3L247.8,286.5L248.5,286.7L248.8,281.9L248.9,279.9L249.4,287.0L249.8,287.0L250.5,287.2L250.8,287.3L251.5,287.4L251.8,282.9L252.0,280.4L252.5,287.6L252.8,287.7L253.5,287.8L253.8,287.8L254.5,288.0L254.8,284.1L255.0,281.3L255.5,288.2L255.8,288.2L256.5,288.4L256.8,288.5L257.6,288.7L257.8,285.5L258.0,282.6L258.5,289.0L258.8,289.1L259.6,289.4L259.8,289.5L260.6,289.9L260.8,287.2L261.1,283.6L261.3,287.0L261.6,289.9L261.8,289.4L262.6,288.6L262.8,288.4L263.6,287.6L263.8,285.2L264.1,281.4L264.6,286.6L264.8,286.4L265.6,285.7L265.8,285.5L266.6,284.7L266.8,282.6L267.1,278.5L267.6,283.9L267.8,283.7L268.6,283.0L268.8,282.8L269.7,282.1L269.8,280.4L270.1,275.8L270.6,281.3L270.8,281.2L271.7,280.8L271.8,280.9L272.0,280.6L272.7,280.7L272.8,279.7L273.2,275.8L273.7,281.7L273.8,281.8L274.7,282.7L274.8,282.8L275.7,283.7L275.8,283.0L276.2,278.4L276.7,284.6L276.8,284.7L277.7,285.5L277.8,285.6L278.8,286.3L278.8,285.8L279.2,280.2L279.7,287.0L279.8,287.1L280.8,287.7L280.8,287.7L281.8,288.2L281.8,288.1L282.3,281.4L282.8,288.7L282.8,288.7L283.8,289.1L283.8,289.1L284.8,289.6L284.8,289.6L285.3,283.1L285.8,290.0L285.8,290.0L286.8,290.5L286.8,290.5L287.8,291.1L287.9,291.1L288.3,285.5L288.8,291.5L288.8,291.7L289.8,292.5L289.9,292.5L290.8,293.4L290.9,293.4L291.4,289.0L291.8,292.9L291.9,293.2L292.8,292.9L292.9,292.9L293.0,292.8L293.8,291.8L293.9,291.6L294.4,287.7L294.8,289.8L294.9,290.4L295.8,288.3L295.9,288.1L296.8,286.0L296.9,285.6L297.4,279.7L297.8,282.6L297.9,283.4L298.8,281.5L298.9,281.2L299.8,279.4L300.0,279.0L300.4,273.0L300.8,275.9L300.9,277.0L301.8,274.9L302.0,274.4L302.8,271.7L303.0,271.1L303.5,269.5L303.5,269.5L303.8,270.2L304.0,271.0L304.8,273.7L305.0,274.4L305.8,276.7L306.0,277.1L306.5,273.3L306.8,276.7L307.0,279.1L307.8,280.6L308.0,281.0L308.8,282.4L309.1,282.8L309.5,278.3L309.8,281.5L310.0,284.4L310.8,285.6L311.1,286.0L311.8,287.0L312.1,287.4L312.6,281.6L312.8,284.8L313.1,288.7L313.8,289.5L314.1,289.8L314.8,290.6L315.1,290.9L315.6,284.4L315.8,287.4L316.1,291.8L316.8,292.4L317.1,292.7L317.8,293.3L318.1,293.6L318.6,288.1L318.8,290.3L319.1,294.6L319.8,295.4L320.1,295.8L320.8,296.7L321.2,297.2L321.7,292.9L321.8,294.5L322.1,298.7L322.8,299.9L323.2,300.5L323.8,301.7L324.2,302.5L324.7,298.7L324.8,300.0L325.2,303.8L325.8,303.7L326.2,303.0L326.7,301.5L326.8,301.4L327.2,300.9L327.7,297.5L327.8,297.4L328.2,297.7L328.8,294.9L329.2,292.3L329.8,289.1L330.3,286.4L330.8,279.5L330.8,279.5L331.2,281.2L331.8,278.3L332.3,275.9L332.8,273.3L333.3,270.3L333.8,265.2L333.8,265.2L334.3,264.5L334.8,261.5L335.3,263.9L335.8,266.3L336.3,268.9L336.8,266.8L336.8,266.8L337.3,272.9L337.8,274.7L338.3,276.5L338.8,278.0L339.4,279.8L339.8,276.8L339.8,276.6L340.3,282.6L340.8,283.9L341.4,285.4L341.8,286.5L342.4,288.0L342.8,284.0L342.9,283.3L343.4,290.2L343.8,291.2L344.4,292.4L344.8,293.2L345.4,294.3L345.8,289.5L345.9,288.3L346.4,295.9L346.8,296.5L347.4,297.5L347.8,298.1L348.4,299.2L348.8,295.8L348.9,294.7L349.4,301.1L349.8,301.9L350.4,303.4L350.8,304.3L351.5,306.1L351.8,304.0L352.0,303.0L352.4,309.0L352.8,310.1L353.5,312.4L353.8,313.5L354.5,315.9L354.8,314.5L355.0,313.9L355.5,317.3L355.8,316.9L356.4,314.8L356.5,314.7L356.8,314.2L357.5,311.1L357.8,307.7L358.0,304.3L358.5,303.8L358.8,301.3L359.5,294.8L359.8,292.5L360.6,286.1L360.8,282.1L361.1,277.9L361.5,278.3L361.8,276.2L362.6,270.3L362.8,268.6L363.6,262.1L363.8,259.3L364.1,256.1L364.6,254.0L364.8,252.1L365.0,250.5L365.6,254.5L365.8,255.9L366.6,261.5L366.8,261.2L367.1,260.2L367.6,267.1L367.8,268.1L368.6,272.3L368.8,273.1L369.7,277.0L369.8,276.3L370.1,274.6L370.6,281.0L370.8,281.7L371.7,284.9L371.8,285.4L372.7,288.5L372.8,287.5L373.2,284.1L373.7,291.6L373.8,292.0L374.7,294.5L374.8,294.8L375.7,297.1L375.8,296.2L376.2,292.0L376.7,299.4L376.8,299.7L377.7,302.2L377.8,302.4L378.8,305.4L378.8,305.1L379.2,302.6L379.7,309.1L379.8,309.4L380.8,313.5L380.8,313.7L381.8,318.5L381.8,318.4L382.3,316.7L382.8,323.6L382.8,323.9L383.8,327.3L383.8,327.3L384.8,325.9L384.8,325.9L385.3,324.5L385.8,323.8L385.8,323.7L386.8,316.6L386.8,316.5L387.8,307.6L387.8,307.2L388.3,298.7L388.8,298.7L388.8,298.7L389.8,290.2L389.8,289.8L390.8,281.9L390.9,281.4L391.4,273.2L391.8,273.6L391.8,273.6L392.8,266.2L392.9,265.7L393.8,258.8L393.9,258.0L394.4,250.7L394.8,250.1L394.9,249.9L395.8,242.2L395.9,241.3L396.8,248.9L396.9,250.0L397.4,250.7L397.8,256.3L397.9,257.9L398.8,264.0L398.9,264.9L399.8,270.4L400.0,271.4L400.4,269.8L400.8,275.0L400.9,276.9L401.8,281.4L402.0,282.2L402.8,286.1L403.0,286.9L403.5,283.9L403.8,288.6L404.0,291.1L404.8,294.4L405.0,295.1L405.8,298.0L406.0,298.8L406.5,293.9L406.8,298.8L407.0,301.9L407.8,304.4L408.0,305.2L408.8,307.9L409.1,308.8L409.5,306.1L409.8,309.8L410.0,312.9L410.8,316.6L411.1,317.9L411.8,321.9L412.1,323.5L412.6,322.2L412.8,325.7L413.1,329.6L413.8,334.5L414.1,336.5L414.8,340.8L415.1,342.1L415.6,341.5L415.8,342.2L416.1,342.0L416.3,341.1L416.8,340.3L417.1,338.9L417.8,333.4L418.1,329.8L418.6,320.0L418.8,319.3L419.1,318.4L419.8,310.2L420.1,306.3L420.8,298.6L421.2,294.4L421.6,284.8L421.8,284.4L422.1,283.6L422.8,276.5L423.2,272.5L423.8,265.9L424.2,261.8L424.7,252.6L424.8,252.4L425.2,251.9L425.8,245.7L426.2,241.8L426.8,235.8L427.2,231.2L427.7,224.0L427.8,223.6L428.2,221.0L428.7,215.7L428.8,216.8L429.2,221.9L429.8,228.5L430.3,233.8L430.7,234.8L430.8,235.9L431.2,243.9L431.8,249.4L432.3,253.5L432.8,258.2L433.3,262.2L433.8,261.6L433.8,262.0L434.3,269.5L434.8,273.2L435.3,276.4L435.8,279.5L436.3,282.6L436.8,279.9L437.3,288.0L437.8,290.7L438.3,293.3L438.8,295.6L439.4,298.1L439.8,295.0L439.8,294.8L440.3,302.7L440.8,305.2L441.4,308.3L441.8,311.0L442.4,314.9L442.8,314.1L442.9,314.0L443.4,322.1L443.8,325.7L444.4,330.8L444.8,334.6L445.4,340.4L445.8,340.7L445.9,340.8L446.4,349.6L446.8,352.7L447.4,354.9L447.8,354.6L448.0,354.1L448.4,354.1L448.8,351.7L448.9,350.4L449.4,348.4L449.8,344.4L450.4,336.7L450.8,332.3L451.5,324.2L451.8,317.3L451.9,314.1L452.4,312.6L452.8,308.4L453.5,300.6L453.8,296.8L454.5,288.9L454.8,282.9L455.0,279.3L455.5,278.2L455.8,274.6L456.5,267.2L456.8,264.0L457.5,256.5L457.8,251.3L458.0,247.3L458.5,246.6L458.8,243.6L459.5,236.4L459.8,233.5L460.6,225.3L460.8,221.8L461.0,218.9L461.5,214.8L461.6,214.1L461.8,217.1L462.6,228.5L462.8,232.1L463.6,243.3L463.8,244.1L464.1,245.0L464.6,255.0L464.8,257.6L465.6,265.7L465.8,267.6L466.6,274.7L466.8,274.5L467.1,273.9L467.6,282.2L467.8,283.7L468.6,289.4L468.8,290.6L469.6,295.8L469.8,295.0L470.1,293.9L470.6,302.2L470.8,303.5L471.6,310.7L471.8,312.0L472.7,321.1L472.8,321.3L473.2,322.2L473.6,332.5L473.8,334.3L474.7,344.1L474.8,345.1L475.7,348.2L475.8,348.0L475.9,347.9L476.2,348.0L476.7,347.9L476.8,347.4L477.7,339.3L477.8,338.3L478.7,326.6L478.8,325.3L479.2,316.3L479.7,314.5L479.8,313.4L480.7,302.0L480.8,301.3L481.8,289.9L481.8,289.3L482.2,280.1L482.7,278.7L482.8,278.1L483.8,267.2L483.8,266.9L484.8,256.1L485.3,246.7L485.8,245.8L485.8,245.5L486.8,235.2L487.8,224.8L487.8,224.5L488.3,216.6L488.8,213.8L489.5,206.1L489.8,210.2L489.8,210.6L490.8,223.9L490.9,224.7L491.3,227.1L491.8,236.3L491.8,236.9L492.8,247.5L492.9,248.2L493.8,257.3L493.9,258.1L494.4,258.0L494.8,265.2L494.9,266.2L495.8,273.2L495.9,273.8L496.8,280.0L496.9,280.8L497.4,277.8L497.8,285.0L497.9,286.7L498.8,291.7L498.9,292.4L499.8,297.6L499.9,298.5L500.4,297.4L500.8,303.5L500.9,305.5L501.8,312.8L501.9,314.2L502.8,322.6L503.0,324.4L503.5,325.4L503.8,332.2L503.9,335.2L504.8,344.4L505.0,346.0L505.8,349.8L506.0,349.6L506.2,349.4L506.5,349.4L506.8,349.4L507.0,349.4L507.8,343.7L508.0,341.6L508.8,332.8L509.0,330.1L509.5,320.3L509.8,319.6L510.0,319.1L510.8,310.4L511.0,307.7L511.8,299.5L512.1,296.6L512.5,287.3L512.8,286.8L513.0,286.5L513.8,278.7L514.1,276.0L514.8,268.7L515.1,265.8L515.6,256.9L515.8,256.7L516.1,256.5L516.8,249.6L517.1,246.8L517.8,240.3L518.1,237.1L518.6,229.4L518.8,228.8L519.1,227.2L519.8,220.2L519.9,219.1L520.1,221.6L520.8,228.9L521.2,232.8L521.6,234.2L521.8,236.8L522.1,242.7L522.8,248.7L523.2,251.8L523.8,257.1L524.2,260.2L524.7,259.5L524.8,261.5L525.2,267.2L525.8,271.4L526.2,273.9L526.8,277.5L527.2,279.8L527.7,277.3L527.8,278.7L528.2,285.0L528.8,288.1L529.2,290.1L529.8,292.7L530.2,294.7L530.7,290.8L530.8,291.9L531.2,298.8L531.8,301.4L532.2,303.6L532.8,306.6L533.3,309.3L533.8,308.0L533.8,308.5L534.2,315.6L534.8,319.5L535.3,323.2L535.8,327.4L536.3,331.7L536.8,331.7L536.8,331.8L537.3,340.4L537.8,344.8L538.3,348.1L538.8,349.5L539.3,348.8L539.4,348.6L539.8,348.0L539.8,347.9L540.3,347.2L540.8,343.6L541.3,338.4L541.8,333.2L542.4,326.7L542.8,318.0L542.9,317.0L543.3,315.8L543.8,310.7L544.4,304.5L544.8,299.9L545.4,293.5L545.8,285.7L545.9,284.2L546.4,283.4L546.8,279.0L547.4,273.0L547.8,269.0L548.4,262.8L548.8,255.9L548.9,253.9L549.4,253.5L549.8,249.7L550.4,243.9L550.8,240.5L551.5,234.4L551.8,228.5L551.9,226.4L552.4,224.5L552.8,220.8L553.4,214.8L553.5,215.3L553.8,218.6L554.5,225.2L554.8,226.2L555.0,226.4L555.5,234.2L555.8,237.0L556.5,242.3L556.8,244.6L557.5,249.7L557.8,249.1L558.0,248.6L558.5,256.0L558.8,257.9L559.5,262.0L559.8,263.5L560.5,267.4L560.8,266.0L561.0,264.6L561.5,272.0L561.8,273.3L562.5,276.6L562.8,277.7L563.6,280.7L563.8,278.6L564.1,276.3L564.5,284.3L564.8,285.2L565.6,288.3L565.8,289.2L566.6,292.9L566.8,292.1L567.1,290.9L567.6,298.0L567.8,299.3L568.6,304.3L568.8,305.5L569.6,311.4L569.8,311.1L570.1,310.7L570.6,318.7L570.8,320.3L571.6,326.5L571.8,327.5L572.7,330.7L572.8,330.5L573.1,330.3L573.2,330.3L573.6,330.9L573.8,330.9L574.7,327.7L574.8,326.9L575.7,320.3L575.8,318.6L576.2,312.2L576.7,312.7L576.8,311.7L577.7,304.8L577.8,304.0L578.7,297.1L578.8,295.9L579.2,289.3L579.7,290.0L579.8,289.3L580.7,282.8L580.8,282.3L581.8,275.7L581.8,275.1L582.2,268.2L582.7,269.3L582.8,268.8L583.8,262.6L583.8,262.3L584.8,255.7L584.8,255.6L585.3,249.5L585.8,248.6L585.8,248.3L586.5,243.1L586.8,245.0L586.8,245.1L587.8,251.4L587.8,251.5L588.3,250.6L588.8,257.2L588.8,257.2L589.8,262.1L589.8,262.2L590.8,266.6L590.9,266.9L591.3,264.5L591.8,270.7L591.8,270.9L592.8,274.7L592.9,274.9L593.8,278.2L593.9,278.5L594.4,274.9L594.8,280.9L594.9,281.6L595.8,284.5L595.9,284.7L596.8,287.2L596.9,287.5L597.4,282.1L597.8,288.6L597.9,289.9L598.8,292.0L598.9,292.3L599.8,294.3L599.9,294.6L600.4,290.2L600.8,295.5L600.9,297.0L601.8,299.5L601.9,300.0L602.8,302.8L603.0,303.4L603.5,300.7L603.8,305.2L603.9,307.1L604.8,310.7L605.0,311.4L605.8,315.2L606.0,316.2L606.5,314.2L606.8,318.6L607.0,321.0L607.8,323.9L608.0,324.3L608.8,324.0L609.0,323.6L609.0,323.6L609.5,322.5L609.8,322.3L610.0,322.5L610.8,318.5L611.0,317.1L611.8,311.8L612.1,309.9L612.5,302.3L612.8,302.8L613.0,303.3L613.8,298.1L614.1,296.4L614.8,291.5L615.1,289.7L615.6,282.3L615.8,282.8L616.1,283.5L616.8,278.9L617.1,277.2L617.8,272.9L618.1,271.0L618.6,263.9L618.8,264.4L619.1,265.3L619.8,261.3L620.1,259.5L620.8,255.3L621.1,253.0L621.6,247.9L621.8,247.7L622.1,246.6L622.5,244.1L622.8,245.8L623.1,247.8L623.8,251.4L624.2,253.5L624.7,251.7L624.8,253.5L625.1,258.1L625.8,260.8L626.2,262.3L626.8,264.7L627.2,266.2L627.7,263.3L627.8,264.6L628.2,269.5L628.8,271.5L629.2,272.7L629.8,274.4L630.2,275.7L630.7,271.0L630.8,272.1L631.2,278.2L631.8,279.7L632.2,280.7L632.8,281.9L633.3,282.8L633.8,277.3L633.8,277.9L634.2,284.7L634.8,285.8L635.3,286.8L635.8,288.0L636.3,289.2L636.8,285.6L636.8,285.7L637.3,291.8L637.8,293.5L638.3,295.1L638.8,296.9L639.3,298.9L639.8,296.5L639.8,296.5L640.3,302.9L640.8,305.0L641.3,306.9L641.8,308.2L642.4,308.7L642.8,307.8L642.8,307.8L643.0,307.9L643.3,308.1L643.8,307.7L644.4,306.1L644.8,304.3L645.4,301.2L645.8,295.2L645.9,294.1L646.4,295.8L646.8,293.4L647.4,290.2L647.8,288.0L648.4,284.8L648.8,279.5L648.9,278.1L649.4,280.0L649.8,278.0L650.4,275.0L650.8,273.3L651.5,270.0L651.8,265.7L651.9,264.4L652.4,264.5L652.8,262.3L653.2,260.1L653.5,261.1L653.8,262.3L654.5,264.9L654.8,263.7L655.0,262.7L655.5,268.2L655.8,269.1L656.5,270.7L656.8,271.5L657.5,273.1L657.8,270.8L658.0,269.2L658.5,275.1L658.8,275.8L659.5,277.2L659.8,277.7L660.5,279.0L660.8,276.3L661.0,273.8L661.5,280.6L661.8,281.1L662.5,282.2L662.8,282.5L663.6,283.5L663.8,280.5L664.0,277.2L664.5,284.7L664.8,285.0L665.6,285.8L665.8,286.0L666.6,286.9L666.8,284.7L667.1,281.7L667.6,288.2L667.8,288.5L668.6,289.7L668.8,290.0L669.6,291.5L669.8,290.1L670.1,287.6L670.6,293.4L670.8,293.9L671.6,295.8L671.8,296.2L672.7,298.1L672.8,297.1L673.1,295.5L673.6,298.8L673.8,298.7L674.5,297.6L674.7,297.8L674.8,297.9L675.7,297.1L675.8,296.2L676.2,292.3L676.7,294.6L676.8,294.0L677.7,290.7L677.8,290.3L678.7,286.9L678.8,285.9L679.2,280.7L679.7,283.6L679.8,283.2L680.7,280.2L680.8,279.9L681.8,276.5L681.8,275.9L682.2,271.7L682.7,272.3L682.8,272.0L683.4,269.5L683.8,270.4L683.8,270.6L684.8,273.1L684.8,273.0L685.3,269.6L685.8,275.2L685.8,275.3L686.8,276.6L686.8,276.6L687.8,277.8L687.8,277.8L688.3,272.8L688.8,279.0L688.8,279.0L689.8,280.0L689.8,280.1L690.8,281.0L690.8,281.1L691.3,275.0L691.8,281.8L691.8,281.9L692.8,282.7L692.8,282.7L693.8,283.4L693.9,283.4L694.4,276.7L694.8,283.4L694.8,284.0L695.8,284.5L695.9,284.6L696.8,285.1L696.9,285.2L697.4,279.1L697.8,284.8L697.9,285.8L698.8,286.4L698.9,286.5L699.8,287.3L699.9,287.4L700.4,282.4L700.8,287.1L700.9,288.4L701.8,289.4L701.9,289.5L702.8,290.6L703.0,290.8L703.4,286.3L703.8,290.5L703.9,292.0L704.7,293.8L704.8,294.0L705.0,293.4L705.8,291.9L706.0,291.7L706.5,285.6L706.8,288.9L707.0,290.5L707.8,289.5L708.0,289.3L708.8,288.3L709.0,288.1L709.5,281.9L709.8,285.0L710.0,287.0L710.8,286.1L711.0,285.9L711.8,285.1L712.0,284.8L712.5,278.6L712.8,281.5L713.0,283.9L713.8,283.1L714.0,282.8L714.8,282.1L715.1,282.0L715.4,277.5L715.6,275.4L715.8,278.8L716.0,282.0L716.8,282.5L717.1,282.6L717.8,283.1L718.1,283.3L718.6,277.5L718.8,280.2L719.1,283.9L719.8,284.3L720.1,284.5L720.8,284.9L721.1,285.0L721.6,278.7L721.8,281.1L722.1,285.5L722.8,285.8L723.1,286.0L723.8,286.3L724.2,286.4L724.6,279.6L724.8,281.7L725.1,286.7L725.8,286.9L726.2,287.0L726.8,287.2L727.2,287.3L727.7,280.4L727.8,282.1L728.2,287.5L728.8,287.7L729.2,287.8L729.8,288.0L730.2,288.1L730.7,281.8L730.8,282.9L731.2,288.4L731.8,288.6L732.2,288.8L732.8,289.1L733.3,289.3L733.7,283.5L733.8,284.1L734.2,289.8L734.8,290.1L735.3,290.3L735.8,290.6L736.3,291.0L736.7,285.8L736.8,284.8L736.8,285.1L737.3,290.6L737.8,290.1L738.3,289.6L738.8,289.1L739.3,288.6L739.8,282.4L740.3,287.7L740.8,287.2L741.3,286.8L741.8,286.3L742.4,285.9L742.8,280.0L742.8,279.6L743.3,285.1L743.8,284.7L744.4,284.2L744.8,283.9L745.4,283.4L745.8,277.9L745.9,277.1L746.4,282.7L746.8,282.3L747.4,282.4L747.4,282.4L747.8,282.2L748.4,282.4L748.8,277.7L748.9,276.6L749.4,282.9L749.8,283.2L750.4,283.5L750.8,283.7L751.4,284.0L751.8,279.4L751.9,277.8L752.4,284.5L752.8,284.7L753.4,284.9L753.8,285.1L754.5,285.3L754.8,280.7L755.0,278.6L755.4,285.7L755.8,285.8L756.5,286.0L756.8,286.1L757.5,286.2L757.8,281.9L758.0,279.3L758.5,286.5L758.8,286.5L759.5,286.7L759.8,286.7L760.5,286.9L760.8,283.1L761.0,280.3L761.5,287.1L761.8,287.2L762.5,287.4L762.8,287.5L763.6,287.7L763.8,284.7L764.0,281.7L764.5,288.1L764.8,288.2L765.6,288.6L765.8,288.7L766.6,289.1L766.8,286.5L767.1,283.0L767.3,286.2L767.6,289.5L767.8,289.0L768.6,288.4L768.8,288.3L769.6,287.7L769.8,285.3L770.1,281.3L770.6,287.0L770.8,286.8L771.6,286.2L771.8,286.1L772.6,285.6L772.8,283.6L773.1,279.1L773.6,284.9L773.8,284.8L774.6,284.3L774.8,284.2L775.7,283.7L775.8,282.1L776.2,277.2L776.6,283.2L776.8,283.2L777.0,283.3L777.7,283.2L777.8,283.2L778.7,283.6L778.8,282.4L779.2,277.4L779.7,283.9L779.8,284.0L780.7,284.3L780.8,284.3L781.7,284.6L781.8,283.8L782.2,278.2L782.7,284.9L782.8,285.0L783.7,285.2L783.8,285.3L784.8,285.5L784.8,285.1L785.2,278.7L785.7,285.8L785.8,285.8L786.8,286.0L786.8,286.0L787.8,286.1L788.3,279.1L788.8,286.3L788.8,286.3L789.8,286.4L790.8,286.6L790.8,286.6L791.3,279.7L791.8,286.7L792.8,286.9L792.8,286.9L793.8,287.1L793.9,287.1L794.3,280.6L794.8,286.9L794.8,287.3L795.8,287.5L795.9,287.6L796.8,287.8L796.9,287.9L797.4,281.6L797.8,287.3L797.9,288.2L798.8,288.5L798.9,288.5L799.4,289.0L799.8,288.4L799.9,288.2L800.4,281.8L800.8,286.5L800.9,287.6L801.8,287.0L801.9,287.0L802.8,286.4L803.0,286.3L803.4,279.9L803.8,284.3L803.9,285.8L804.8,285.3L805.0,285.2L805.8,284.8L806.0,284.7L806.5,278.1L806.8,282.3L807.0,284.2L807.8,283.9L808.0,284.0L808.0,284.0L808.8,283.9L809.0,284.0L809.5,277.6L809.8,281.8L810.0,284.3L810.8,284.5L811.0,284.6L811.8,284.8L812.0,284.9L812.5,278.3L812.8,282.1L813.0,285.1L813.8,285.3L814.0,285.4L814.8,285.5L815.1,285.6L815.5,278.8L815.8,282.3L816.0,285.8L816.8,285.9L817.1,286.0L817.8,286.1L818.1,286.1L818.6,279.1L818.8,282.3L819.1,286.3L819.8,286.4L820.1,286.4L820.8,286.5L821.1,286.5L821.6,279.5L821.8,282.2L822.1,286.6L822.8,286.7L823.1,286.7L823.8,286.8L824.2,286.9L824.6,280.1L824.8,282.3L825.1,287.0L825.8,287.1L826.2,287.2L826.8,287.3L827.2,287.4L827.7,280.9L827.8,282.6L828.2,287.6L828.8,287.7L829.2,287.8L829.8,288.0L830.2,288.1L830.7,281.6L830.8,282.9L831.0,285.8L831.2,288.3L831.8,287.8L832.2,287.6L832.8,287.3L833.2,287.1L833.7,280.5L833.8,281.3L834.2,286.6L834.8,286.3L835.2,286.1L835.8,285.9L836.3,285.7L836.8,279.1L836.8,279.5L837.2,285.3L837.8,285.0L838.3,284.9L838.8,284.6L839.3,284.4L839.8,277.6L839.8,277.6L840.0,280.4L840.3,284.4L840.8,284.4L841.3,284.5L841.8,284.7L842.3,284.8L842.8,278.6L842.8,278.3L843.3,285.1L843.8,285.2L844.3,285.3L844.8,285.4L845.4,285.6L845.8,279.6L845.9,278.9L846.3,285.8L846.8,285.9L847.4,286.0L847.8,286.1L848.4,286.2L848.8,280.4L848.9,279.2L849.4,286.3L849.8,286.4L850.4,286.5L850.8,286.5L851.4,286.6L851.8,281.2L851.9,279.5L852.4,286.7L852.8,286.7L853.4,286.8L853.8,286.8L854.5,286.9L854.8,282.0L854.9,280.0L855.4,287.0L855.8,287.1L856.5,287.1L856.8,287.2L857.5,287.3L857.8,283.0L858.0,280.7L858.5,287.5L858.8,287.5L859.5,287.6L859.8,287.7L860.5,287.9L860.8,284.1L861.0,281.4L861.5,288.1L861.8,288.2L862.4,288.6L862.5,288.4L862.8,288.1L863.5,287.6L863.8,284.2L864.0,281.1L864.5,287.2L864.8,287.0L865.5,286.7L865.8,286.6L866.6,286.2L866.8,283.2L867.1,279.6L867.5,285.8L867.8,285.7L868.6,285.4L868.8,285.3L869.6,284.9L869.8,282.3L870.1,278.3L870.6,284.6L870.8,284.7L871.0,284.7L871.6,284.6L871.8,284.6L872.6,284.8L872.8,282.7L873.1,278.3L873.6,285.1L873.8,285.1L874.6,285.3L874.8,285.4L875.7,285.6L875.8,283.7L876.1,278.8L876.6,285.8L876.8,285.8L877.7,285.9L877.8,286.0L878.7,286.1L878.8,284.7L879.2,279.1L879.7,286.2L879.8,286.3L880.7,286.4L880.8,286.4L881.7,286.5L881.8,285.4L882.2,279.4L882.7,286.5L882.8,286.5L883.7,286.6L883.8,286.6L884.8,286.7L884.8,286.2L885.2,280.0L885.7,286.9L885.8,286.9L886.8,287.0L886.8,287.0L887.8,287.2L887.8,287.1L888.3,280.7L888.8,287.4L888.8,287.4L889.8,287.8L889.8,287.8L890.0,287.9L890.8,287.4L890.8,287.3L891.3,280.7L891.8,287.0L891.8,287.0L892.8,286.7L892.8,286.7L893.8,286.4L893.9,286.4L894.3,279.6L894.8,285.8L894.8,286.1L895.8,285.8L895.9,285.8L896.8,285.5L896.9,285.5L897.4,278.7L897.8,284.6L897.9,285.4L898.0,285.4L898.8,285.4L898.9,285.4L899.8,285.5L899.9,285.5L900.4,278.7L900.8,284.5L900.9,285.6L901.8,285.8L901.9,285.8L902.8,285.9L902.9,285.9L903.4,279.0L903.8,284.4L903.9,286.0L904.8,286.1L904.9,286.1L905.8,286.2L906.0,286.2L906.5,279.2L906.8,284.2L906.9,286.3L907.8,286.4L908.0,286.4L908.8,286.4L909.0,286.5L909.5,279.4L909.8,284.0L910.0,286.5L910.8,286.5L911.0,286.6L911.8,286.6L912.0,286.6L912.5,279.6L912.8,283.7L913.0,286.7L913.8,286.7L914.0,286.7L914.8,286.8L915.1,286.8L915.5,279.9L915.8,283.6L916.0,286.9L916.8,287.0L917.1,287.0L917.8,287.1L918.1,287.1L918.6,280.3L918.8,283.5L919.1,287.2L919.8,287.4L920.0,287.5L920.1,287.4L920.8,287.2L921.1,287.1L921.6,280.2L921.8,282.9L922.1,286.9L922.8,286.8L923.1,286.7L923.8,286.6L924.1,286.6L924.6,279.7L924.8,281.9L925.1,286.4L925.8,286.3L926.1,286.3L926.8,286.2L927.2,286.1L927.7,279.5L927.8,281.2L928.0,284.4L928.1,286.3L928.8,286.8L929.2,286.8L929.8,286.8L930.2,286.8L930.7,279.7L930.8,281.2L931.2,286.8L931.8,286.8L932.2,286.8L932.8,286.8L933.2,286.8L933.7,279.7L933.8,280.7L934.2,286.8L934.8,286.8L935.2,286.8L935.8,286.8L936.3,286.8L936.8,279.7L936.8,280.3L937.2,286.8L937.8,286.8L938.3,286.8L938.8,286.8L939.3,286.8L939.8,279.7L939.8,279.8L940.3,286.8L940.8,286.8L941.3,286.8L941.8,286.8L942.3,286.8L942.8,279.8L942.8,279.7L943.3,286.8L943.8,286.8L944.3,286.8L944.8,286.8L945.4,286.8L945.8,280.3L945.8,279.7L946.3,286.8L946.8,286.8L947.4,286.8L947.8,286.8L948.4,286.8L948.8,280.7L948.9,279.7L949.4,286.8L949.8,286.8L950.4,286.8L950.8,286.8L951.4,286.8L951.8,281.2L951.9,279.7L952.4,286.8L952.8,286.8L953.4,286.8L953.8,286.8L954.5,286.8L954.8,281.6L954.9,279.7L955.4,286.8L955.8,286.8L956.5,286.8L956.8,286.8L957.5,286.8L957.8,282.0L958.0,279.7L958.5,286.8L958.8,286.8L959.5,286.8L959.8,286.8L960.5,286.8L960.8,282.5L961.0,279.7L961.5,286.8L961.8,286.8L962.5,286.8L962.8,286.8L963.5,286.8L963.8,282.9L964.0,279.7L964.5,286.8L964.8,286.8L965.5,286.8L965.8,286.8L966.6,286.8L966.8,283.4L967.0,279.7L967.5,286.8L967.8,286.8L968.6,286.8L968.8,286.8L969.6,286.8L969.8,283.8L970.1,279.7L970.2,281.3" stroke="#1010ff" stroke-width="1.25"/></g>
<rect x="55.5" y="474.5" width="6.5" height="6.5" fill="#ffffff" stroke="#111" stroke-width="1"/>
<circle cx="970" cy="477" r="4" fill="#17706e" stroke="#0a3a3a" stroke-width="0.8"/>
<rect x="0" y="509" width="1000" height="24" fill="url(#gstatus)" />
<line x1="0" y1="509.5" x2="1000" y2="509.5" stroke="#c9bcae" stroke-width="1" />
<line x1="0" y1="532.5" x2="1000" y2="532.5" stroke="#a8978a" stroke-width="1" />
<line x1="999.5" y1="509" x2="999.5" y2="533" stroke="#a8978a" stroke-width="1" />
<line x1="0.5" y1="509" x2="0.5" y2="533" stroke="#a8978a" stroke-width="1" />
<text x="7.5" y="523.6" font-size="8.7" fill="#1e1e1e" text-anchor="start" >Stopped</text>
<path d="M52.5,516.5 L58.5,520.5 L52.5,524.5 Z" fill="#2a8a2a"/>
<rect x="64.5" y="511.5" width="19" height="18" fill="url(#gsel)" stroke="#8ec2ee" stroke-width="1"/>
<rect x="70" y="517" width="8" height="7" fill="#ff1010" />
<line x1="85.5" y1="512" x2="85.5" y2="530" stroke="#bcae9f" stroke-width="1" />
<line x1="86.5" y1="512" x2="86.5" y2="530" stroke="#ffffff" stroke-width="1" opacity="0.8"/>
<text x="89.5" y="523.6" font-size="8.7" fill="#1e1e1e" text-anchor="start" >Trigger</text>
<rect x="124.5" y="511.5" width="54.5" height="17.5" fill="#fff" stroke="#d8cfc4"/>
<text x="127.5" y="523.6" font-size="8.7" fill="#1e1e1e" text-anchor="start" >None</text>
<path d="M166.5,518.5 L173.5,518.5 L170,522.0999999999999 Z" fill="#8c8c8c"/>
<path d="M185,524 H188 V518 H192 V524 H196" fill="none" stroke="#b8b8b8" stroke-width="1"/><path d="M191,514 L196,514 L196,519 Z" fill="#c0c0c0"/><circle cx="191.5" cy="522" r="1.3" fill="#5bd05b"/>
<line x1="201.5" y1="512" x2="201.5" y2="530" stroke="#bcae9f" stroke-width="1" />
<line x1="202.5" y1="512" x2="202.5" y2="530" stroke="#ffffff" stroke-width="1" opacity="0.8"/>
<rect x="207.5" y="511.5" width="31.5" height="17.5" fill="#fff" stroke="#d8cfc4"/>
<text x="210.5" y="523.4" font-size="8.7" fill="#c4c4cc" text-anchor="start" >A</text>
<path d="M226.0,518.5 L233.0,518.5 L229.5,522.0999999999999 Z" fill="#bdbdbd"/>
<line x1="242.5" y1="512" x2="242.5" y2="530" stroke="#bcae9f" stroke-width="1" />
<line x1="243.5" y1="512" x2="243.5" y2="530" stroke="#ffffff" stroke-width="1" opacity="0.8"/>
<rect x="245" y="511" width="19" height="18" fill="#dfe9ea" />
<path d="M249,525 L254,518.5 Q256,516.5 260,516.5" fill="none" stroke="#8a8a8a" stroke-width="0.8"/><path d="M253,516 V524 M252,517.2 L253,516 L254,517.2 M252,522.8 L253,524 L254,522.8" stroke="#a89cf0" stroke-width="0.8" fill="none"/>
<path d="M269,516.5 L273,516.5 L279,524.5" fill="none" stroke="#a0a0a0" stroke-width="0.8"/><path d="M274,516 V524 M273,517.2 L274,516 L275,517.2 M273,522.8 L274,524 L275,522.8" stroke="#b4a8f2" stroke-width="0.8" fill="none"/>
<line x1="285.5" y1="512" x2="285.5" y2="530" stroke="#bcae9f" stroke-width="1" />
<line x1="286.5" y1="512" x2="286.5" y2="530" stroke="#ffffff" stroke-width="1" opacity="0.8"/>
<rect x="291.5" y="511.5" width="78" height="17" rx="2.5" fill="url(#gbtnd)" stroke="#cbbfb2" stroke-width="1"/>
<rect x="309" y="512" width="42" height="16" fill="#f4f2ed" />
<line x1="309.5" y1="512" x2="309.5" y2="528" stroke="#cbbfb2" stroke-width="1" />
<line x1="350.5" y1="512" x2="350.5" y2="528" stroke="#cbbfb2" stroke-width="1" />
<path d="M302.0,516.5 L298.0,520.0 L302.0,523.5 Z" fill="#8fc0e8"/>
<path d="M358.5,516.5 L362.5,520.0 L358.5,523.5 Z" fill="#8fc0e8"/>
<text x="315" y="523.6" font-size="8.8" fill="#c8c8c8" text-anchor="start" >0 V</text>
<line x1="373.5" y1="512" x2="373.5" y2="530" stroke="#bcae9f" stroke-width="1" />
<line x1="374.5" y1="512" x2="374.5" y2="530" stroke="#ffffff" stroke-width="1" opacity="0.8"/>
<rect x="379.5" y="511.5" width="78" height="17" rx="2.5" fill="url(#gbtnd)" stroke="#cbbfb2" stroke-width="1"/>
<rect x="397" y="512" width="43" height="16" fill="#f4f2ed" />
<line x1="397.5" y1="512" x2="397.5" y2="528" stroke="#cbbfb2" stroke-width="1" />
<line x1="439.5" y1="512" x2="439.5" y2="528" stroke="#cbbfb2" stroke-width="1" />
<path d="M390.0,516.5 L386.0,520.0 L390.0,523.5 Z" fill="#8fc0e8"/>
<path d="M447.0,516.5 L451.0,520.0 L447.0,523.5 Z" fill="#8fc0e8"/>
<text x="403" y="523.6" font-size="8.8" fill="#c8c8c8" text-anchor="start" >50 %</text>
<path d="M464,521 L467,517 L472,525 L476,519" fill="none" stroke="#999" stroke-width="0.9"/><path d="M465,516.5 H475 M472.5,514.5 L475,516.5 L472.5,518.5" stroke="#a090f0" stroke-width="1" fill="none"/><circle cx="474.5" cy="519.5" r="1.2" fill="#e8d070"/>
<rect x="483.5" y="511.5" width="77" height="17" rx="2.5" fill="url(#gbtnd)" stroke="#cbbfb2" stroke-width="1"/>
<rect x="501" y="512" width="42" height="16" fill="#f4f2ed" />
<line x1="501.5" y1="512" x2="501.5" y2="528" stroke="#cbbfb2" stroke-width="1" />
<line x1="542.5" y1="512" x2="542.5" y2="528" stroke="#cbbfb2" stroke-width="1" />
<path d="M494.0,516.5 L490.0,520.0 L494.0,523.5 Z" fill="#8fc0e8"/>
<path d="M550.0,516.5 L554.0,520.0 L550.0,523.5 Z" fill="#8fc0e8"/>
<text x="507" y="523.6" font-size="8.8" fill="#c8c8c8" text-anchor="start" >0 s</text>
<line x1="565.5" y1="512" x2="565.5" y2="530" stroke="#6e5e50" stroke-width="1" />
<text x="571" y="523.8" font-size="8.5" fill="#1e1e2e" text-anchor="start" >Measurements</text>
<g opacity="1"><rect x="634.5" y="515.0" width="11" height="10" rx="1" fill="url(#ggreen)" stroke="#0f6a0f" stroke-width="1"/>
<path d="M637.0,520.0 H643.0 M640.0,517.0 V523.0" stroke="#fff" stroke-width="1.6"/>
</g>
<g opacity="0.35"><rect x="653.5" y="515.0" width="11" height="10" rx="1" fill="url(#ggreen)" stroke="#0f6a0f" stroke-width="1"/>
<path d="M656.0,520.0 H662.0" stroke="#fff" stroke-width="1.6"/>
</g>
<g opacity="0.35"><rect x="673.0" y="515.0" width="11" height="10" rx="1" fill="url(#ggreen)" stroke="#0f6a0f" stroke-width="1"/>
<path d="M674.7,522.3 L678.5,517.5 L682.3,522.3 Z" fill="#fff"/>
</g>
<line x1="688.5" y1="512" x2="688.5" y2="530" stroke="#bcae9f" stroke-width="1" />
<line x1="689.5" y1="512" x2="689.5" y2="530" stroke="#ffffff" stroke-width="1" opacity="0.8"/>
<text x="694.5" y="523.8" font-size="8.5" fill="#1e1e2e" text-anchor="start" >Rulers</text>
<g opacity="1"><rect x="725.0" y="515.0" width="11" height="10" rx="1" fill="url(#ggreen)" stroke="#0f6a0f" stroke-width="1"/>
<path d="M726.7,522.3 L730.5,517.5 L734.3,522.3 Z" fill="#fff"/>
</g>
<text x="742" y="523.8" font-size="8.5" fill="#1e1e2e" text-anchor="start" >Notes</text>
<g opacity="1"><rect x="770.0" y="515.0" width="11" height="10" rx="1" fill="url(#ggreen)" stroke="#0f6a0f" stroke-width="1"/>
<path d="M771.7,522.3 L775.5,517.5 L779.3,522.3 Z" fill="#fff"/>
</g>
<text x="786.5" y="523.8" font-size="8.5" fill="#1e1e2e" text-anchor="start" >Channel Labels</text>
<g opacity="1"><rect x="850.0" y="515.0" width="11" height="10" rx="1" fill="url(#ggreen)" stroke="#0f6a0f" stroke-width="1"/>
<path d="M851.7,522.3 L855.5,517.5 L859.3,522.3 Z" fill="#fff"/>
</g>
<rect x="0" y="533" width="1000" height="29" fill="#000000" />
<rect x="35" y="533" width="252" height="29" fill="#333333" />
<path d="M11.5,543 L16.9,542.2 V547.4 H11.5 Z M17.8,542.1 L24,541.3 V547.4 H17.8 Z M11.5,548.2 H16.9 V553.4 L11.5,552.6 Z M17.8,548.2 H24 V554.3 L17.8,553.5 Z" fill="#ffffff"/>
<circle cx="50" cy="548" r="7" fill="none" stroke="#ffffff" stroke-width="1.8"/>
<text x="64.5" y="552" font-size="10.6" fill="#c8c8c8" text-anchor="start" >Type here to search</text>
<rect x="269.5" y="542.5" width="5" height="8" rx="2.5" fill="none" stroke="#aaa" stroke-width="1"/><path d="M268,549 Q272,554 276,549 M272,552.5 V555 M270,555 H274" fill="none" stroke="#aaa" stroke-width="1"/>
<rect x="300.5" y="542.5" width="8" height="9.5" fill="none" stroke="#fff" stroke-width="1.1"/><path d="M299,543.5 H297.5 V551 H299 M310,543.5 H311.5 V551 H310" fill="none" stroke="#fff" stroke-width="1"/>
<path fill-rule="evenodd" fill="#0c7ad8" d="M336,549.5 C336,543.5 339,540 343,540 C347,540 349.5,543 349.5,548 L349.5,550 L339.8,550 C340.2,552.4 342,553.3 344.5,553.3 C346.3,553.3 347.8,552.8 349,552.2 L349,555 C347.5,555.6 345.8,555.8 344,555.8 C339,555.8 336,553.3 336,549.5 Z M339.8,547 L346.2,547 C346,544.8 344.8,543.4 343,543.4 C341.3,543.4 340.1,544.8 339.8,547 Z"/>
<path fill="#0c7ad8" d="M334.3,546.8 C335.5,543.8 337.8,542.2 340.5,542.6 L339.6,544.6 C337.8,544.4 336,545.3 334.3,546.8 Z"/>
<path d="M370,540.8 H376.5 L377.6,542 H385.3 V553.8 H370 Z" fill="#f9e394"/><rect x="370" y="540.8" width="6.8" height="1.4" fill="#f1c83a"/>
<path d="M373,554 V549.2 Q373,548 374.2,548 H381.8 Q383,548 383,549.2 V554 H380.2 V551.3 H375.8 V554 Z" fill="#2aa6ee"/>
<path d="M410,542 Q410,538.5 413.5,538.5 Q417,538.5 417,542" fill="none" stroke="#fff" stroke-width="1"/><rect x="405" y="542" width="17" height="14" rx="1" fill="#ffffff"/><rect x="409" y="545.5" width="4" height="3.8" fill="#f25022"/><rect x="413.8" y="545.5" width="4" height="3.8" fill="#7fba00"/><rect x="409" y="550" width="4" height="3.8" fill="#00a4ef"/><rect x="413.8" y="550" width="4" height="3.8" fill="#ffb900"/>
<path d="M441,545.5 L449.5,540 L458,545.5 V554 H441 Z" fill="#fff"/><path d="M441,545.5 L449.5,544.8 L453.5,551 L452.5,547.5 L458,545.5" fill="#000"/>
<rect x="468" y="533" width="35" height="29" fill="#333333" />
<rect x="468" y="561" width="35" height="1" fill="#76b9ed" />
<polygon points="477,549 487,553.6 487,556 477,551" fill="#1d3c66"/><polygon points="487,553.6 493.8,550.4 493.8,552.6 487,556" fill="#284c78"/>
<polygon points="477,549 484,546.2 493.8,550.4 487,553.6" fill="#92cdf2"/>
<rect x="483.8" y="539.3" width="10" height="7.6" fill="#111" stroke="#cfcfcf" stroke-width="0.8"/>
<path d="M484.5,541.5 L486,540.5 L487.5,542 L489,540.3 L490.5,541.8 L492.5,540.6 L493,542.2" fill="none" stroke="#e02424" stroke-width="1"/><path d="M484.5,545 L486.5,545 L487.2,543 L488,545 L491,545 L491.6,542.8 L492.3,545 L493,545" fill="none" stroke="#22d022" stroke-width="0.8"/>
<path d="M848,550 L852.5,545.5 L857,550" fill="none" stroke="#ddd" stroke-width="1"/>
<rect x="869.5" y="544.5" width="6.5" height="6.5" fill="none" stroke="#ddd" stroke-width="1"/><rect x="870" y="547" width="4" height="4" fill="#ddd"/><path d="M865,543 V551 M867.5,543 V551 M864,546 H868.5" stroke="#ddd" stroke-width="1"/>
<path d="M884.5,553 Q885,545 893,544 M887,553 Q887.5,547.5 893,547 M889.5,553 Q890,550 893,550" fill="none" stroke="#ddd" stroke-width="1"/><rect x="891.5" y="551.5" width="2" height="2" fill="#fff"/>
<path d="M900,546 H902.5 L906,542.5 V553 L902.5,549.5 H900 Z" fill="none" stroke="#ddd" stroke-width="1"/><path d="M907.5,546 Q909,548 907.5,550 M909.5,544.5 Q912,548 909.5,551.5" fill="none" stroke="#ddd" stroke-width="0.9"/>
<text x="937.5" y="544.2" font-size="8.8" fill="#e8e8e8" text-anchor="middle" >4:39 PM</text>
<text x="938" y="556.5" font-size="8.8" fill="#e8e8e8" text-anchor="middle" >11/18/2017</text>
<path d="M970,542 H982 V551 H975 L972.5,553.5 V551 H970 Z" fill="#fff"/><path d="M972,544.5 H980 M972,546.5 H980 M972,548.5 H977" stroke="#222" stroke-width="0.8"/>
<circle cx="981.5" cy="552" r="5.3" fill="#2a2a2a" stroke="#777" stroke-width="1"/>
<text x="981.5" y="555.2" font-size="8" fill="#fff" text-anchor="middle" font-weight="bold">2</text>
<line x1="997.5" y1="533" x2="997.5" y2="562" stroke="#555" stroke-width="1" />
</svg></body></html>
